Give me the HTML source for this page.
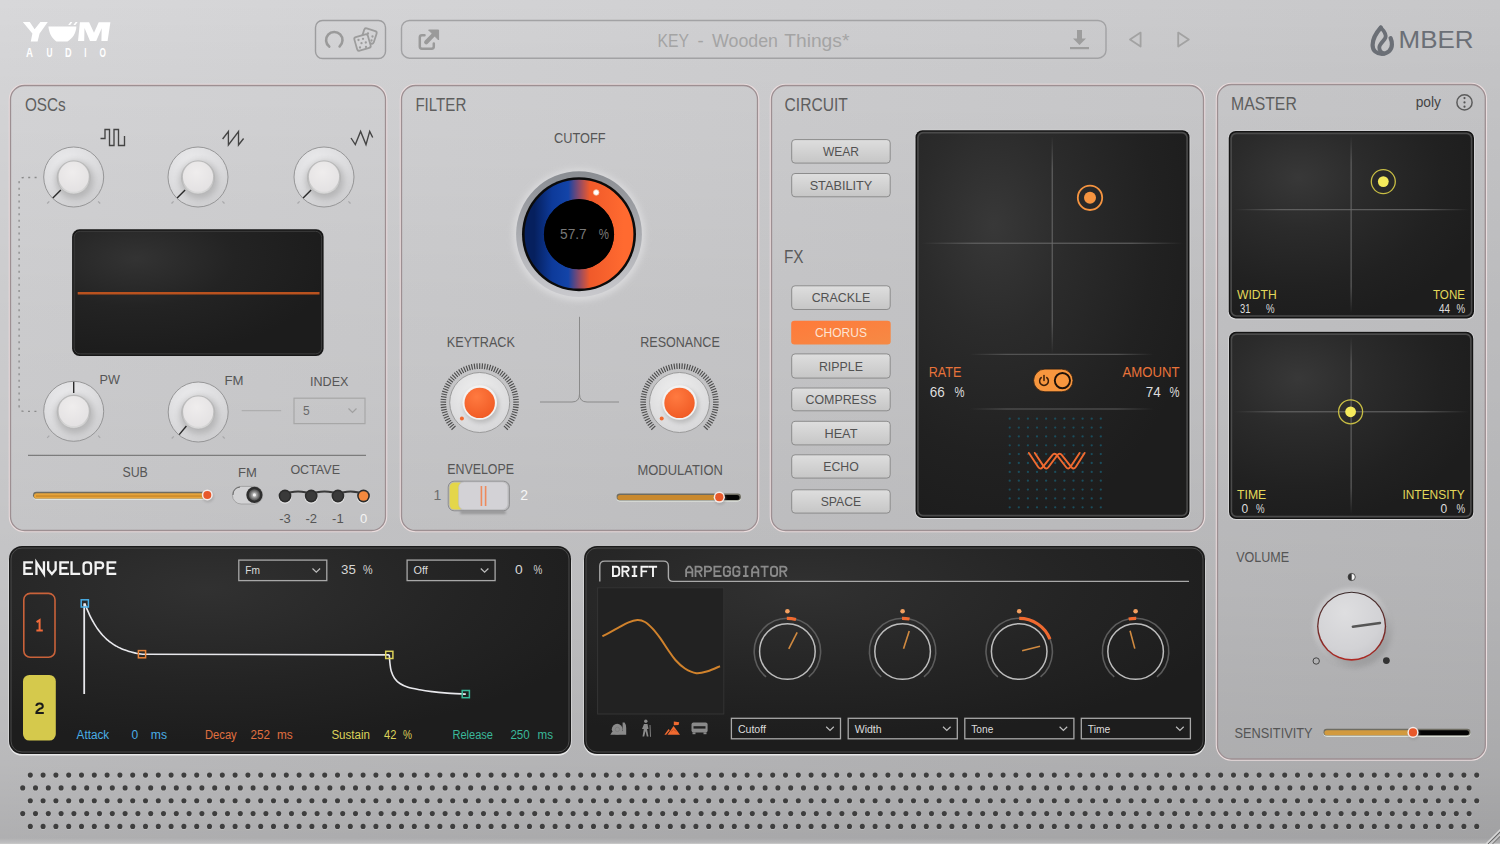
<!DOCTYPE html>
<html><head><meta charset="utf-8"><style>
html,body{margin:0;padding:0;width:1500px;height:844px;overflow:hidden;background:#cfcfd1}
svg{display:block}
</style></head><body>
<svg width="1500" height="844" viewBox="0 0 1500 844">
<defs>
<linearGradient id="bg" x1="0" y1="0" x2="1" y2="0">
  <stop offset="0" stop-color="#d8d8da"/>
  <stop offset="1" stop-color="#c7c7c9"/>
</linearGradient>
<linearGradient id="bgv" x1="0" y1="0" x2="0" y2="1">
  <stop offset="0" stop-color="#000" stop-opacity="0"/>
  <stop offset="0.085" stop-color="#000" stop-opacity="0.02"/>
  <stop offset="0.36" stop-color="#000" stop-opacity="0.058"/>
  <stop offset="0.47" stop-color="#000" stop-opacity="0.067"/>
  <stop offset="0.7" stop-color="#000" stop-opacity="0.1"/>
  <stop offset="0.906" stop-color="#000" stop-opacity="0.145"/>
  <stop offset="0.993" stop-color="#000" stop-opacity="0.19"/>
  <stop offset="1" stop-color="#000" stop-opacity="0.1"/>
</linearGradient>
<radialGradient id="padglow" cx="0.3" cy="0.3" r="0.7">
  <stop offset="0" stop-color="#2f2f2f"/>
  <stop offset="1" stop-color="#1c1c1c"/>
</radialGradient>
<radialGradient id="darkpanel" cx="0.35" cy="0.2" r="0.75">
  <stop offset="0" stop-color="#313131"/>
  <stop offset="0.6" stop-color="#242424"/>
  <stop offset="1" stop-color="#1d1d1d"/>
</radialGradient>
<linearGradient id="btn" x1="0" y1="0" x2="0" y2="1">
  <stop offset="0" stop-color="#dedede"/>
  <stop offset="1" stop-color="#c6c6c6"/>
</linearGradient>
<linearGradient id="btnOn" x1="0" y1="0" x2="1" y2="1">
  <stop offset="0" stop-color="#ff7a3a"/>
  <stop offset="1" stop-color="#f58a45"/>
</linearGradient>
<radialGradient id="knobOuter" cx="0.4" cy="0.3" r="0.75">
  <stop offset="0" stop-color="#ececee"/>
  <stop offset="0.6" stop-color="#dddddf"/>
  <stop offset="1" stop-color="#cdcdcf"/>
</radialGradient>
<radialGradient id="capFace" cx="0.45" cy="0.35" r="0.7">
  <stop offset="0" stop-color="#efeded"/>
  <stop offset="1" stop-color="#e3e1e2"/>
</radialGradient>
<linearGradient id="capSide" x1="0" y1="0" x2="0" y2="1">
  <stop offset="0" stop-color="#c2c2c2"/>
  <stop offset="0.55" stop-color="#bcbcbc"/>
  <stop offset="1" stop-color="#dcdcdc"/>
</linearGradient>
<filter id="blur2" x="-50%" y="-50%" width="200%" height="200%"><feGaussianBlur stdDeviation="2"/></filter>
<filter id="blur3" x="-50%" y="-50%" width="200%" height="200%"><feGaussianBlur stdDeviation="3"/></filter>
<filter id="blur1" x="-50%" y="-50%" width="200%" height="200%"><feGaussianBlur stdDeviation="1"/></filter>
<radialGradient id="screenGlow" cx="0.25" cy="0.22" r="0.8">
  <stop offset="0" stop-color="#333333"/>
  <stop offset="0.5" stop-color="#232323"/>
  <stop offset="1" stop-color="#1c1c1c"/>
</radialGradient>
<linearGradient id="cutRing" x1="0" y1="0" x2="1" y2="0">
  <stop offset="0" stop-color="#06205e"/>
  <stop offset="0.2" stop-color="#0d3a9a"/>
  <stop offset="0.38" stop-color="#1344a8"/>
  <stop offset="0.5" stop-color="#8a4a6a"/>
  <stop offset="0.62" stop-color="#f05a2a"/>
  <stop offset="1" stop-color="#ff6a30"/>
</linearGradient>
<linearGradient id="cutOuter" x1="0" y1="0" x2="0" y2="1">
  <stop offset="0" stop-color="#8a8d92"/>
  <stop offset="0.5" stop-color="#a9abb0"/>
  <stop offset="1" stop-color="#c9c9cd"/>
</linearGradient>
<radialGradient id="discLight" cx="0.45" cy="0.35" r="0.7">
  <stop offset="0" stop-color="#f0f0f0"/>
  <stop offset="1" stop-color="#d6d6d8"/>
</radialGradient>
<radialGradient id="orangeCap" cx="0.4" cy="0.3" r="0.75">
  <stop offset="0" stop-color="#ff7a40"/>
  <stop offset="1" stop-color="#f05a24"/>
</radialGradient>
<linearGradient id="hfade" x1="0" y1="0" x2="1" y2="0">
  <stop offset="0" stop-color="#6a6a6a" stop-opacity="0"/>
  <stop offset="0.2" stop-color="#6a6a6a" stop-opacity="1"/>
  <stop offset="0.8" stop-color="#6a6a6a" stop-opacity="1"/>
  <stop offset="1" stop-color="#6a6a6a" stop-opacity="0"/>
</linearGradient>
<linearGradient id="vfade" x1="0" y1="0" x2="0" y2="1">
  <stop offset="0" stop-color="#6a6a6a" stop-opacity="0"/>
  <stop offset="0.15" stop-color="#6a6a6a" stop-opacity="1"/>
  <stop offset="0.85" stop-color="#6a6a6a" stop-opacity="1"/>
  <stop offset="1" stop-color="#6a6a6a" stop-opacity="0"/>
</linearGradient>
<radialGradient id="padFill" cx="0.28" cy="0.24" r="0.8">
  <stop offset="0" stop-color="#383838"/>
  <stop offset="0.35" stop-color="#2b2b2b"/>
  <stop offset="0.75" stop-color="#212121"/>
  <stop offset="1" stop-color="#1d1d1d"/>
</radialGradient>
<radialGradient id="volKnob" cx="0.4" cy="0.3" r="0.8">
  <stop offset="0" stop-color="#dedee0"/>
  <stop offset="0.7" stop-color="#d2d2d5"/>
  <stop offset="1" stop-color="#c6c6ca"/>
</radialGradient>
<linearGradient id="volRim" x1="0" y1="0" x2="0" y2="1">
  <stop offset="0" stop-color="#3a2a2a"/>
  <stop offset="0.5" stop-color="#6a2a28"/>
  <stop offset="1" stop-color="#b02a24"/>
</linearGradient>
</defs>
<rect x="0" y="0" width="1500" height="844" fill="url(#bg)"/>
<rect x="0" y="0" width="1500" height="844" fill="url(#bgv)"/>
<rect x="9.5" y="84.5" width="377" height="447" rx="15" fill="none" stroke="#eadcdd" stroke-width="1.5"/>
<rect x="10.5" y="85.5" width="375" height="445" rx="14" fill="none" stroke="#9d8f92" stroke-width="1.3"/>
<rect x="400.5" y="84.5" width="358" height="447" rx="15" fill="none" stroke="#eadcdd" stroke-width="1.5"/>
<rect x="401.5" y="85.5" width="356" height="445" rx="14" fill="none" stroke="#9d8f92" stroke-width="1.3"/>
<rect x="770.5" y="84.5" width="434" height="447" rx="15" fill="none" stroke="#eadcdd" stroke-width="1.5"/>
<rect x="771.5" y="85.5" width="432" height="445" rx="14" fill="none" stroke="#9d8f92" stroke-width="1.3"/>
<rect x="1216.5" y="83.5" width="269.79999999999995" height="676.5" rx="15" fill="none" stroke="#eadcdd" stroke-width="1.5"/>
<rect x="1217.5" y="84.5" width="267.79999999999995" height="674.5" rx="14" fill="none" stroke="#9d8f92" stroke-width="1.3"/>
<text x="24.9" y="110.7" font-size="18" fill="#5e5e5e" text-anchor="start" font-weight="normal" font-family='"Liberation Sans", sans-serif' textLength="40.8" lengthAdjust="spacingAndGlyphs" >OSCs</text>
<text x="415.4" y="110.5" font-size="18" fill="#5e5e5e" text-anchor="start" font-weight="normal" font-family='"Liberation Sans", sans-serif' textLength="50.9" lengthAdjust="spacingAndGlyphs" >FILTER</text>
<text x="784.6" y="110.7" font-size="18" fill="#5e5e5e" text-anchor="start" font-weight="normal" font-family='"Liberation Sans", sans-serif' textLength="63.3" lengthAdjust="spacingAndGlyphs" >CIRCUIT</text>
<text x="1231" y="110.2" font-size="18" fill="#5e5e5e" text-anchor="start" font-weight="normal" font-family='"Liberation Sans", sans-serif' textLength="65.8" lengthAdjust="spacingAndGlyphs" >MASTER</text>
<g fill="#ffffff">
<polygon points="22.8,22 29.8,22 34.6,29.2 40.4,22 47.8,22 39.6,33.5 37.6,41.6 30.8,41.6 32.4,33.5"/>
<path d="M48.4,26.4 L76.4,26.4 C76,33 72.5,38.5 67.4,41.4 L56.4,41.4 C52,38.5 49,33 48.4,26.4 Z"/>
<polygon points="68.2,25 70.4,22 72.4,22 70.2,25"/><polygon points="73.4,25 75.6,22 77.6,22 75.4,25"/>
<polygon points="79.9,22.2 89.1,22.2 94,32.8 98.7,22.2 110.4,22.2 107.6,41.1 101.4,41.1 101.7,28.2 96.2,41.1 90,41.1 84.5,27.9 84.2,41.1 78,41.1"/>
</g>
<text x="26" y="56.8" font-size="13" fill="#ffffff" text-anchor="start" font-weight="bold" font-family='"Liberation Sans", sans-serif' textLength="7" lengthAdjust="spacingAndGlyphs" >A</text>
<text x="46.4" y="56.8" font-size="13" fill="#ffffff" text-anchor="start" font-weight="bold" font-family='"Liberation Sans", sans-serif' textLength="6.0" lengthAdjust="spacingAndGlyphs" >U</text>
<text x="65" y="56.8" font-size="13" fill="#ffffff" text-anchor="start" font-weight="bold" font-family='"Liberation Sans", sans-serif' textLength="6.599999999999994" lengthAdjust="spacingAndGlyphs" >D</text>
<text x="84.2" y="56.8" font-size="13" fill="#ffffff" text-anchor="start" font-weight="bold" font-family='"Liberation Sans", sans-serif' textLength="2.2" lengthAdjust="spacingAndGlyphs" >I</text>
<text x="99.6" y="56.8" font-size="13" fill="#ffffff" text-anchor="start" font-weight="bold" font-family='"Liberation Sans", sans-serif' textLength="6.400000000000006" lengthAdjust="spacingAndGlyphs" >O</text>
<rect x="315.5" y="20.5" width="70" height="38" rx="7" fill="none" stroke="#9d9d9f" stroke-width="1.4"/>
<path d="M329.2,46.6 A8.2,8.2 0 1 1 339.6,46.4" fill="none" stroke="#9a9a9a" stroke-width="2.6" stroke-linecap="round"/>
<g fill="none" stroke="#9c9c9c" stroke-width="1.8" stroke-linejoin="round">
<rect x="362.5" y="29.5" width="13" height="13" rx="2" transform="rotate(18 369 36)"/>
<rect x="355.5" y="35.5" width="14" height="14" rx="2" fill="#d4d4d6" transform="rotate(-16 362.5 42.5)"/>
</g>
<g fill="#9c9c9c">
<circle cx="368" cy="33.5" r="1.15"/>
<circle cx="372.5" cy="36.5" r="1.15"/>
<circle cx="371.5" cy="40.5" r="1.15"/>
<circle cx="358.5" cy="40" r="1.15"/>
<circle cx="363" cy="38.8" r="1.15"/>
<circle cx="361.5" cy="43.2" r="1.15"/>
<circle cx="366" cy="47" r="1.15"/>
<circle cx="360" cy="47.5" r="1.15"/>
<circle cx="365.8" cy="42.5" r="1.15"/>
</g>
<rect x="401.5" y="20.5" width="704.5" height="37.7" rx="8" fill="none" stroke="#a2a2a4" stroke-width="1.4"/>
<path d="M424.5,35.2 L422,35.2 Q419.8,35.2 419.8,37.4 L419.8,46.6 Q419.8,48.8 422,48.8 L431.6,48.8 Q433.8,48.8 433.8,46.6 L433.8,43.5" fill="none" stroke="#9a9a9a" stroke-width="2.5" stroke-linecap="round"/>
<line x1="426.2" y1="42.2" x2="433.6" y2="34.6" stroke="#9a9a9a" stroke-width="4.2" stroke-linecap="round"/>
<polygon points="428.6,30 438.6,30 438.6,40" fill="#9a9a9a" stroke="#9a9a9a" stroke-width="1" stroke-linejoin="round"/>
<text x="657.6" y="46.8" font-size="18" fill="#a4a4a4" text-anchor="start" font-weight="normal" font-family='"Liberation Sans", sans-serif' textLength="31.5" lengthAdjust="spacingAndGlyphs" >KEY</text>
<text x="697.4" y="46.8" font-size="18" fill="#a4a4a4" text-anchor="start" font-weight="normal" font-family='"Liberation Sans", sans-serif' textLength="6.2" lengthAdjust="spacingAndGlyphs" >-</text>
<text x="712" y="46.8" font-size="18" fill="#a4a4a4" text-anchor="start" font-weight="normal" font-family='"Liberation Sans", sans-serif' textLength="66" lengthAdjust="spacingAndGlyphs" >Wooden</text>
<text x="784.2" y="46.8" font-size="18" fill="#a4a4a4" text-anchor="start" font-weight="normal" font-family='"Liberation Sans", sans-serif' textLength="65.2" lengthAdjust="spacingAndGlyphs" >Things*</text>
<path d="M1077,30 L1082,30 L1082,38.5 L1086,38.5 L1079.5,45 L1073,38.5 L1077,38.5 Z" fill="#9d9d9d"/>
<rect x="1070" y="47" width="19" height="2.2" fill="#9d9d9d"/>
<path d="M1140.6,32.6 L1130,39.6 L1140.6,46.6 Z" fill="none" stroke="#a2a2a2" stroke-width="1.8" stroke-linejoin="round"/>
<path d="M1178.2,32.6 L1188.8,39.6 L1178.2,46.6 Z" fill="none" stroke="#a2a2a2" stroke-width="1.8" stroke-linejoin="round"/>
<path d="M1380.9,27.5 C1376,33 1372.6,38.5 1372.6,45 C1372.6,50.6 1376.6,53.8 1381.9,53.8 C1387.6,53.8 1391.9,50 1391.9,44.5 C1391.9,42 1391.4,40 1390.6,38.2" fill="none" stroke="#6b6f76" stroke-width="4.2" stroke-linecap="round"/>
<path d="M1380.6,27.5 C1384,30.8 1386.8,34 1385.4,37.8 C1384,41.2 1379.2,43.6 1379.3,47.6 C1379.4,50.6 1381,52.6 1384,53.6" fill="none" stroke="#6b6f76" stroke-width="3.8" stroke-linecap="round"/>
<text x="1398.6" y="48.4" font-size="23" fill="#6b6f76" text-anchor="start" font-weight="normal" font-family='"Liberation Sans", sans-serif' textLength="75" lengthAdjust="spacingAndGlyphs" >MBER</text>
<path d="M36.6,177.5 L24,177.5 Q19.1,177.5 19.1,182.5 L19.1,406 Q19.1,411.3 24,411.3 L37,411.3" fill="none" stroke="#8a8a8a" stroke-width="1.3" stroke-dasharray="2 4.4"/>
<circle cx="73.7" cy="177" r="30" fill="url(#knobOuter)" stroke="#8e8e90" stroke-width="0.9"/>
<circle cx="74.7" cy="180" r="19.3" fill="#8a8a8a" opacity="0.45" filter="url(#blur3)"/>
<circle cx="73.7" cy="177.4" r="16.6" fill="url(#capSide)" stroke="#b0b0b0" stroke-width="0.6"/>
<circle cx="73.7" cy="176.7" r="15.100000000000001" fill="url(#capFace)"/>
<line x1="60.8" y1="189.9" x2="52.8" y2="197.9" stroke="#2a2a2a" stroke-width="1.4"/>
<line x1="49.3" y1="201.4" x2="47.2" y2="203.5" stroke="#a8a8aa" stroke-width="1.2"/>
<line x1="98.1" y1="201.4" x2="100.2" y2="203.5" stroke="#a8a8aa" stroke-width="1.2"/>
<circle cx="198" cy="177" r="30" fill="url(#knobOuter)" stroke="#8e8e90" stroke-width="0.9"/>
<circle cx="199" cy="180" r="19.3" fill="#8a8a8a" opacity="0.45" filter="url(#blur3)"/>
<circle cx="198" cy="177.4" r="16.6" fill="url(#capSide)" stroke="#b0b0b0" stroke-width="0.6"/>
<circle cx="198" cy="176.7" r="15.100000000000001" fill="url(#capFace)"/>
<line x1="185.1" y1="189.9" x2="177.1" y2="197.9" stroke="#2a2a2a" stroke-width="1.4"/>
<line x1="173.6" y1="201.4" x2="171.5" y2="203.5" stroke="#a8a8aa" stroke-width="1.2"/>
<line x1="222.4" y1="201.4" x2="224.5" y2="203.5" stroke="#a8a8aa" stroke-width="1.2"/>
<circle cx="324" cy="177" r="30" fill="url(#knobOuter)" stroke="#8e8e90" stroke-width="0.9"/>
<circle cx="325" cy="180" r="19.3" fill="#8a8a8a" opacity="0.45" filter="url(#blur3)"/>
<circle cx="324" cy="177.4" r="16.6" fill="url(#capSide)" stroke="#b0b0b0" stroke-width="0.6"/>
<circle cx="324" cy="176.7" r="15.100000000000001" fill="url(#capFace)"/>
<line x1="311.1" y1="189.9" x2="303.1" y2="197.9" stroke="#2a2a2a" stroke-width="1.4"/>
<line x1="299.6" y1="201.4" x2="297.5" y2="203.5" stroke="#a8a8aa" stroke-width="1.2"/>
<line x1="348.4" y1="201.4" x2="350.5" y2="203.5" stroke="#a8a8aa" stroke-width="1.2"/>
<path d="M100.5,138.5 L105,138.5 L105,129.5 L109.5,129.5 L109.5,145.5 L114,145.5 L114,129.5 L118.5,129.5 L118.5,145.5 L124.5,145.5 L124.5,136" fill="none" stroke="#444" stroke-width="1.35"/>
<path d="M222.6,139 L228.4,131.5 L228.4,145 L238.5,131.5 L238.5,145 L243.6,138.5" fill="none" stroke="#444" stroke-width="1.35" stroke-linejoin="miter"/>
<path d="M351,138 L355.3,144.6 L360.6,131.4 L366,144.6 L369.7,131.4 L372.7,137.5" fill="none" stroke="#444" stroke-width="1.35"/>
<rect x="72.1" y="229.3" width="251.5" height="126.6" rx="7.5" fill="#171717"/>
<rect x="74.1" y="231.3" width="247.5" height="122.6" rx="6" fill="url(#screenGlow)" stroke="#3d3d3d" stroke-width="1"/>
<line x1="77.7" y1="293.2" x2="319.5" y2="293.2" stroke="#b9521f" stroke-width="2.4"/>
<circle cx="73.7" cy="411.3" r="30" fill="url(#knobOuter)" stroke="#8e8e90" stroke-width="0.9"/>
<circle cx="74.7" cy="414.3" r="19.3" fill="#8a8a8a" opacity="0.45" filter="url(#blur3)"/>
<circle cx="73.7" cy="411.7" r="16.6" fill="url(#capSide)" stroke="#b0b0b0" stroke-width="0.6"/>
<circle cx="73.7" cy="411.0" r="15.100000000000001" fill="url(#capFace)"/>
<line x1="73.7" y1="393.0" x2="73.7" y2="381.8" stroke="#2a2a2a" stroke-width="1.4"/>
<line x1="49.3" y1="435.7" x2="47.2" y2="437.8" stroke="#a8a8aa" stroke-width="1.2"/>
<line x1="98.1" y1="435.7" x2="100.2" y2="437.8" stroke="#a8a8aa" stroke-width="1.2"/>
<circle cx="198.2" cy="412" r="30" fill="url(#knobOuter)" stroke="#8e8e90" stroke-width="0.9"/>
<circle cx="199.2" cy="415" r="19.3" fill="#8a8a8a" opacity="0.45" filter="url(#blur3)"/>
<circle cx="198.2" cy="412.4" r="16.6" fill="url(#capSide)" stroke="#b0b0b0" stroke-width="0.6"/>
<circle cx="198.2" cy="411.7" r="15.100000000000001" fill="url(#capFace)"/>
<line x1="186.4" y1="426.0" x2="179.2" y2="434.6" stroke="#2a2a2a" stroke-width="1.4"/>
<line x1="173.8" y1="436.4" x2="171.7" y2="438.5" stroke="#a8a8aa" stroke-width="1.2"/>
<line x1="222.6" y1="436.4" x2="224.7" y2="438.5" stroke="#a8a8aa" stroke-width="1.2"/>
<text x="99.6" y="383.7" font-size="13.5" fill="#565656" text-anchor="start" font-weight="normal" font-family='"Liberation Sans", sans-serif' textLength="20.4" lengthAdjust="spacingAndGlyphs" >PW</text>
<text x="224.4" y="384.5" font-size="13.5" fill="#565656" text-anchor="start" font-weight="normal" font-family='"Liberation Sans", sans-serif' textLength="19" lengthAdjust="spacingAndGlyphs" >FM</text>
<text x="310" y="386" font-size="13.5" fill="#565656" text-anchor="start" font-weight="normal" font-family='"Liberation Sans", sans-serif' textLength="38.4" lengthAdjust="spacingAndGlyphs" >INDEX</text>
<line x1="241.7" y1="410.7" x2="281.2" y2="410.7" stroke="#a9a9a9" stroke-width="1"/>
<rect x="294" y="398.2" width="71" height="25.4" fill="none" stroke="#a7a7a7" stroke-width="1.2"/>
<text x="303" y="415" font-size="12" fill="#6a6a6a" text-anchor="start" font-weight="normal" font-family='"Liberation Sans", sans-serif' >5</text>
<path d="M348.5,408.5 L352.5,412.5 L356.5,408.5" fill="none" stroke="#a0a0a0" stroke-width="1.2"/>
<line x1="28" y1="455.3" x2="366" y2="455.3" stroke="#7c7c7c" stroke-width="1.2"/>
<text x="122.4" y="476.6" font-size="14.5" fill="#565656" text-anchor="start" font-weight="normal" font-family='"Liberation Sans", sans-serif' textLength="25.4" lengthAdjust="spacingAndGlyphs" >SUB</text>
<text x="238" y="477.4" font-size="13.5" fill="#565656" text-anchor="start" font-weight="normal" font-family='"Liberation Sans", sans-serif' textLength="18.8" lengthAdjust="spacingAndGlyphs" >FM</text>
<text x="290.4" y="474.2" font-size="13.5" fill="#565656" text-anchor="start" font-weight="normal" font-family='"Liberation Sans", sans-serif' textLength="49.6" lengthAdjust="spacingAndGlyphs" >OCTAVE</text>
<rect x="33" y="492.2" width="176" height="7.6" rx="3.8" fill="#e9efe6"/>
<rect x="33" y="491.8" width="176" height="6.8" rx="3.4" fill="#6e6c62"/>
<rect x="34" y="493.2" width="174" height="5.3" rx="2.6" fill="#e6a43a"/>
<rect x="36" y="495.2" width="170" height="1.8" fill="#c98a2a" opacity="0.8"/>
<circle cx="208" cy="496.6" r="6" fill="#8a8a8a" opacity="0.4" filter="url(#blur1)"/>
<circle cx="207.3" cy="494.9" r="5.5" fill="#f4ecea"/>
<circle cx="207.3" cy="494.9" r="4" fill="#e8582a"/>
<rect x="231.9" y="485.9" width="31.2" height="18.6" rx="9.3" fill="#c4c4c6"/>
<rect x="232.4" y="486.4" width="30.2" height="17.6" rx="8.8" fill="#d2d2d4" stroke="#8a8a8a" stroke-width="0.6"/>
<path d="M240,487 Q233,488 233,495" fill="none" stroke="#6a6a6a" stroke-width="1"/>
<circle cx="254.4" cy="494.9" r="8.1" fill="#2e2e2e"/>
<circle cx="254.4" cy="494.9" r="5.6" fill="#555555"/>
<circle cx="254.4" cy="494.9" r="3.6" fill="#b0b0b0" filter="url(#blur1)"/>
<circle cx="254.4" cy="494.9" r="1.6" fill="#f4f4f4"/>
<path d="M285,494.5 C292,490.5 304,490.5 311.2,494.5 C318,490.5 331,490.5 337.9,494.5 C345,490.5 356,490.5 363.5,494.5" fill="none" stroke="#3a3a3a" stroke-width="2"/>
<circle cx="285" cy="497.2" r="6.6" fill="#f4f4f4" opacity="0.7"/>
<circle cx="285" cy="496" r="6.4" fill="#2c2c2c"/>
<circle cx="285" cy="496" r="4.8" fill="#3a3a3a"/>
<circle cx="311.2" cy="497.2" r="6.6" fill="#f4f4f4" opacity="0.7"/>
<circle cx="311.2" cy="496" r="6.4" fill="#2c2c2c"/>
<circle cx="311.2" cy="496" r="4.8" fill="#3a3a3a"/>
<circle cx="337.9" cy="497.2" r="6.6" fill="#f4f4f4" opacity="0.7"/>
<circle cx="337.9" cy="496" r="6.4" fill="#2c2c2c"/>
<circle cx="337.9" cy="496" r="4.8" fill="#3a3a3a"/>
<circle cx="363.5" cy="497.2" r="6.6" fill="#f4f4f4" opacity="0.7"/>
<circle cx="363.5" cy="496" r="6.4" fill="#2c2c2c"/>
<circle cx="363.5" cy="496" r="4.8" fill="#f4893e"/>
<text x="285" y="523.3" font-size="13" fill="#555555" text-anchor="middle" font-weight="normal" font-family='"Liberation Sans", sans-serif' >-3</text>
<text x="311.2" y="523.3" font-size="13" fill="#555555" text-anchor="middle" font-weight="normal" font-family='"Liberation Sans", sans-serif' >-2</text>
<text x="337.9" y="523.3" font-size="13" fill="#555555" text-anchor="middle" font-weight="normal" font-family='"Liberation Sans", sans-serif' >-1</text>
<text x="363.5" y="523.3" font-size="13" fill="#f4f4f4" text-anchor="middle" font-weight="normal" font-family='"Liberation Sans", sans-serif' >0</text>
<text x="554" y="143.1" font-size="14.5" fill="#565656" text-anchor="start" font-weight="normal" font-family='"Liberation Sans", sans-serif' textLength="51.5" lengthAdjust="spacingAndGlyphs" >CUTOFF</text>
<circle cx="579" cy="235" r="66" fill="#e6e6e8" opacity="0.6" filter="url(#blur3)"/>
<circle cx="579" cy="234.2" r="62.9" fill="url(#cutOuter)"/>
<circle cx="579" cy="234.2" r="57" fill="#0b0b0b"/>
<circle cx="579" cy="234.2" r="44.7" fill="none" stroke="url(#cutRing)" stroke-width="19.4"/>
<circle cx="579" cy="234.2" r="35.1" fill="#000000"/>
<circle cx="596.2" cy="192.5" r="2.8" fill="#ffffff" stroke="#f2c0a0" stroke-width="0.8"/>
<text x="560" y="239.1" font-size="14" fill="#787878" text-anchor="start" font-weight="normal" font-family='"Liberation Sans", sans-serif' textLength="26.7" lengthAdjust="spacingAndGlyphs" >57.7</text>
<text x="598.8" y="239.1" font-size="14" fill="#787878" text-anchor="start" font-weight="normal" font-family='"Liberation Sans", sans-serif' textLength="10.2" lengthAdjust="spacingAndGlyphs" >%</text>
<path d="M579.5,316.8 L579.5,394 Q579.5,402 572,402 L540,402 M579.5,394 Q579.5,402 587,402 L619,402" fill="none" stroke="#8a8a8a" stroke-width="1"/>
<line x1="455.53" y1="425.84" x2="451.50" y2="429.73" stroke="#4c4c4c" stroke-width="1.15"/>
<line x1="453.94" y1="424.07" x2="449.64" y2="427.67" stroke="#4c4c4c" stroke-width="1.15"/>
<line x1="452.48" y1="422.19" x2="447.94" y2="425.47" stroke="#4c4c4c" stroke-width="1.15"/>
<line x1="451.15" y1="420.21" x2="446.39" y2="423.17" stroke="#4c4c4c" stroke-width="1.15"/>
<line x1="449.97" y1="418.15" x2="445.01" y2="420.76" stroke="#4c4c4c" stroke-width="1.15"/>
<line x1="448.93" y1="416.00" x2="443.81" y2="418.25" stroke="#4c4c4c" stroke-width="1.15"/>
<line x1="448.05" y1="413.79" x2="442.78" y2="415.67" stroke="#4c4c4c" stroke-width="1.15"/>
<line x1="447.33" y1="411.52" x2="441.94" y2="413.03" stroke="#4c4c4c" stroke-width="1.15"/>
<line x1="446.78" y1="409.21" x2="441.29" y2="410.33" stroke="#4c4c4c" stroke-width="1.15"/>
<line x1="446.38" y1="406.86" x2="440.83" y2="407.59" stroke="#4c4c4c" stroke-width="1.15"/>
<line x1="446.16" y1="404.49" x2="440.57" y2="404.82" stroke="#4c4c4c" stroke-width="1.15"/>
<line x1="446.10" y1="402.11" x2="440.50" y2="402.04" stroke="#4c4c4c" stroke-width="1.15"/>
<line x1="446.21" y1="399.73" x2="440.63" y2="399.27" stroke="#4c4c4c" stroke-width="1.15"/>
<line x1="446.49" y1="397.37" x2="440.96" y2="396.51" stroke="#4c4c4c" stroke-width="1.15"/>
<line x1="446.94" y1="395.03" x2="441.48" y2="393.78" stroke="#4c4c4c" stroke-width="1.15"/>
<line x1="447.55" y1="392.73" x2="442.19" y2="391.10" stroke="#4c4c4c" stroke-width="1.15"/>
<line x1="448.33" y1="390.48" x2="443.10" y2="388.47" stroke="#4c4c4c" stroke-width="1.15"/>
<line x1="449.26" y1="388.28" x2="444.18" y2="385.91" stroke="#4c4c4c" stroke-width="1.15"/>
<line x1="450.34" y1="386.16" x2="445.45" y2="383.44" stroke="#4c4c4c" stroke-width="1.15"/>
<line x1="451.57" y1="384.13" x2="446.88" y2="381.06" stroke="#4c4c4c" stroke-width="1.15"/>
<line x1="452.94" y1="382.18" x2="448.48" y2="378.79" stroke="#4c4c4c" stroke-width="1.15"/>
<line x1="454.45" y1="380.34" x2="450.24" y2="376.64" stroke="#4c4c4c" stroke-width="1.15"/>
<line x1="456.08" y1="378.60" x2="452.14" y2="374.62" stroke="#4c4c4c" stroke-width="1.15"/>
<line x1="457.83" y1="376.99" x2="454.19" y2="372.74" stroke="#4c4c4c" stroke-width="1.15"/>
<line x1="459.69" y1="375.51" x2="456.36" y2="371.01" stroke="#4c4c4c" stroke-width="1.15"/>
<line x1="461.65" y1="374.16" x2="458.65" y2="369.43" stroke="#4c4c4c" stroke-width="1.15"/>
<line x1="463.71" y1="372.95" x2="461.04" y2="368.03" stroke="#4c4c4c" stroke-width="1.15"/>
<line x1="465.84" y1="371.89" x2="463.53" y2="366.79" stroke="#4c4c4c" stroke-width="1.15"/>
<line x1="468.04" y1="370.99" x2="466.10" y2="365.74" stroke="#4c4c4c" stroke-width="1.15"/>
<line x1="470.30" y1="370.24" x2="468.74" y2="364.86" stroke="#4c4c4c" stroke-width="1.15"/>
<line x1="472.61" y1="369.66" x2="471.43" y2="364.18" stroke="#4c4c4c" stroke-width="1.15"/>
<line x1="474.95" y1="369.24" x2="474.16" y2="363.69" stroke="#4c4c4c" stroke-width="1.15"/>
<line x1="477.32" y1="368.98" x2="476.92" y2="363.40" stroke="#4c4c4c" stroke-width="1.15"/>
<line x1="479.70" y1="368.90" x2="479.70" y2="363.30" stroke="#4c4c4c" stroke-width="1.15"/>
<line x1="482.08" y1="368.98" x2="482.48" y2="363.40" stroke="#4c4c4c" stroke-width="1.15"/>
<line x1="484.45" y1="369.24" x2="485.24" y2="363.69" stroke="#4c4c4c" stroke-width="1.15"/>
<line x1="486.79" y1="369.66" x2="487.97" y2="364.18" stroke="#4c4c4c" stroke-width="1.15"/>
<line x1="489.10" y1="370.24" x2="490.66" y2="364.86" stroke="#4c4c4c" stroke-width="1.15"/>
<line x1="491.36" y1="370.99" x2="493.30" y2="365.74" stroke="#4c4c4c" stroke-width="1.15"/>
<line x1="493.56" y1="371.89" x2="495.87" y2="366.79" stroke="#4c4c4c" stroke-width="1.15"/>
<line x1="495.69" y1="372.95" x2="498.36" y2="368.03" stroke="#4c4c4c" stroke-width="1.15"/>
<line x1="497.75" y1="374.16" x2="500.75" y2="369.43" stroke="#4c4c4c" stroke-width="1.15"/>
<line x1="499.71" y1="375.51" x2="503.04" y2="371.01" stroke="#4c4c4c" stroke-width="1.15"/>
<line x1="501.57" y1="376.99" x2="505.21" y2="372.74" stroke="#4c4c4c" stroke-width="1.15"/>
<line x1="503.32" y1="378.60" x2="507.26" y2="374.62" stroke="#4c4c4c" stroke-width="1.15"/>
<line x1="504.95" y1="380.34" x2="509.16" y2="376.64" stroke="#4c4c4c" stroke-width="1.15"/>
<line x1="506.46" y1="382.18" x2="510.92" y2="378.79" stroke="#4c4c4c" stroke-width="1.15"/>
<line x1="507.83" y1="384.13" x2="512.52" y2="381.06" stroke="#4c4c4c" stroke-width="1.15"/>
<line x1="509.06" y1="386.16" x2="513.95" y2="383.44" stroke="#4c4c4c" stroke-width="1.15"/>
<line x1="510.14" y1="388.28" x2="515.22" y2="385.91" stroke="#4c4c4c" stroke-width="1.15"/>
<line x1="511.07" y1="390.48" x2="516.30" y2="388.47" stroke="#4c4c4c" stroke-width="1.15"/>
<line x1="511.85" y1="392.73" x2="517.21" y2="391.10" stroke="#4c4c4c" stroke-width="1.15"/>
<line x1="512.46" y1="395.03" x2="517.92" y2="393.78" stroke="#4c4c4c" stroke-width="1.15"/>
<line x1="512.91" y1="397.37" x2="518.44" y2="396.51" stroke="#4c4c4c" stroke-width="1.15"/>
<line x1="513.19" y1="399.73" x2="518.77" y2="399.27" stroke="#4c4c4c" stroke-width="1.15"/>
<line x1="513.30" y1="402.11" x2="518.90" y2="402.04" stroke="#4c4c4c" stroke-width="1.15"/>
<line x1="513.24" y1="404.49" x2="518.83" y2="404.82" stroke="#4c4c4c" stroke-width="1.15"/>
<line x1="513.02" y1="406.86" x2="518.57" y2="407.59" stroke="#4c4c4c" stroke-width="1.15"/>
<line x1="512.62" y1="409.21" x2="518.11" y2="410.33" stroke="#4c4c4c" stroke-width="1.15"/>
<line x1="512.07" y1="411.52" x2="517.46" y2="413.03" stroke="#4c4c4c" stroke-width="1.15"/>
<line x1="511.35" y1="413.79" x2="516.62" y2="415.67" stroke="#4c4c4c" stroke-width="1.15"/>
<line x1="510.47" y1="416.00" x2="515.59" y2="418.25" stroke="#4c4c4c" stroke-width="1.15"/>
<line x1="509.43" y1="418.15" x2="514.39" y2="420.76" stroke="#4c4c4c" stroke-width="1.15"/>
<line x1="508.25" y1="420.21" x2="513.01" y2="423.17" stroke="#4c4c4c" stroke-width="1.15"/>
<line x1="506.92" y1="422.19" x2="511.46" y2="425.47" stroke="#4c4c4c" stroke-width="1.15"/>
<line x1="505.46" y1="424.07" x2="509.76" y2="427.67" stroke="#4c4c4c" stroke-width="1.15"/>
<line x1="503.87" y1="425.84" x2="507.90" y2="429.73" stroke="#4c4c4c" stroke-width="1.15"/>
<circle cx="479.7" cy="402.5" r="30" fill="url(#discLight)" stroke="#9a9a9a" stroke-width="1"/>
<circle cx="481.2" cy="405.0" r="18" fill="#9a9a9a" opacity="0.5" filter="url(#blur2)"/>
<circle cx="479.7" cy="402.5" r="17.3" fill="#f2f2f2"/>
<circle cx="479.7" cy="402.9" r="15.2" fill="url(#orangeCap)"/>
<circle cx="461.9" cy="418.4" r="2" fill="#f06a30"/>
<line x1="655.33" y1="425.84" x2="651.30" y2="429.73" stroke="#4c4c4c" stroke-width="1.15"/>
<line x1="653.74" y1="424.07" x2="649.44" y2="427.67" stroke="#4c4c4c" stroke-width="1.15"/>
<line x1="652.28" y1="422.19" x2="647.74" y2="425.47" stroke="#4c4c4c" stroke-width="1.15"/>
<line x1="650.95" y1="420.21" x2="646.19" y2="423.17" stroke="#4c4c4c" stroke-width="1.15"/>
<line x1="649.77" y1="418.15" x2="644.81" y2="420.76" stroke="#4c4c4c" stroke-width="1.15"/>
<line x1="648.73" y1="416.00" x2="643.61" y2="418.25" stroke="#4c4c4c" stroke-width="1.15"/>
<line x1="647.85" y1="413.79" x2="642.58" y2="415.67" stroke="#4c4c4c" stroke-width="1.15"/>
<line x1="647.13" y1="411.52" x2="641.74" y2="413.03" stroke="#4c4c4c" stroke-width="1.15"/>
<line x1="646.58" y1="409.21" x2="641.09" y2="410.33" stroke="#4c4c4c" stroke-width="1.15"/>
<line x1="646.18" y1="406.86" x2="640.63" y2="407.59" stroke="#4c4c4c" stroke-width="1.15"/>
<line x1="645.96" y1="404.49" x2="640.37" y2="404.82" stroke="#4c4c4c" stroke-width="1.15"/>
<line x1="645.90" y1="402.11" x2="640.30" y2="402.04" stroke="#4c4c4c" stroke-width="1.15"/>
<line x1="646.01" y1="399.73" x2="640.43" y2="399.27" stroke="#4c4c4c" stroke-width="1.15"/>
<line x1="646.29" y1="397.37" x2="640.76" y2="396.51" stroke="#4c4c4c" stroke-width="1.15"/>
<line x1="646.74" y1="395.03" x2="641.28" y2="393.78" stroke="#4c4c4c" stroke-width="1.15"/>
<line x1="647.35" y1="392.73" x2="641.99" y2="391.10" stroke="#4c4c4c" stroke-width="1.15"/>
<line x1="648.13" y1="390.48" x2="642.90" y2="388.47" stroke="#4c4c4c" stroke-width="1.15"/>
<line x1="649.06" y1="388.28" x2="643.98" y2="385.91" stroke="#4c4c4c" stroke-width="1.15"/>
<line x1="650.14" y1="386.16" x2="645.25" y2="383.44" stroke="#4c4c4c" stroke-width="1.15"/>
<line x1="651.37" y1="384.13" x2="646.68" y2="381.06" stroke="#4c4c4c" stroke-width="1.15"/>
<line x1="652.74" y1="382.18" x2="648.28" y2="378.79" stroke="#4c4c4c" stroke-width="1.15"/>
<line x1="654.25" y1="380.34" x2="650.04" y2="376.64" stroke="#4c4c4c" stroke-width="1.15"/>
<line x1="655.88" y1="378.60" x2="651.94" y2="374.62" stroke="#4c4c4c" stroke-width="1.15"/>
<line x1="657.63" y1="376.99" x2="653.99" y2="372.74" stroke="#4c4c4c" stroke-width="1.15"/>
<line x1="659.49" y1="375.51" x2="656.16" y2="371.01" stroke="#4c4c4c" stroke-width="1.15"/>
<line x1="661.45" y1="374.16" x2="658.45" y2="369.43" stroke="#4c4c4c" stroke-width="1.15"/>
<line x1="663.51" y1="372.95" x2="660.84" y2="368.03" stroke="#4c4c4c" stroke-width="1.15"/>
<line x1="665.64" y1="371.89" x2="663.33" y2="366.79" stroke="#4c4c4c" stroke-width="1.15"/>
<line x1="667.84" y1="370.99" x2="665.90" y2="365.74" stroke="#4c4c4c" stroke-width="1.15"/>
<line x1="670.10" y1="370.24" x2="668.54" y2="364.86" stroke="#4c4c4c" stroke-width="1.15"/>
<line x1="672.41" y1="369.66" x2="671.23" y2="364.18" stroke="#4c4c4c" stroke-width="1.15"/>
<line x1="674.75" y1="369.24" x2="673.96" y2="363.69" stroke="#4c4c4c" stroke-width="1.15"/>
<line x1="677.12" y1="368.98" x2="676.72" y2="363.40" stroke="#4c4c4c" stroke-width="1.15"/>
<line x1="679.50" y1="368.90" x2="679.50" y2="363.30" stroke="#4c4c4c" stroke-width="1.15"/>
<line x1="681.88" y1="368.98" x2="682.28" y2="363.40" stroke="#4c4c4c" stroke-width="1.15"/>
<line x1="684.25" y1="369.24" x2="685.04" y2="363.69" stroke="#4c4c4c" stroke-width="1.15"/>
<line x1="686.59" y1="369.66" x2="687.77" y2="364.18" stroke="#4c4c4c" stroke-width="1.15"/>
<line x1="688.90" y1="370.24" x2="690.46" y2="364.86" stroke="#4c4c4c" stroke-width="1.15"/>
<line x1="691.16" y1="370.99" x2="693.10" y2="365.74" stroke="#4c4c4c" stroke-width="1.15"/>
<line x1="693.36" y1="371.89" x2="695.67" y2="366.79" stroke="#4c4c4c" stroke-width="1.15"/>
<line x1="695.49" y1="372.95" x2="698.16" y2="368.03" stroke="#4c4c4c" stroke-width="1.15"/>
<line x1="697.55" y1="374.16" x2="700.55" y2="369.43" stroke="#4c4c4c" stroke-width="1.15"/>
<line x1="699.51" y1="375.51" x2="702.84" y2="371.01" stroke="#4c4c4c" stroke-width="1.15"/>
<line x1="701.37" y1="376.99" x2="705.01" y2="372.74" stroke="#4c4c4c" stroke-width="1.15"/>
<line x1="703.12" y1="378.60" x2="707.06" y2="374.62" stroke="#4c4c4c" stroke-width="1.15"/>
<line x1="704.75" y1="380.34" x2="708.96" y2="376.64" stroke="#4c4c4c" stroke-width="1.15"/>
<line x1="706.26" y1="382.18" x2="710.72" y2="378.79" stroke="#4c4c4c" stroke-width="1.15"/>
<line x1="707.63" y1="384.13" x2="712.32" y2="381.06" stroke="#4c4c4c" stroke-width="1.15"/>
<line x1="708.86" y1="386.16" x2="713.75" y2="383.44" stroke="#4c4c4c" stroke-width="1.15"/>
<line x1="709.94" y1="388.28" x2="715.02" y2="385.91" stroke="#4c4c4c" stroke-width="1.15"/>
<line x1="710.87" y1="390.48" x2="716.10" y2="388.47" stroke="#4c4c4c" stroke-width="1.15"/>
<line x1="711.65" y1="392.73" x2="717.01" y2="391.10" stroke="#4c4c4c" stroke-width="1.15"/>
<line x1="712.26" y1="395.03" x2="717.72" y2="393.78" stroke="#4c4c4c" stroke-width="1.15"/>
<line x1="712.71" y1="397.37" x2="718.24" y2="396.51" stroke="#4c4c4c" stroke-width="1.15"/>
<line x1="712.99" y1="399.73" x2="718.57" y2="399.27" stroke="#4c4c4c" stroke-width="1.15"/>
<line x1="713.10" y1="402.11" x2="718.70" y2="402.04" stroke="#4c4c4c" stroke-width="1.15"/>
<line x1="713.04" y1="404.49" x2="718.63" y2="404.82" stroke="#4c4c4c" stroke-width="1.15"/>
<line x1="712.82" y1="406.86" x2="718.37" y2="407.59" stroke="#4c4c4c" stroke-width="1.15"/>
<line x1="712.42" y1="409.21" x2="717.91" y2="410.33" stroke="#4c4c4c" stroke-width="1.15"/>
<line x1="711.87" y1="411.52" x2="717.26" y2="413.03" stroke="#4c4c4c" stroke-width="1.15"/>
<line x1="711.15" y1="413.79" x2="716.42" y2="415.67" stroke="#4c4c4c" stroke-width="1.15"/>
<line x1="710.27" y1="416.00" x2="715.39" y2="418.25" stroke="#4c4c4c" stroke-width="1.15"/>
<line x1="709.23" y1="418.15" x2="714.19" y2="420.76" stroke="#4c4c4c" stroke-width="1.15"/>
<line x1="708.05" y1="420.21" x2="712.81" y2="423.17" stroke="#4c4c4c" stroke-width="1.15"/>
<line x1="706.72" y1="422.19" x2="711.26" y2="425.47" stroke="#4c4c4c" stroke-width="1.15"/>
<line x1="705.26" y1="424.07" x2="709.56" y2="427.67" stroke="#4c4c4c" stroke-width="1.15"/>
<line x1="703.67" y1="425.84" x2="707.70" y2="429.73" stroke="#4c4c4c" stroke-width="1.15"/>
<circle cx="679.5" cy="402.5" r="30" fill="url(#discLight)" stroke="#9a9a9a" stroke-width="1"/>
<circle cx="681.0" cy="405.0" r="18" fill="#9a9a9a" opacity="0.5" filter="url(#blur2)"/>
<circle cx="679.5" cy="402.5" r="17.3" fill="#f2f2f2"/>
<circle cx="679.5" cy="402.9" r="15.2" fill="url(#orangeCap)"/>
<circle cx="661.7" cy="418.4" r="2" fill="#f06a30"/>
<text x="446.8" y="346.8" font-size="14.5" fill="#565656" text-anchor="start" font-weight="normal" font-family='"Liberation Sans", sans-serif' textLength="68.1" lengthAdjust="spacingAndGlyphs" >KEYTRACK</text>
<text x="640.2" y="346.8" font-size="14.5" fill="#565656" text-anchor="start" font-weight="normal" font-family='"Liberation Sans", sans-serif' textLength="79.6" lengthAdjust="spacingAndGlyphs" >RESONANCE</text>
<text x="447.3" y="474.3" font-size="14.5" fill="#565656" text-anchor="start" font-weight="normal" font-family='"Liberation Sans", sans-serif' textLength="66.7" lengthAdjust="spacingAndGlyphs" >ENVELOPE</text>
<text x="637.5" y="475.4" font-size="14.5" fill="#565656" text-anchor="start" font-weight="normal" font-family='"Liberation Sans", sans-serif' textLength="85.3" lengthAdjust="spacingAndGlyphs" >MODULATION</text>
<text x="433.4" y="500.4" font-size="14" fill="#6e6e6e" text-anchor="start" font-weight="normal" font-family='"Liberation Sans", sans-serif' >1</text>
<text x="520.2" y="500.4" font-size="14" fill="#f6f6f6" text-anchor="start" font-weight="normal" font-family='"Liberation Sans", sans-serif' >2</text>
<rect x="448.2" y="481.2" width="61.2" height="29.6" rx="6" fill="#b9b9bb" stroke="#8e8e90" stroke-width="1"/>
<rect x="449.6" y="482.4" width="14" height="27.2" rx="5" fill="#e4d64a"/>
<rect x="460" y="511" width="46" height="3" rx="1.5" fill="#7a7a7a" opacity="0.6" filter="url(#blur1)"/>
<rect x="458.6" y="482" width="49.2" height="27.6" rx="5.5" fill="#d3d2d6" stroke="#bdbdc0" stroke-width="0.6"/>
<line x1="481.4" y1="486" x2="481.4" y2="506" stroke="#ee8a5c" stroke-width="1.6"/>
<line x1="485.6" y1="486" x2="485.6" y2="506" stroke="#ee8a5c" stroke-width="1.6"/>
<rect x="616.5" y="494.0" width="124.5" height="7.6" rx="3.8" fill="#e9efe6"/>
<rect x="616.5" y="493.59999999999997" width="124.5" height="6.8" rx="3.4" fill="#6e6c62"/>
<rect x="617.5" y="495.0" width="102.79999999999995" height="5" rx="2.5" fill="#c9892e"/>
<rect x="719.3" y="495.0" width="20.200000000000045" height="5" rx="2.5" fill="#050505"/>
<circle cx="720.0" cy="498.9" r="6" fill="#8a8a8a" opacity="0.4" filter="url(#blur1)"/>
<circle cx="719.3" cy="497.2" r="5.6" fill="#f4ecea"/>
<circle cx="719.3" cy="497.2" r="4.1" fill="#e8582a"/>
<rect x="791.7" y="139.6" width="98.5" height="23.5" rx="3.3" fill="url(#btn)" stroke="#8c8c8c" stroke-width="1"/>
<text x="840.95" y="155.95" font-size="13" fill="#525252" text-anchor="middle" font-weight="normal" font-family='"Liberation Sans", sans-serif' textLength="36.1" lengthAdjust="spacingAndGlyphs" >WEAR</text>
<rect x="791.7" y="173.5" width="98.5" height="23.30000000000001" rx="3.3" fill="url(#btn)" stroke="#8c8c8c" stroke-width="1"/>
<text x="840.95" y="189.75" font-size="13" fill="#525252" text-anchor="middle" font-weight="normal" font-family='"Liberation Sans", sans-serif' textLength="62.6" lengthAdjust="spacingAndGlyphs" >STABILITY</text>
<text x="784" y="262.5" font-size="18" fill="#5a5a5a" text-anchor="start" font-weight="normal" font-family='"Liberation Sans", sans-serif' textLength="19.6" lengthAdjust="spacingAndGlyphs" >FX</text>
<rect x="791.7" y="285.8" width="98.5" height="23.69999999999999" rx="3.3" fill="url(#btn)" stroke="#8c8c8c" stroke-width="1"/>
<text x="840.95" y="302.25" font-size="13" fill="#525252" text-anchor="middle" font-weight="normal" font-family='"Liberation Sans", sans-serif' textLength="58.6" lengthAdjust="spacingAndGlyphs" >CRACKLE</text>
<rect x="791.2" y="320.8" width="99.5" height="23.69999999999999" rx="3.3" fill="url(#btnOn)"/>
<text x="840.95" y="337.25" font-size="13" fill="#fde4d4" text-anchor="middle" font-weight="normal" font-family='"Liberation Sans", sans-serif' textLength="52" lengthAdjust="spacingAndGlyphs" >CHORUS</text>
<rect x="791.7" y="353.9" width="98.5" height="24.200000000000045" rx="3.3" fill="url(#btn)" stroke="#8c8c8c" stroke-width="1"/>
<text x="840.95" y="370.6" font-size="13" fill="#525252" text-anchor="middle" font-weight="normal" font-family='"Liberation Sans", sans-serif' textLength="44" lengthAdjust="spacingAndGlyphs" >RIPPLE</text>
<rect x="791.7" y="388.0" width="98.5" height="22.80000000000001" rx="3.3" fill="url(#btn)" stroke="#8c8c8c" stroke-width="1"/>
<text x="840.95" y="404.0" font-size="13" fill="#525252" text-anchor="middle" font-weight="normal" font-family='"Liberation Sans", sans-serif' textLength="71" lengthAdjust="spacingAndGlyphs" >COMPRESS</text>
<rect x="791.7" y="421.3" width="98.5" height="23.599999999999966" rx="3.3" fill="url(#btn)" stroke="#8c8c8c" stroke-width="1"/>
<text x="840.95" y="437.70000000000005" font-size="13" fill="#525252" text-anchor="middle" font-weight="normal" font-family='"Liberation Sans", sans-serif' textLength="33" lengthAdjust="spacingAndGlyphs" >HEAT</text>
<rect x="791.7" y="454.8" width="98.5" height="23.30000000000001" rx="3.3" fill="url(#btn)" stroke="#8c8c8c" stroke-width="1"/>
<text x="840.95" y="471.05000000000007" font-size="13" fill="#525252" text-anchor="middle" font-weight="normal" font-family='"Liberation Sans", sans-serif' textLength="35.5" lengthAdjust="spacingAndGlyphs" >ECHO</text>
<rect x="791.7" y="489.8" width="98.5" height="23.30000000000001" rx="3.3" fill="url(#btn)" stroke="#8c8c8c" stroke-width="1"/>
<text x="840.95" y="506.05000000000007" font-size="13" fill="#525252" text-anchor="middle" font-weight="normal" font-family='"Liberation Sans", sans-serif' textLength="40.5" lengthAdjust="spacingAndGlyphs" >SPACE</text>
<rect x="914.7" y="129.79999999999998" width="275.6" height="389.2" rx="7.6" fill="#e4e4e6" opacity="0.7"/>
<rect x="915.5" y="130.2" width="274.0" height="387.8" rx="7" fill="#141414"/>
<rect x="917.1" y="131.79999999999998" width="270.8" height="384.6" rx="5.8" fill="#4a4a4a"/>
<rect x="918.7" y="133.39999999999998" width="267.6" height="381.40000000000003" rx="4.6" fill="url(#padFill)"/>
<rect x="1051.7" y="136" width="1" height="218" fill="url(#vfade)"/>
<rect x="922" y="242.7" width="261" height="1" fill="url(#hfade)"/>
<circle cx="1090" cy="197.8" r="12.2" fill="none" stroke="#f59440" stroke-width="1.8"/>
<circle cx="1090" cy="197.8" r="6" fill="#f59440"/>
<rect x="969.7" y="353.8" width="184" height="1" fill="url(#hfade)" opacity="0.8"/>
<rect x="969.7" y="408.5" width="184" height="1" fill="url(#hfade)" opacity="0.8"/>
<text x="928.8" y="377.2" font-size="14.5" fill="#e8733a" text-anchor="start" font-weight="normal" font-family='"Liberation Sans", sans-serif' textLength="32.6" lengthAdjust="spacingAndGlyphs" >RATE</text>
<text x="929.7" y="397.3" font-size="14" fill="#dddddd" text-anchor="start" font-weight="normal" font-family='"Liberation Sans", sans-serif' textLength="15" lengthAdjust="spacingAndGlyphs" >66</text>
<text x="954.5" y="397.3" font-size="14" fill="#dddddd" text-anchor="start" font-weight="normal" font-family='"Liberation Sans", sans-serif' textLength="10" lengthAdjust="spacingAndGlyphs" >%</text>
<text x="1122.6" y="377.2" font-size="14.5" fill="#e8733a" text-anchor="start" font-weight="normal" font-family='"Liberation Sans", sans-serif' textLength="56.9" lengthAdjust="spacingAndGlyphs" >AMOUNT</text>
<text x="1145.7" y="397.3" font-size="14" fill="#dddddd" text-anchor="start" font-weight="normal" font-family='"Liberation Sans", sans-serif' textLength="15" lengthAdjust="spacingAndGlyphs" >74</text>
<text x="1169.5" y="397.3" font-size="14" fill="#dddddd" text-anchor="start" font-weight="normal" font-family='"Liberation Sans", sans-serif' textLength="10" lengthAdjust="spacingAndGlyphs" >%</text>
<rect x="1033.6" y="369.1" width="39.4" height="22.7" rx="11.35" fill="#f7963e" stroke="#2a1a10" stroke-width="0.8"/>
<path d="M1041.2,377.6 A4.4,4.4 0 1 0 1046.8,377.6" fill="none" stroke="#3a1e0a" stroke-width="1.5" stroke-linecap="round"/>
<line x1="1044" y1="375.6" x2="1044" y2="380.5" stroke="#3a1e0a" stroke-width="1.5" stroke-linecap="round"/>
<circle cx="1062.4" cy="380.6" r="7.6" fill="none" stroke="#1e120a" stroke-width="1.9"/>
<circle cx="1009.7" cy="418.7" r="1.15" fill="#1b4d5c"/>
<circle cx="1009.7" cy="427.6" r="1.15" fill="#1b4d5c"/>
<circle cx="1009.7" cy="436.4" r="1.15" fill="#1b4d5c"/>
<circle cx="1009.7" cy="445.3" r="1.15" fill="#1b4d5c"/>
<circle cx="1009.7" cy="454.1" r="1.15" fill="#1b4d5c"/>
<circle cx="1009.7" cy="463.0" r="1.15" fill="#1b4d5c"/>
<circle cx="1009.7" cy="471.9" r="1.15" fill="#1b4d5c"/>
<circle cx="1009.7" cy="480.7" r="1.15" fill="#1b4d5c"/>
<circle cx="1009.7" cy="489.6" r="1.15" fill="#1b4d5c"/>
<circle cx="1009.7" cy="498.4" r="1.15" fill="#1b4d5c"/>
<circle cx="1009.7" cy="507.3" r="1.15" fill="#1b4d5c"/>
<circle cx="1018.8" cy="418.7" r="1.15" fill="#1b4d5c"/>
<circle cx="1018.8" cy="427.6" r="1.15" fill="#1b4d5c"/>
<circle cx="1018.8" cy="436.4" r="1.15" fill="#1b4d5c"/>
<circle cx="1018.8" cy="445.3" r="1.15" fill="#1b4d5c"/>
<circle cx="1018.8" cy="454.1" r="1.15" fill="#1b4d5c"/>
<circle cx="1018.8" cy="463.0" r="1.15" fill="#1b4d5c"/>
<circle cx="1018.8" cy="471.9" r="1.15" fill="#1b4d5c"/>
<circle cx="1018.8" cy="480.7" r="1.15" fill="#1b4d5c"/>
<circle cx="1018.8" cy="489.6" r="1.15" fill="#1b4d5c"/>
<circle cx="1018.8" cy="498.4" r="1.15" fill="#1b4d5c"/>
<circle cx="1018.8" cy="507.3" r="1.15" fill="#1b4d5c"/>
<circle cx="1027.9" cy="418.7" r="1.15" fill="#1b4d5c"/>
<circle cx="1027.9" cy="427.6" r="1.15" fill="#1b4d5c"/>
<circle cx="1027.9" cy="436.4" r="1.15" fill="#1b4d5c"/>
<circle cx="1027.9" cy="445.3" r="1.15" fill="#1b4d5c"/>
<circle cx="1027.9" cy="454.1" r="1.15" fill="#1b4d5c"/>
<circle cx="1027.9" cy="463.0" r="1.15" fill="#1b4d5c"/>
<circle cx="1027.9" cy="471.9" r="1.15" fill="#1b4d5c"/>
<circle cx="1027.9" cy="480.7" r="1.15" fill="#1b4d5c"/>
<circle cx="1027.9" cy="489.6" r="1.15" fill="#1b4d5c"/>
<circle cx="1027.9" cy="498.4" r="1.15" fill="#1b4d5c"/>
<circle cx="1027.9" cy="507.3" r="1.15" fill="#1b4d5c"/>
<circle cx="1037.0" cy="418.7" r="1.15" fill="#1b4d5c"/>
<circle cx="1037.0" cy="427.6" r="1.15" fill="#1b4d5c"/>
<circle cx="1037.0" cy="436.4" r="1.15" fill="#1b4d5c"/>
<circle cx="1037.0" cy="445.3" r="1.15" fill="#1b4d5c"/>
<circle cx="1037.0" cy="454.1" r="1.15" fill="#1b4d5c"/>
<circle cx="1037.0" cy="463.0" r="1.15" fill="#1b4d5c"/>
<circle cx="1037.0" cy="471.9" r="1.15" fill="#1b4d5c"/>
<circle cx="1037.0" cy="480.7" r="1.15" fill="#1b4d5c"/>
<circle cx="1037.0" cy="489.6" r="1.15" fill="#1b4d5c"/>
<circle cx="1037.0" cy="498.4" r="1.15" fill="#1b4d5c"/>
<circle cx="1037.0" cy="507.3" r="1.15" fill="#1b4d5c"/>
<circle cx="1046.1" cy="418.7" r="1.15" fill="#1b4d5c"/>
<circle cx="1046.1" cy="427.6" r="1.15" fill="#1b4d5c"/>
<circle cx="1046.1" cy="436.4" r="1.15" fill="#1b4d5c"/>
<circle cx="1046.1" cy="445.3" r="1.15" fill="#1b4d5c"/>
<circle cx="1046.1" cy="454.1" r="1.15" fill="#1b4d5c"/>
<circle cx="1046.1" cy="463.0" r="1.15" fill="#1b4d5c"/>
<circle cx="1046.1" cy="471.9" r="1.15" fill="#1b4d5c"/>
<circle cx="1046.1" cy="480.7" r="1.15" fill="#1b4d5c"/>
<circle cx="1046.1" cy="489.6" r="1.15" fill="#1b4d5c"/>
<circle cx="1046.1" cy="498.4" r="1.15" fill="#1b4d5c"/>
<circle cx="1046.1" cy="507.3" r="1.15" fill="#1b4d5c"/>
<circle cx="1055.2" cy="418.7" r="1.15" fill="#1b4d5c"/>
<circle cx="1055.2" cy="427.6" r="1.15" fill="#1b4d5c"/>
<circle cx="1055.2" cy="436.4" r="1.15" fill="#1b4d5c"/>
<circle cx="1055.2" cy="445.3" r="1.15" fill="#1b4d5c"/>
<circle cx="1055.2" cy="454.1" r="1.15" fill="#1b4d5c"/>
<circle cx="1055.2" cy="463.0" r="1.15" fill="#1b4d5c"/>
<circle cx="1055.2" cy="471.9" r="1.15" fill="#1b4d5c"/>
<circle cx="1055.2" cy="480.7" r="1.15" fill="#1b4d5c"/>
<circle cx="1055.2" cy="489.6" r="1.15" fill="#1b4d5c"/>
<circle cx="1055.2" cy="498.4" r="1.15" fill="#1b4d5c"/>
<circle cx="1055.2" cy="507.3" r="1.15" fill="#1b4d5c"/>
<circle cx="1064.4" cy="418.7" r="1.15" fill="#1b4d5c"/>
<circle cx="1064.4" cy="427.6" r="1.15" fill="#1b4d5c"/>
<circle cx="1064.4" cy="436.4" r="1.15" fill="#1b4d5c"/>
<circle cx="1064.4" cy="445.3" r="1.15" fill="#1b4d5c"/>
<circle cx="1064.4" cy="454.1" r="1.15" fill="#1b4d5c"/>
<circle cx="1064.4" cy="463.0" r="1.15" fill="#1b4d5c"/>
<circle cx="1064.4" cy="471.9" r="1.15" fill="#1b4d5c"/>
<circle cx="1064.4" cy="480.7" r="1.15" fill="#1b4d5c"/>
<circle cx="1064.4" cy="489.6" r="1.15" fill="#1b4d5c"/>
<circle cx="1064.4" cy="498.4" r="1.15" fill="#1b4d5c"/>
<circle cx="1064.4" cy="507.3" r="1.15" fill="#1b4d5c"/>
<circle cx="1073.5" cy="418.7" r="1.15" fill="#1b4d5c"/>
<circle cx="1073.5" cy="427.6" r="1.15" fill="#1b4d5c"/>
<circle cx="1073.5" cy="436.4" r="1.15" fill="#1b4d5c"/>
<circle cx="1073.5" cy="445.3" r="1.15" fill="#1b4d5c"/>
<circle cx="1073.5" cy="454.1" r="1.15" fill="#1b4d5c"/>
<circle cx="1073.5" cy="463.0" r="1.15" fill="#1b4d5c"/>
<circle cx="1073.5" cy="471.9" r="1.15" fill="#1b4d5c"/>
<circle cx="1073.5" cy="480.7" r="1.15" fill="#1b4d5c"/>
<circle cx="1073.5" cy="489.6" r="1.15" fill="#1b4d5c"/>
<circle cx="1073.5" cy="498.4" r="1.15" fill="#1b4d5c"/>
<circle cx="1073.5" cy="507.3" r="1.15" fill="#1b4d5c"/>
<circle cx="1082.6" cy="418.7" r="1.15" fill="#1b4d5c"/>
<circle cx="1082.6" cy="427.6" r="1.15" fill="#1b4d5c"/>
<circle cx="1082.6" cy="436.4" r="1.15" fill="#1b4d5c"/>
<circle cx="1082.6" cy="445.3" r="1.15" fill="#1b4d5c"/>
<circle cx="1082.6" cy="454.1" r="1.15" fill="#1b4d5c"/>
<circle cx="1082.6" cy="463.0" r="1.15" fill="#1b4d5c"/>
<circle cx="1082.6" cy="471.9" r="1.15" fill="#1b4d5c"/>
<circle cx="1082.6" cy="480.7" r="1.15" fill="#1b4d5c"/>
<circle cx="1082.6" cy="489.6" r="1.15" fill="#1b4d5c"/>
<circle cx="1082.6" cy="498.4" r="1.15" fill="#1b4d5c"/>
<circle cx="1082.6" cy="507.3" r="1.15" fill="#1b4d5c"/>
<circle cx="1091.7" cy="418.7" r="1.15" fill="#1b4d5c"/>
<circle cx="1091.7" cy="427.6" r="1.15" fill="#1b4d5c"/>
<circle cx="1091.7" cy="436.4" r="1.15" fill="#1b4d5c"/>
<circle cx="1091.7" cy="445.3" r="1.15" fill="#1b4d5c"/>
<circle cx="1091.7" cy="454.1" r="1.15" fill="#1b4d5c"/>
<circle cx="1091.7" cy="463.0" r="1.15" fill="#1b4d5c"/>
<circle cx="1091.7" cy="471.9" r="1.15" fill="#1b4d5c"/>
<circle cx="1091.7" cy="480.7" r="1.15" fill="#1b4d5c"/>
<circle cx="1091.7" cy="489.6" r="1.15" fill="#1b4d5c"/>
<circle cx="1091.7" cy="498.4" r="1.15" fill="#1b4d5c"/>
<circle cx="1091.7" cy="507.3" r="1.15" fill="#1b4d5c"/>
<circle cx="1100.8" cy="418.7" r="1.15" fill="#1b4d5c"/>
<circle cx="1100.8" cy="427.6" r="1.15" fill="#1b4d5c"/>
<circle cx="1100.8" cy="436.4" r="1.15" fill="#1b4d5c"/>
<circle cx="1100.8" cy="445.3" r="1.15" fill="#1b4d5c"/>
<circle cx="1100.8" cy="454.1" r="1.15" fill="#1b4d5c"/>
<circle cx="1100.8" cy="463.0" r="1.15" fill="#1b4d5c"/>
<circle cx="1100.8" cy="471.9" r="1.15" fill="#1b4d5c"/>
<circle cx="1100.8" cy="480.7" r="1.15" fill="#1b4d5c"/>
<circle cx="1100.8" cy="489.6" r="1.15" fill="#1b4d5c"/>
<circle cx="1100.8" cy="498.4" r="1.15" fill="#1b4d5c"/>
<circle cx="1100.8" cy="507.3" r="1.15" fill="#1b4d5c"/>
<path d="M1028.90,452.90 L1038.01,466.85 Q1040.20,470.20 1042.70,467.08 L1052.10,455.32 Q1054.60,452.20 1057.03,455.37 L1065.97,467.03 Q1068.40,470.20 1070.57,466.84 L1079.60,452.90" fill="none" stroke="#f06a30" stroke-width="1.9" stroke-linecap="round"/>
<path d="M1034.80,452.90 L1044.00,466.86 Q1046.20,470.20 1048.59,466.99 L1057.21,455.41 Q1059.60,452.20 1062.08,455.34 L1071.32,467.06 Q1073.80,470.20 1075.92,466.81 L1084.60,452.90" fill="none" stroke="#f06a30" stroke-width="1.9" stroke-linecap="round"/>
<text x="1415.7" y="106.7" font-size="14.5" fill="#444444" text-anchor="start" font-weight="normal" font-family='"Liberation Sans", sans-serif' textLength="25.3" lengthAdjust="spacingAndGlyphs" >poly</text>
<circle cx="1464.5" cy="102.4" r="7.6" fill="none" stroke="#5c5c5c" stroke-width="1.5"/>
<circle cx="1464.5" cy="98.10000000000001" r="1.1" fill="#555"/>
<circle cx="1464.5" cy="102.4" r="1.1" fill="#555"/>
<circle cx="1464.5" cy="106.7" r="1.1" fill="#555"/>
<rect x="1227.9" y="130.6" width="246.89999999999995" height="188.79999999999998" rx="7.6" fill="#e4e4e6" opacity="0.7"/>
<rect x="1228.7" y="131" width="245.29999999999995" height="187.39999999999998" rx="7" fill="#141414"/>
<rect x="1230.3" y="132.6" width="242.09999999999997" height="184.2" rx="5.8" fill="#4a4a4a"/>
<rect x="1231.9" y="134.2" width="238.89999999999995" height="180.99999999999997" rx="4.6" fill="url(#padFill)"/>
<rect x="1350.6" y="136" width="1" height="177" fill="url(#vfade)"/>
<rect x="1234" y="209.2" width="235" height="1" fill="url(#hfade)"/>
<circle cx="1383.3" cy="181.6" r="12" fill="none" stroke="#c8be44" stroke-width="1.3"/>
<circle cx="1383.3" cy="181.6" r="5.4" fill="#f4ea5c"/>
<text x="1237" y="298.6" font-size="13" fill="#e2d85a" text-anchor="start" font-weight="normal" font-family='"Liberation Sans", sans-serif' textLength="39.7" lengthAdjust="spacingAndGlyphs" >WIDTH</text>
<text x="1240" y="313" font-size="12" fill="#dddddd" text-anchor="start" font-weight="normal" font-family='"Liberation Sans", sans-serif' textLength="10.5" lengthAdjust="spacingAndGlyphs" >31</text>
<text x="1266" y="313" font-size="12" fill="#dddddd" text-anchor="start" font-weight="normal" font-family='"Liberation Sans", sans-serif' textLength="8.6" lengthAdjust="spacingAndGlyphs" >%</text>
<text x="1433" y="298.6" font-size="13" fill="#e2d85a" text-anchor="start" font-weight="normal" font-family='"Liberation Sans", sans-serif' textLength="32" lengthAdjust="spacingAndGlyphs" >TONE</text>
<text x="1439" y="313" font-size="12" fill="#dddddd" text-anchor="start" font-weight="normal" font-family='"Liberation Sans", sans-serif' textLength="11" lengthAdjust="spacingAndGlyphs" >44</text>
<text x="1456.4" y="313" font-size="12" fill="#dddddd" text-anchor="start" font-weight="normal" font-family='"Liberation Sans", sans-serif' textLength="8.6" lengthAdjust="spacingAndGlyphs" >%</text>
<rect x="1228.2" y="331.3" width="245.89999999999995" height="188.70000000000002" rx="7.6" fill="#e4e4e6" opacity="0.7"/>
<rect x="1229" y="331.7" width="244.29999999999995" height="187.3" rx="7" fill="#141414"/>
<rect x="1230.6" y="333.3" width="241.09999999999997" height="184.10000000000002" rx="5.8" fill="#4a4a4a"/>
<rect x="1232.2" y="334.9" width="237.89999999999995" height="180.9" rx="4.6" fill="url(#padFill)"/>
<rect x="1350.6" y="337" width="1" height="177" fill="url(#vfade)"/>
<rect x="1234" y="411.3" width="235" height="1" fill="url(#hfade)"/>
<circle cx="1350.6" cy="411.8" r="12" fill="none" stroke="#c8be44" stroke-width="1.3"/>
<circle cx="1350.6" cy="411.8" r="5.4" fill="#f4ea5c"/>
<text x="1237" y="499.2" font-size="13" fill="#e2d85a" text-anchor="start" font-weight="normal" font-family='"Liberation Sans", sans-serif' textLength="29.3" lengthAdjust="spacingAndGlyphs" >TIME</text>
<text x="1241.5" y="513" font-size="12" fill="#dddddd" text-anchor="start" font-weight="normal" font-family='"Liberation Sans", sans-serif' >0</text>
<text x="1256" y="513" font-size="12" fill="#dddddd" text-anchor="start" font-weight="normal" font-family='"Liberation Sans", sans-serif' textLength="8.6" lengthAdjust="spacingAndGlyphs" >%</text>
<text x="1402.4" y="499.2" font-size="13" fill="#e2d85a" text-anchor="start" font-weight="normal" font-family='"Liberation Sans", sans-serif' textLength="62.4" lengthAdjust="spacingAndGlyphs" >INTENSITY</text>
<text x="1440.5" y="513" font-size="12" fill="#dddddd" text-anchor="start" font-weight="normal" font-family='"Liberation Sans", sans-serif' >0</text>
<text x="1456.4" y="513" font-size="12" fill="#dddddd" text-anchor="start" font-weight="normal" font-family='"Liberation Sans", sans-serif' textLength="8.6" lengthAdjust="spacingAndGlyphs" >%</text>
<text x="1236.2" y="562.4" font-size="14.5" fill="#555555" text-anchor="start" font-weight="normal" font-family='"Liberation Sans", sans-serif' textLength="53" lengthAdjust="spacingAndGlyphs" >VOLUME</text>
<circle cx="1351.6" cy="626.2" r="38" fill="#e2e2e4" opacity="0.5" filter="url(#blur2)"/>
<circle cx="1355" cy="631" r="35" fill="#6a6a6a" opacity="0.45" filter="url(#blur3)"/>
<circle cx="1351.6" cy="626.2" r="34.5" fill="url(#volRim)"/>
<circle cx="1351.6" cy="625.9" r="33.2" fill="url(#volKnob)"/>
<line x1="1352.8" y1="626.7" x2="1380" y2="623" stroke="#555" stroke-width="2.4" stroke-linecap="round"/>
<circle cx="1351.7" cy="577" r="3.6" fill="#f4f4f4" stroke="#333" stroke-width="0.8"/>
<path d="M1351.7,573.4 A3.6,3.6 0 0 0 1351.7,580.6 Z" fill="#333"/>
<circle cx="1316.2" cy="661" r="3.2" fill="none" stroke="#444" stroke-width="1"/>
<circle cx="1386.4" cy="660.6" r="3.4" fill="#333"/>
<text x="1234.5" y="738.3" font-size="15.5" fill="#555555" text-anchor="start" font-weight="normal" font-family='"Liberation Sans", sans-serif' textLength="78.1" lengthAdjust="spacingAndGlyphs" >SENSITIVITY</text>
<rect x="1323.4" y="729.1999999999999" width="147.0999999999999" height="7.6" rx="3.8" fill="#e9efe6"/>
<rect x="1323.4" y="728.8" width="147.0999999999999" height="6.8" rx="3.4" fill="#6e6c62"/>
<rect x="1324.4" y="730.1999999999999" width="89.59999999999991" height="5" rx="2.5" fill="#d29a3e"/>
<rect x="1413" y="730.1999999999999" width="56.0" height="5" rx="2.5" fill="#050505"/>
<circle cx="1413.7" cy="734.1" r="6" fill="#8a8a8a" opacity="0.4" filter="url(#blur1)"/>
<circle cx="1413" cy="732.4" r="5.6" fill="#f4ecea"/>
<circle cx="1413" cy="732.4" r="4.1" fill="#e8582a"/>
<rect x="8.5" y="549" width="563" height="206.6" rx="13.5" fill="#ececed" opacity="0.9"/>
<rect x="9" y="546" width="562" height="208" rx="13" fill="#1a1a1a"/>
<rect x="11" y="548" width="558" height="204" rx="11" fill="url(#darkpanel)" stroke="#4a4a4a" stroke-width="1"/>
<rect x="583.5" y="549" width="622" height="206.6" rx="13.5" fill="#ececed" opacity="0.9"/>
<rect x="584" y="546" width="621" height="208" rx="13" fill="#1a1a1a"/>
<rect x="586" y="548" width="617" height="204" rx="11" fill="url(#darkpanel)" stroke="#4a4a4a" stroke-width="1"/>
<path d="M33.0,562.35 L24.349999999999998,562.35 L24.349999999999998,573.95 L33.0,573.95 M24.349999999999998,568.1500000000001 L31.4,568.1500000000001 M36.449999999999996,575.1 L36.449999999999996,562.35 L43.949999999999996,573.95 L43.949999999999996,561.2 M48.15,561.2 L48.15,569.5400000000001 L51.9,573.95 L55.65,569.5400000000001 L55.65,561.2 M69.0,562.35 L60.35,562.35 L60.35,573.95 L69.0,573.95 M60.35,568.1500000000001 L67.4,568.1500000000001 M71.55000000000001,561.2 L71.55000000000001,573.95 L80.2,573.95 M86.55000000000001,562.35 L88.05,562.35 Q91.05,562.35 91.05,565.35 L91.05,570.95 Q91.05,573.95 88.05,573.95 L86.55000000000001,573.95 Q83.55000000000001,573.95 83.55000000000001,570.95 L83.55000000000001,565.35 Q83.55000000000001,562.35 86.55000000000001,562.35 Z M95.65,575.1 L95.65,562.35 L100.14999999999999,562.35 Q103.14999999999999,562.35 103.14999999999999,565.35 L103.14999999999999,565.1500000000001 Q103.14999999999999,568.1500000000001 100.14999999999999,568.1500000000001 L95.65,568.1500000000001 M116.3,562.35 L107.65,562.35 L107.65,573.95 L116.3,573.95 M107.65,568.1500000000001 L114.7,568.1500000000001 " fill="none" stroke="#f2f2f2" stroke-width="2.3" stroke-linejoin="miter" stroke-linecap="butt"/>
<rect x="238.8" y="560.1" width="88.0" height="20.5" fill="none" stroke="#a8a8a8" stroke-width="1.3"/>
<text x="245.3" y="574.35" font-size="11" fill="#dcdcdc" text-anchor="start" font-weight="normal" font-family='"Liberation Sans", sans-serif' textLength="14.7" lengthAdjust="spacingAndGlyphs" >Fm</text>
<path d="M312.5,568.5500000000001 L316.3,572.15 L320.1,568.5500000000001" fill="none" stroke="#bdbdbd" stroke-width="1.2"/>
<text x="341" y="573.6" font-size="13" fill="#d6d6d6" text-anchor="start" font-weight="normal" font-family='"Liberation Sans", sans-serif' textLength="14.8" lengthAdjust="spacingAndGlyphs" >35</text>
<text x="363" y="573.6" font-size="13" fill="#d6d6d6" text-anchor="start" font-weight="normal" font-family='"Liberation Sans", sans-serif' textLength="9.6" lengthAdjust="spacingAndGlyphs" >%</text>
<rect x="407.1" y="560.1" width="88.0" height="20.5" fill="none" stroke="#a8a8a8" stroke-width="1.3"/>
<text x="413.6" y="574.35" font-size="11" fill="#dcdcdc" text-anchor="start" font-weight="normal" font-family='"Liberation Sans", sans-serif' textLength="14.3" lengthAdjust="spacingAndGlyphs" >Off</text>
<path d="M480.8,568.5500000000001 L484.6,572.15 L488.40000000000003,568.5500000000001" fill="none" stroke="#bdbdbd" stroke-width="1.2"/>
<text x="514.9" y="573.6" font-size="13" fill="#d6d6d6" text-anchor="start" font-weight="normal" font-family='"Liberation Sans", sans-serif' textLength="7.7" lengthAdjust="spacingAndGlyphs" >0</text>
<text x="533.6" y="573.6" font-size="13" fill="#d6d6d6" text-anchor="start" font-weight="normal" font-family='"Liberation Sans", sans-serif' textLength="8.8" lengthAdjust="spacingAndGlyphs" >%</text>
<rect x="23.8" y="593.4" width="31.2" height="63.8" rx="6.4" fill="none" stroke="#c9623a" stroke-width="1.6"/>
<path d="M36.6,622.1 L39.6,620.1 L39.6,630.4 M36.4,630.4 L42.800000000000004,630.4 " fill="none" stroke="#f06a3a" stroke-width="2.0" stroke-linejoin="miter" stroke-linecap="butt"/>
<rect x="23" y="675" width="32.8" height="65.5" rx="6.4" fill="#d5c94c"/>
<path d="M36.4,706.0 Q36.4,703.5 39.339999999999996,703.5 L39.86,703.5 Q42.8,703.5 42.8,706.44 L42.8,706.3 Q42.8,708.3 39.86,708.8 L37.4,710.8 Q36.4,711.3 36.4,712.8 L36.4,713.1 L43.8,713.1 " fill="none" stroke="#1a1a1a" stroke-width="2.0" stroke-linejoin="miter" stroke-linecap="butt"/>
<path d="M84.80,603.40 C85.04,604.02 85.75,605.92 86.23,607.12 C86.71,608.32 87.18,609.47 87.66,610.58 C88.14,611.69 88.61,612.77 89.09,613.80 C89.57,614.84 90.04,615.84 90.52,616.80 C91.00,617.77 91.47,618.70 91.95,619.60 C92.43,620.50 92.90,621.36 93.38,622.20 C93.86,623.03 94.33,623.84 94.81,624.62 C95.29,625.40 95.76,626.15 96.24,626.87 C96.72,627.60 97.19,628.30 97.67,628.97 C98.15,629.65 98.62,630.30 99.10,630.93 C99.58,631.55 100.05,632.16 100.53,632.74 C101.01,633.33 101.48,633.89 101.96,634.44 C102.44,634.98 102.91,635.51 103.39,636.01 C103.87,636.52 104.34,637.01 104.82,637.48 C105.30,637.95 105.77,638.41 106.25,638.85 C106.73,639.29 107.20,639.71 107.68,640.12 C108.16,640.53 108.63,640.92 109.11,641.31 C109.59,641.69 110.06,642.05 110.54,642.41 C111.02,642.76 111.49,643.10 111.97,643.43 C112.45,643.77 112.92,644.08 113.40,644.39 C113.88,644.70 114.35,644.99 114.83,645.28 C115.31,645.57 115.78,645.84 116.26,646.11 C116.74,646.38 117.21,646.63 117.69,646.88 C118.17,647.13 118.64,647.37 119.12,647.60 C119.60,647.83 120.07,648.05 120.55,648.27 C121.03,648.48 121.50,648.69 121.98,648.89 C122.46,649.09 122.93,649.28 123.41,649.47 C123.89,649.65 124.36,649.83 124.84,650.01 C125.32,650.18 125.79,650.35 126.27,650.51 C126.75,650.67 127.22,650.83 127.70,650.98 C128.18,651.13 128.65,651.27 129.13,651.41 C129.61,651.55 130.08,651.69 130.56,651.82 C131.04,651.95 131.51,652.07 131.99,652.20 C132.47,652.32 132.94,652.43 133.42,652.55 C133.90,652.66 134.37,652.77 134.85,652.87 C135.33,652.98 135.80,653.08 136.28,653.18 C136.76,653.28 137.23,653.37 137.71,653.46 C138.19,653.55 138.66,653.64 139.14,653.73 C139.62,653.81 140.09,653.89 140.57,653.97 C141.05,654.05 141.76,654.16 142.00,654.20" fill="none" stroke="#e8e8ec" stroke-width="1.6"/>
<line x1="84.2" y1="603.4" x2="84.2" y2="694" stroke="#e8e8ec" stroke-width="1.8"/>
<line x1="142" y1="654.2" x2="389.3" y2="654.9" stroke="#e8e8ec" stroke-width="1.6"/>
<path d="M389.30,654.90 C389.40,656.25 389.58,660.32 389.90,663.00 C390.22,665.68 390.43,668.47 391.20,671.00 C391.97,673.53 393.05,676.12 394.50,678.20 C395.95,680.28 397.65,681.98 399.90,683.50 C402.15,685.02 404.68,686.25 408.00,687.30 C411.32,688.35 415.80,689.08 419.80,689.80 C423.80,690.52 427.87,691.08 432.00,691.60 C436.13,692.12 438.97,692.48 444.60,692.90 C450.23,693.32 462.27,693.90 465.80,694.10" fill="none" stroke="#e8e8ec" stroke-width="1.6"/>
<rect x="81.2" y="599.8" width="7.2" height="7.2" fill="none" stroke="#4aaee6" stroke-width="1.5"/>
<rect x="138.4" y="650.6" width="7.2" height="7.2" fill="none" stroke="#e8843a" stroke-width="1.5"/>
<rect x="385.7" y="651.3" width="7.2" height="7.2" fill="none" stroke="#dcd25a" stroke-width="1.5"/>
<rect x="462.2" y="690.5" width="7.2" height="7.2" fill="none" stroke="#3ab89a" stroke-width="1.5"/>
<text x="76.6" y="738.8" font-size="12" fill="#4aaee6" text-anchor="start" font-weight="normal" font-family='"Liberation Sans", sans-serif' textLength="32.60000000000001" lengthAdjust="spacingAndGlyphs" >Attack</text>
<text x="131.5" y="738.8" font-size="12" fill="#4aaee6" text-anchor="start" font-weight="normal" font-family='"Liberation Sans", sans-serif' >0</text>
<text x="150.8" y="738.8" font-size="12" fill="#4aaee6" text-anchor="start" font-weight="normal" font-family='"Liberation Sans", sans-serif' textLength="16.19999999999999" lengthAdjust="spacingAndGlyphs" >ms</text>
<text x="205" y="738.8" font-size="12" fill="#e07040" text-anchor="start" font-weight="normal" font-family='"Liberation Sans", sans-serif' textLength="31.69999999999999" lengthAdjust="spacingAndGlyphs" >Decay</text>
<text x="250.6" y="738.8" font-size="12" fill="#e07040" text-anchor="start" font-weight="normal" font-family='"Liberation Sans", sans-serif' textLength="19.400000000000006" lengthAdjust="spacingAndGlyphs" >252</text>
<text x="277" y="738.8" font-size="12" fill="#e07040" text-anchor="start" font-weight="normal" font-family='"Liberation Sans", sans-serif' textLength="15.699999999999989" lengthAdjust="spacingAndGlyphs" >ms</text>
<text x="331.4" y="738.8" font-size="12" fill="#dcd25a" text-anchor="start" font-weight="normal" font-family='"Liberation Sans", sans-serif' textLength="38.60000000000002" lengthAdjust="spacingAndGlyphs" >Sustain</text>
<text x="384" y="738.8" font-size="12" fill="#dcd25a" text-anchor="start" font-weight="normal" font-family='"Liberation Sans", sans-serif' textLength="12.399999999999977" lengthAdjust="spacingAndGlyphs" >42</text>
<text x="403" y="738.8" font-size="12" fill="#dcd25a" text-anchor="start" font-weight="normal" font-family='"Liberation Sans", sans-serif' textLength="9" lengthAdjust="spacingAndGlyphs" >%</text>
<text x="452.4" y="738.8" font-size="12" fill="#3ab89a" text-anchor="start" font-weight="normal" font-family='"Liberation Sans", sans-serif' textLength="40.60000000000002" lengthAdjust="spacingAndGlyphs" >Release</text>
<text x="510.4" y="738.8" font-size="12" fill="#3ab89a" text-anchor="start" font-weight="normal" font-family='"Liberation Sans", sans-serif' textLength="19.399999999999977" lengthAdjust="spacingAndGlyphs" >250</text>
<text x="537.5" y="738.8" font-size="12" fill="#3ab89a" text-anchor="start" font-weight="normal" font-family='"Liberation Sans", sans-serif' textLength="15.5" lengthAdjust="spacingAndGlyphs" >ms</text>
<path d="M599.8,581.4 L599.8,566 Q599.8,561.1 604.7,561.1 L663.5,561.1 Q668.4,561.1 668.4,566 L668.4,577 Q668.4,581.4 673,581.4 L1189,581.4" fill="none" stroke="#a9a9a9" stroke-width="1.4"/>
<path d="M612.95,566.75 L616.38,566.75 Q619.25,566.75 619.25,569.62 L619.25,573.0799999999999 Q619.25,575.9499999999999 616.38,575.9499999999999 L612.95,575.9499999999999 Z M622.45,576.9 L622.45,566.75 L625.88,566.75 Q628.75,566.75 628.75,569.62 L628.75,568.4799999999999 Q628.75,571.3499999999999 625.88,571.3499999999999 L622.45,571.3499999999999 M625.6,571.3499999999999 L628.75,576.9 M634.5,566.75 L634.5,575.9499999999999 M631.8,566.75 L637.2,566.75 M631.8,575.9499999999999 L637.2,575.9499999999999 M641.45,576.9 L641.45,566.75 L648.7,566.75 M641.45,571.3499999999999 L647.1,571.3499999999999 M648.9,566.75 L657.1,566.75 M653.0,566.75 L653.0,576.9 " fill="none" stroke="#f4f4f4" stroke-width="1.9" stroke-linejoin="miter" stroke-linecap="butt"/>
<path d="M686.1,576.9 L686.1,569.685 L688.25,566.6999999999999 L690.25,566.6999999999999 L692.4000000000001,569.685 L692.4000000000001,576.9 M686.1,572.3499999999999 L692.4000000000001,572.3499999999999 M695.52,576.9 L695.52,566.6999999999999 L698.985,566.6999999999999 Q701.82,566.6999999999999 701.82,569.535 L701.82,568.5149999999999 Q701.82,571.3499999999999 698.985,571.3499999999999 L695.52,571.3499999999999 M698.67,571.3499999999999 L701.82,576.9 M704.94,576.9 L704.94,566.6999999999999 L708.4050000000001,566.6999999999999 Q711.2400000000001,566.6999999999999 711.2400000000001,569.535 L711.2400000000001,568.5149999999999 Q711.2400000000001,571.3499999999999 708.4050000000001,571.3499999999999 L704.94,571.3499999999999 M721.5600000000001,566.6999999999999 L714.36,566.6999999999999 L714.36,576.0 L721.5600000000001,576.0 M714.36,571.3499999999999 L719.96,571.3499999999999 M730.08,569.535 Q730.08,566.6999999999999 727.245,566.6999999999999 L726.615,566.6999999999999 Q723.78,566.6999999999999 723.78,569.535 L723.78,573.165 Q723.78,576.0 726.615,576.0 L727.245,576.0 Q730.08,576.0 730.08,573.165 L730.08,571.3499999999999 L726.93,571.3499999999999 M739.5000000000001,569.535 Q739.5000000000001,566.6999999999999 736.6650000000001,566.6999999999999 L736.0350000000001,566.6999999999999 Q733.2,566.6999999999999 733.2,569.535 L733.2,573.165 Q733.2,576.0 736.0350000000001,576.0 L736.6650000000001,576.0 Q739.5000000000001,576.0 739.5000000000001,573.165 L739.5000000000001,571.3499999999999 L736.35,571.3499999999999 M745.77,566.6999999999999 L745.77,576.0 M743.0699999999999,566.6999999999999 L748.47,566.6999999999999 M743.0699999999999,576.0 L748.47,576.0 M752.0400000000001,576.9 L752.0400000000001,569.685 L754.19,566.6999999999999 L756.19,566.6999999999999 L758.3400000000001,569.685 L758.3400000000001,576.9 M752.0400000000001,572.3499999999999 L758.3400000000001,572.3499999999999 M760.5600000000001,566.6999999999999 L768.6600000000001,566.6999999999999 M764.61,566.6999999999999 L764.61,576.9 M773.715,566.6999999999999 L774.345,566.6999999999999 Q777.1800000000001,566.6999999999999 777.1800000000001,569.535 L777.1800000000001,573.165 Q777.1800000000001,576.0 774.345,576.0 L773.715,576.0 Q770.88,576.0 770.88,573.165 L770.88,569.535 Q770.88,566.6999999999999 773.715,566.6999999999999 Z M780.3000000000001,576.9 L780.3000000000001,566.6999999999999 L783.7650000000001,566.6999999999999 Q786.6000000000001,566.6999999999999 786.6000000000001,569.535 L786.6000000000001,568.5149999999999 Q786.6000000000001,571.3499999999999 783.7650000000001,571.3499999999999 L780.3000000000001,571.3499999999999 M783.45,571.3499999999999 L786.6000000000001,576.9 " fill="none" stroke="#8a8a8a" stroke-width="1.8" stroke-linejoin="miter" stroke-linecap="butt"/>
<rect x="597.6" y="587.8" width="126.2" height="126.2" fill="#222222" stroke="#343434" stroke-width="1"/>
<path d="M602.30,636.20 C603.42,635.63 606.30,634.22 609.00,632.80 C611.70,631.38 615.33,629.40 618.50,627.70 C621.67,626.00 624.85,623.87 628.00,622.60 C631.15,621.33 634.57,620.20 637.40,620.10 C640.23,620.00 642.47,620.58 645.00,622.00 C647.53,623.42 650.07,625.92 652.60,628.60 C655.13,631.28 657.67,634.62 660.20,638.10 C662.73,641.58 665.27,645.85 667.80,649.50 C670.33,653.15 672.55,656.83 675.40,660.00 C678.25,663.17 681.42,666.30 684.90,668.50 C688.38,670.70 692.52,672.73 696.30,673.20 C700.08,673.67 703.65,672.47 707.60,671.30 C711.55,670.13 717.93,667.05 720.00,666.20" fill="none" stroke="#d0822c" stroke-width="2"/>
<circle cx="617.2" cy="729.2" r="5.4" fill="#8a8a8a"/><path d="M610.3,734.8 L626.2,734.8 L626.2,728 Q626.2,724.6 624.6,722.6 L622.6,722.6 L622.6,731 L612,732 Z" fill="#8a8a8a"/><circle cx="617.4" cy="729.4" r="2.2" fill="none" stroke="#7a7a7a" stroke-width="0.8"/>
<circle cx="645.8" cy="721.3" r="1.7" fill="#8a8a8a"/><path d="M644,724 L647.5,724 L648.5,729 L647,729 L648.5,736.5 L646.8,736.5 L645.6,731 L644.2,736.5 L642.5,736.5 L643.8,729 L642,729 Z" fill="#8a8a8a"/><line x1="650" y1="725" x2="650.5" y2="736.8" stroke="#8a8a8a" stroke-width="0.9"/>
<path d="M667.5,734.8 L673.6,726 L680,734.8 Z" fill="#f06a30"/><path d="M664.4,734.8 L668.6,729 L669.8,730.2 L666.2,734.8 Z" fill="#f06a30"/><path d="M673.8,726.5 L673.8,721.6 L679.2,722.2 L678.6,725 L673.8,725.2" fill="#f06a30"/><path d="M671,731.5 L673.6,729.6 L676.4,731.5" fill="none" stroke="#c04a20" stroke-width="0.8"/>
<rect x="691.5" y="722.6" width="16.1" height="10" rx="2" fill="#8a8a8a"/><rect x="693.5" y="726.2" width="12" height="2.4" fill="#222"/><rect x="692.5" y="732.4" width="3" height="1.8" fill="#8a8a8a"/><rect x="703.5" y="732.4" width="3" height="1.8" fill="#8a8a8a"/>
<path d="M766.06,676.93 A33.2,33.2 0 1 1 808.74,676.93" fill="none" stroke="#5c5c5c" stroke-width="1.6"/>
<path d="M786.82,618.31 A33.2,33.2 0 0 1 795.99,619.43" fill="none" stroke="#f06a30" stroke-width="3.2"/>
<circle cx="787.4" cy="651.5" r="27.8" fill="none" stroke="#bdbdbd" stroke-width="1.5"/>
<circle cx="787.4" cy="611.3" r="2.3" fill="#f4a060"/>
<line x1="788.76" y1="648.83" x2="797.16" y2="632.34" stroke="#d08a40" stroke-width="1.6"/>
<path d="M881.26,676.93 A33.2,33.2 0 1 1 923.94,676.93" fill="none" stroke="#5c5c5c" stroke-width="1.6"/>
<path d="M902.02,618.31 A33.2,33.2 0 0 1 909.50,619.03" fill="none" stroke="#f06a30" stroke-width="3.2"/>
<circle cx="902.6" cy="651.5" r="27.8" fill="none" stroke="#bdbdbd" stroke-width="1.5"/>
<circle cx="902.6" cy="611.3" r="2.3" fill="#f4a060"/>
<line x1="903.53" y1="648.65" x2="909.24" y2="631.05" stroke="#d08a40" stroke-width="1.6"/>
<path d="M997.86,676.93 A33.2,33.2 0 1 1 1040.54,676.93" fill="none" stroke="#5c5c5c" stroke-width="1.6"/>
<path d="M1019.20,618.30 A33.2,33.2 0 0 1 1049.98,639.06" fill="none" stroke="#f06a30" stroke-width="3.2"/>
<circle cx="1019.2" cy="651.5" r="27.8" fill="none" stroke="#bdbdbd" stroke-width="1.5"/>
<circle cx="1019.2" cy="611.3" r="2.3" fill="#f4a060"/>
<line x1="1022.11" y1="650.77" x2="1040.06" y2="646.30" stroke="#d08a40" stroke-width="1.6"/>
<path d="M1114.26,676.93 A33.2,33.2 0 1 1 1156.94,676.93" fill="none" stroke="#5c5c5c" stroke-width="1.6"/>
<path d="M1128.70,619.03 A33.2,33.2 0 0 1 1136.18,618.31" fill="none" stroke="#f06a30" stroke-width="3.2"/>
<circle cx="1135.6" cy="651.5" r="27.8" fill="none" stroke="#bdbdbd" stroke-width="1.5"/>
<circle cx="1135.6" cy="611.3" r="2.3" fill="#f4a060"/>
<line x1="1134.82" y1="648.60" x2="1130.04" y2="630.73" stroke="#d08a40" stroke-width="1.6"/>
<rect x="731.4" y="718.3" width="109.10000000000002" height="20.5" fill="none" stroke="#a8a8a8" stroke-width="1.3"/>
<text x="737.9" y="732.55" font-size="11" fill="#dcdcdc" text-anchor="start" font-weight="normal" font-family='"Liberation Sans", sans-serif' textLength="28" lengthAdjust="spacingAndGlyphs" >Cutoff</text>
<path d="M826.2,726.75 L830.0,730.3499999999999 L833.8,726.75" fill="none" stroke="#bdbdbd" stroke-width="1.2"/>
<rect x="848.2" y="718.3" width="109.10000000000002" height="20.5" fill="none" stroke="#a8a8a8" stroke-width="1.3"/>
<text x="854.7" y="732.55" font-size="11" fill="#dcdcdc" text-anchor="start" font-weight="normal" font-family='"Liberation Sans", sans-serif' textLength="27" lengthAdjust="spacingAndGlyphs" >Width</text>
<path d="M943.0000000000001,726.75 L946.8000000000001,730.3499999999999 L950.6,726.75" fill="none" stroke="#bdbdbd" stroke-width="1.2"/>
<rect x="964.8" y="718.3" width="109.09999999999991" height="20.5" fill="none" stroke="#a8a8a8" stroke-width="1.3"/>
<text x="971.3" y="732.55" font-size="11" fill="#dcdcdc" text-anchor="start" font-weight="normal" font-family='"Liberation Sans", sans-serif' textLength="22" lengthAdjust="spacingAndGlyphs" >Tone</text>
<path d="M1059.6,726.75 L1063.3999999999999,730.3499999999999 L1067.1999999999998,726.75" fill="none" stroke="#bdbdbd" stroke-width="1.2"/>
<rect x="1081.3" y="718.3" width="109.09999999999991" height="20.5" fill="none" stroke="#a8a8a8" stroke-width="1.3"/>
<text x="1087.8" y="732.55" font-size="11" fill="#dcdcdc" text-anchor="start" font-weight="normal" font-family='"Liberation Sans", sans-serif' textLength="22.5" lengthAdjust="spacingAndGlyphs" >Time</text>
<path d="M1176.1,726.75 L1179.8999999999999,730.3499999999999 L1183.6999999999998,726.75" fill="none" stroke="#bdbdbd" stroke-width="1.2"/>
<circle cx="30.3" cy="775.7" r="3" fill="#d0d0d0" opacity="0.5"/><circle cx="30.3" cy="775.1" r="2.55" fill="#3e3e3e"/>
<circle cx="43.1" cy="775.7" r="3" fill="#d0d0d0" opacity="0.5"/><circle cx="43.1" cy="775.1" r="2.55" fill="#3e3e3e"/>
<circle cx="55.9" cy="775.7" r="3" fill="#d0d0d0" opacity="0.5"/><circle cx="55.9" cy="775.1" r="2.55" fill="#3e3e3e"/>
<circle cx="68.7" cy="775.7" r="3" fill="#d0d0d0" opacity="0.5"/><circle cx="68.7" cy="775.1" r="2.55" fill="#3e3e3e"/>
<circle cx="81.5" cy="775.7" r="3" fill="#d0d0d0" opacity="0.5"/><circle cx="81.5" cy="775.1" r="2.55" fill="#3e3e3e"/>
<circle cx="94.3" cy="775.7" r="3" fill="#d0d0d0" opacity="0.5"/><circle cx="94.3" cy="775.1" r="2.55" fill="#3e3e3e"/>
<circle cx="107.1" cy="775.7" r="3" fill="#d0d0d0" opacity="0.5"/><circle cx="107.1" cy="775.1" r="2.55" fill="#3e3e3e"/>
<circle cx="119.9" cy="775.7" r="3" fill="#d0d0d0" opacity="0.5"/><circle cx="119.9" cy="775.1" r="2.55" fill="#3e3e3e"/>
<circle cx="132.7" cy="775.7" r="3" fill="#d0d0d0" opacity="0.5"/><circle cx="132.7" cy="775.1" r="2.55" fill="#3e3e3e"/>
<circle cx="145.5" cy="775.7" r="3" fill="#d0d0d0" opacity="0.5"/><circle cx="145.5" cy="775.1" r="2.55" fill="#3e3e3e"/>
<circle cx="158.3" cy="775.7" r="3" fill="#d0d0d0" opacity="0.5"/><circle cx="158.3" cy="775.1" r="2.55" fill="#3e3e3e"/>
<circle cx="171.1" cy="775.7" r="3" fill="#d0d0d0" opacity="0.5"/><circle cx="171.1" cy="775.1" r="2.55" fill="#3e3e3e"/>
<circle cx="183.9" cy="775.7" r="3" fill="#d0d0d0" opacity="0.5"/><circle cx="183.9" cy="775.1" r="2.55" fill="#3e3e3e"/>
<circle cx="196.7" cy="775.7" r="3" fill="#d0d0d0" opacity="0.5"/><circle cx="196.7" cy="775.1" r="2.55" fill="#3e3e3e"/>
<circle cx="209.5" cy="775.7" r="3" fill="#d0d0d0" opacity="0.5"/><circle cx="209.5" cy="775.1" r="2.55" fill="#3e3e3e"/>
<circle cx="222.3" cy="775.7" r="3" fill="#d0d0d0" opacity="0.5"/><circle cx="222.3" cy="775.1" r="2.55" fill="#3e3e3e"/>
<circle cx="235.1" cy="775.7" r="3" fill="#d0d0d0" opacity="0.5"/><circle cx="235.1" cy="775.1" r="2.55" fill="#3e3e3e"/>
<circle cx="247.9" cy="775.7" r="3" fill="#d0d0d0" opacity="0.5"/><circle cx="247.9" cy="775.1" r="2.55" fill="#3e3e3e"/>
<circle cx="260.7" cy="775.7" r="3" fill="#d0d0d0" opacity="0.5"/><circle cx="260.7" cy="775.1" r="2.55" fill="#3e3e3e"/>
<circle cx="273.5" cy="775.7" r="3" fill="#d0d0d0" opacity="0.5"/><circle cx="273.5" cy="775.1" r="2.55" fill="#3e3e3e"/>
<circle cx="286.3" cy="775.7" r="3" fill="#d0d0d0" opacity="0.5"/><circle cx="286.3" cy="775.1" r="2.55" fill="#3e3e3e"/>
<circle cx="299.1" cy="775.7" r="3" fill="#d0d0d0" opacity="0.5"/><circle cx="299.1" cy="775.1" r="2.55" fill="#3e3e3e"/>
<circle cx="311.9" cy="775.7" r="3" fill="#d0d0d0" opacity="0.5"/><circle cx="311.9" cy="775.1" r="2.55" fill="#3e3e3e"/>
<circle cx="324.7" cy="775.7" r="3" fill="#d0d0d0" opacity="0.5"/><circle cx="324.7" cy="775.1" r="2.55" fill="#3e3e3e"/>
<circle cx="337.5" cy="775.7" r="3" fill="#d0d0d0" opacity="0.5"/><circle cx="337.5" cy="775.1" r="2.55" fill="#3e3e3e"/>
<circle cx="350.3" cy="775.7" r="3" fill="#d0d0d0" opacity="0.5"/><circle cx="350.3" cy="775.1" r="2.55" fill="#3e3e3e"/>
<circle cx="363.1" cy="775.7" r="3" fill="#d0d0d0" opacity="0.5"/><circle cx="363.1" cy="775.1" r="2.55" fill="#3e3e3e"/>
<circle cx="375.9" cy="775.7" r="3" fill="#d0d0d0" opacity="0.5"/><circle cx="375.9" cy="775.1" r="2.55" fill="#3e3e3e"/>
<circle cx="388.7" cy="775.7" r="3" fill="#d0d0d0" opacity="0.5"/><circle cx="388.7" cy="775.1" r="2.55" fill="#3e3e3e"/>
<circle cx="401.5" cy="775.7" r="3" fill="#d0d0d0" opacity="0.5"/><circle cx="401.5" cy="775.1" r="2.55" fill="#3e3e3e"/>
<circle cx="414.3" cy="775.7" r="3" fill="#d0d0d0" opacity="0.5"/><circle cx="414.3" cy="775.1" r="2.55" fill="#3e3e3e"/>
<circle cx="427.1" cy="775.7" r="3" fill="#d0d0d0" opacity="0.5"/><circle cx="427.1" cy="775.1" r="2.55" fill="#3e3e3e"/>
<circle cx="439.9" cy="775.7" r="3" fill="#d0d0d0" opacity="0.5"/><circle cx="439.9" cy="775.1" r="2.55" fill="#3e3e3e"/>
<circle cx="452.7" cy="775.7" r="3" fill="#d0d0d0" opacity="0.5"/><circle cx="452.7" cy="775.1" r="2.55" fill="#3e3e3e"/>
<circle cx="465.5" cy="775.7" r="3" fill="#d0d0d0" opacity="0.5"/><circle cx="465.5" cy="775.1" r="2.55" fill="#3e3e3e"/>
<circle cx="478.3" cy="775.7" r="3" fill="#d0d0d0" opacity="0.5"/><circle cx="478.3" cy="775.1" r="2.55" fill="#3e3e3e"/>
<circle cx="491.1" cy="775.7" r="3" fill="#d0d0d0" opacity="0.5"/><circle cx="491.1" cy="775.1" r="2.55" fill="#3e3e3e"/>
<circle cx="503.9" cy="775.7" r="3" fill="#d0d0d0" opacity="0.5"/><circle cx="503.9" cy="775.1" r="2.55" fill="#3e3e3e"/>
<circle cx="516.7" cy="775.7" r="3" fill="#d0d0d0" opacity="0.5"/><circle cx="516.7" cy="775.1" r="2.55" fill="#3e3e3e"/>
<circle cx="529.5" cy="775.7" r="3" fill="#d0d0d0" opacity="0.5"/><circle cx="529.5" cy="775.1" r="2.55" fill="#3e3e3e"/>
<circle cx="542.3" cy="775.7" r="3" fill="#d0d0d0" opacity="0.5"/><circle cx="542.3" cy="775.1" r="2.55" fill="#3e3e3e"/>
<circle cx="555.1" cy="775.7" r="3" fill="#d0d0d0" opacity="0.5"/><circle cx="555.1" cy="775.1" r="2.55" fill="#3e3e3e"/>
<circle cx="567.9" cy="775.7" r="3" fill="#d0d0d0" opacity="0.5"/><circle cx="567.9" cy="775.1" r="2.55" fill="#3e3e3e"/>
<circle cx="580.7" cy="775.7" r="3" fill="#d0d0d0" opacity="0.5"/><circle cx="580.7" cy="775.1" r="2.55" fill="#3e3e3e"/>
<circle cx="593.5" cy="775.7" r="3" fill="#d0d0d0" opacity="0.5"/><circle cx="593.5" cy="775.1" r="2.55" fill="#3e3e3e"/>
<circle cx="606.3" cy="775.7" r="3" fill="#d0d0d0" opacity="0.5"/><circle cx="606.3" cy="775.1" r="2.55" fill="#3e3e3e"/>
<circle cx="619.1" cy="775.7" r="3" fill="#d0d0d0" opacity="0.5"/><circle cx="619.1" cy="775.1" r="2.55" fill="#3e3e3e"/>
<circle cx="631.9" cy="775.7" r="3" fill="#d0d0d0" opacity="0.5"/><circle cx="631.9" cy="775.1" r="2.55" fill="#3e3e3e"/>
<circle cx="644.7" cy="775.7" r="3" fill="#d0d0d0" opacity="0.5"/><circle cx="644.7" cy="775.1" r="2.55" fill="#3e3e3e"/>
<circle cx="657.5" cy="775.7" r="3" fill="#d0d0d0" opacity="0.5"/><circle cx="657.5" cy="775.1" r="2.55" fill="#3e3e3e"/>
<circle cx="670.3" cy="775.7" r="3" fill="#d0d0d0" opacity="0.5"/><circle cx="670.3" cy="775.1" r="2.55" fill="#3e3e3e"/>
<circle cx="683.1" cy="775.7" r="3" fill="#d0d0d0" opacity="0.5"/><circle cx="683.1" cy="775.1" r="2.55" fill="#3e3e3e"/>
<circle cx="695.9" cy="775.7" r="3" fill="#d0d0d0" opacity="0.5"/><circle cx="695.9" cy="775.1" r="2.55" fill="#3e3e3e"/>
<circle cx="708.7" cy="775.7" r="3" fill="#d0d0d0" opacity="0.5"/><circle cx="708.7" cy="775.1" r="2.55" fill="#3e3e3e"/>
<circle cx="721.5" cy="775.7" r="3" fill="#d0d0d0" opacity="0.5"/><circle cx="721.5" cy="775.1" r="2.55" fill="#3e3e3e"/>
<circle cx="734.3" cy="775.7" r="3" fill="#d0d0d0" opacity="0.5"/><circle cx="734.3" cy="775.1" r="2.55" fill="#3e3e3e"/>
<circle cx="747.1" cy="775.7" r="3" fill="#d0d0d0" opacity="0.5"/><circle cx="747.1" cy="775.1" r="2.55" fill="#3e3e3e"/>
<circle cx="759.9" cy="775.7" r="3" fill="#d0d0d0" opacity="0.5"/><circle cx="759.9" cy="775.1" r="2.55" fill="#3e3e3e"/>
<circle cx="772.7" cy="775.7" r="3" fill="#d0d0d0" opacity="0.5"/><circle cx="772.7" cy="775.1" r="2.55" fill="#3e3e3e"/>
<circle cx="785.5" cy="775.7" r="3" fill="#d0d0d0" opacity="0.5"/><circle cx="785.5" cy="775.1" r="2.55" fill="#3e3e3e"/>
<circle cx="798.3" cy="775.7" r="3" fill="#d0d0d0" opacity="0.5"/><circle cx="798.3" cy="775.1" r="2.55" fill="#3e3e3e"/>
<circle cx="811.1" cy="775.7" r="3" fill="#d0d0d0" opacity="0.5"/><circle cx="811.1" cy="775.1" r="2.55" fill="#3e3e3e"/>
<circle cx="823.9" cy="775.7" r="3" fill="#d0d0d0" opacity="0.5"/><circle cx="823.9" cy="775.1" r="2.55" fill="#3e3e3e"/>
<circle cx="836.7" cy="775.7" r="3" fill="#d0d0d0" opacity="0.5"/><circle cx="836.7" cy="775.1" r="2.55" fill="#3e3e3e"/>
<circle cx="849.5" cy="775.7" r="3" fill="#d0d0d0" opacity="0.5"/><circle cx="849.5" cy="775.1" r="2.55" fill="#3e3e3e"/>
<circle cx="862.3" cy="775.7" r="3" fill="#d0d0d0" opacity="0.5"/><circle cx="862.3" cy="775.1" r="2.55" fill="#3e3e3e"/>
<circle cx="875.1" cy="775.7" r="3" fill="#d0d0d0" opacity="0.5"/><circle cx="875.1" cy="775.1" r="2.55" fill="#3e3e3e"/>
<circle cx="887.9" cy="775.7" r="3" fill="#d0d0d0" opacity="0.5"/><circle cx="887.9" cy="775.1" r="2.55" fill="#3e3e3e"/>
<circle cx="900.7" cy="775.7" r="3" fill="#d0d0d0" opacity="0.5"/><circle cx="900.7" cy="775.1" r="2.55" fill="#3e3e3e"/>
<circle cx="913.5" cy="775.7" r="3" fill="#d0d0d0" opacity="0.5"/><circle cx="913.5" cy="775.1" r="2.55" fill="#3e3e3e"/>
<circle cx="926.3" cy="775.7" r="3" fill="#d0d0d0" opacity="0.5"/><circle cx="926.3" cy="775.1" r="2.55" fill="#3e3e3e"/>
<circle cx="939.1" cy="775.7" r="3" fill="#d0d0d0" opacity="0.5"/><circle cx="939.1" cy="775.1" r="2.55" fill="#3e3e3e"/>
<circle cx="951.9" cy="775.7" r="3" fill="#d0d0d0" opacity="0.5"/><circle cx="951.9" cy="775.1" r="2.55" fill="#3e3e3e"/>
<circle cx="964.7" cy="775.7" r="3" fill="#d0d0d0" opacity="0.5"/><circle cx="964.7" cy="775.1" r="2.55" fill="#3e3e3e"/>
<circle cx="977.5" cy="775.7" r="3" fill="#d0d0d0" opacity="0.5"/><circle cx="977.5" cy="775.1" r="2.55" fill="#3e3e3e"/>
<circle cx="990.3" cy="775.7" r="3" fill="#d0d0d0" opacity="0.5"/><circle cx="990.3" cy="775.1" r="2.55" fill="#3e3e3e"/>
<circle cx="1003.1" cy="775.7" r="3" fill="#d0d0d0" opacity="0.5"/><circle cx="1003.1" cy="775.1" r="2.55" fill="#3e3e3e"/>
<circle cx="1015.9" cy="775.7" r="3" fill="#d0d0d0" opacity="0.5"/><circle cx="1015.9" cy="775.1" r="2.55" fill="#3e3e3e"/>
<circle cx="1028.7" cy="775.7" r="3" fill="#d0d0d0" opacity="0.5"/><circle cx="1028.7" cy="775.1" r="2.55" fill="#3e3e3e"/>
<circle cx="1041.5" cy="775.7" r="3" fill="#d0d0d0" opacity="0.5"/><circle cx="1041.5" cy="775.1" r="2.55" fill="#3e3e3e"/>
<circle cx="1054.3" cy="775.7" r="3" fill="#d0d0d0" opacity="0.5"/><circle cx="1054.3" cy="775.1" r="2.55" fill="#3e3e3e"/>
<circle cx="1067.1" cy="775.7" r="3" fill="#d0d0d0" opacity="0.5"/><circle cx="1067.1" cy="775.1" r="2.55" fill="#3e3e3e"/>
<circle cx="1079.9" cy="775.7" r="3" fill="#d0d0d0" opacity="0.5"/><circle cx="1079.9" cy="775.1" r="2.55" fill="#3e3e3e"/>
<circle cx="1092.7" cy="775.7" r="3" fill="#d0d0d0" opacity="0.5"/><circle cx="1092.7" cy="775.1" r="2.55" fill="#3e3e3e"/>
<circle cx="1105.5" cy="775.7" r="3" fill="#d0d0d0" opacity="0.5"/><circle cx="1105.5" cy="775.1" r="2.55" fill="#3e3e3e"/>
<circle cx="1118.3" cy="775.7" r="3" fill="#d0d0d0" opacity="0.5"/><circle cx="1118.3" cy="775.1" r="2.55" fill="#3e3e3e"/>
<circle cx="1131.1" cy="775.7" r="3" fill="#d0d0d0" opacity="0.5"/><circle cx="1131.1" cy="775.1" r="2.55" fill="#3e3e3e"/>
<circle cx="1143.9" cy="775.7" r="3" fill="#d0d0d0" opacity="0.5"/><circle cx="1143.9" cy="775.1" r="2.55" fill="#3e3e3e"/>
<circle cx="1156.7" cy="775.7" r="3" fill="#d0d0d0" opacity="0.5"/><circle cx="1156.7" cy="775.1" r="2.55" fill="#3e3e3e"/>
<circle cx="1169.5" cy="775.7" r="3" fill="#d0d0d0" opacity="0.5"/><circle cx="1169.5" cy="775.1" r="2.55" fill="#3e3e3e"/>
<circle cx="1182.3" cy="775.7" r="3" fill="#d0d0d0" opacity="0.5"/><circle cx="1182.3" cy="775.1" r="2.55" fill="#3e3e3e"/>
<circle cx="1195.1" cy="775.7" r="3" fill="#d0d0d0" opacity="0.5"/><circle cx="1195.1" cy="775.1" r="2.55" fill="#3e3e3e"/>
<circle cx="1207.9" cy="775.7" r="3" fill="#d0d0d0" opacity="0.5"/><circle cx="1207.9" cy="775.1" r="2.55" fill="#3e3e3e"/>
<circle cx="1220.7" cy="775.7" r="3" fill="#d0d0d0" opacity="0.5"/><circle cx="1220.7" cy="775.1" r="2.55" fill="#3e3e3e"/>
<circle cx="1233.5" cy="775.7" r="3" fill="#d0d0d0" opacity="0.5"/><circle cx="1233.5" cy="775.1" r="2.55" fill="#3e3e3e"/>
<circle cx="1246.3" cy="775.7" r="3" fill="#d0d0d0" opacity="0.5"/><circle cx="1246.3" cy="775.1" r="2.55" fill="#3e3e3e"/>
<circle cx="1259.1" cy="775.7" r="3" fill="#d0d0d0" opacity="0.5"/><circle cx="1259.1" cy="775.1" r="2.55" fill="#3e3e3e"/>
<circle cx="1271.9" cy="775.7" r="3" fill="#d0d0d0" opacity="0.5"/><circle cx="1271.9" cy="775.1" r="2.55" fill="#3e3e3e"/>
<circle cx="1284.7" cy="775.7" r="3" fill="#d0d0d0" opacity="0.5"/><circle cx="1284.7" cy="775.1" r="2.55" fill="#3e3e3e"/>
<circle cx="1297.5" cy="775.7" r="3" fill="#d0d0d0" opacity="0.5"/><circle cx="1297.5" cy="775.1" r="2.55" fill="#3e3e3e"/>
<circle cx="1310.3" cy="775.7" r="3" fill="#d0d0d0" opacity="0.5"/><circle cx="1310.3" cy="775.1" r="2.55" fill="#3e3e3e"/>
<circle cx="1323.1" cy="775.7" r="3" fill="#d0d0d0" opacity="0.5"/><circle cx="1323.1" cy="775.1" r="2.55" fill="#3e3e3e"/>
<circle cx="1335.9" cy="775.7" r="3" fill="#d0d0d0" opacity="0.5"/><circle cx="1335.9" cy="775.1" r="2.55" fill="#3e3e3e"/>
<circle cx="1348.7" cy="775.7" r="3" fill="#d0d0d0" opacity="0.5"/><circle cx="1348.7" cy="775.1" r="2.55" fill="#3e3e3e"/>
<circle cx="1361.5" cy="775.7" r="3" fill="#d0d0d0" opacity="0.5"/><circle cx="1361.5" cy="775.1" r="2.55" fill="#3e3e3e"/>
<circle cx="1374.3" cy="775.7" r="3" fill="#d0d0d0" opacity="0.5"/><circle cx="1374.3" cy="775.1" r="2.55" fill="#3e3e3e"/>
<circle cx="1387.1" cy="775.7" r="3" fill="#d0d0d0" opacity="0.5"/><circle cx="1387.1" cy="775.1" r="2.55" fill="#3e3e3e"/>
<circle cx="1399.9" cy="775.7" r="3" fill="#d0d0d0" opacity="0.5"/><circle cx="1399.9" cy="775.1" r="2.55" fill="#3e3e3e"/>
<circle cx="1412.7" cy="775.7" r="3" fill="#d0d0d0" opacity="0.5"/><circle cx="1412.7" cy="775.1" r="2.55" fill="#3e3e3e"/>
<circle cx="1425.5" cy="775.7" r="3" fill="#d0d0d0" opacity="0.5"/><circle cx="1425.5" cy="775.1" r="2.55" fill="#3e3e3e"/>
<circle cx="1438.3" cy="775.7" r="3" fill="#d0d0d0" opacity="0.5"/><circle cx="1438.3" cy="775.1" r="2.55" fill="#3e3e3e"/>
<circle cx="1451.1" cy="775.7" r="3" fill="#d0d0d0" opacity="0.5"/><circle cx="1451.1" cy="775.1" r="2.55" fill="#3e3e3e"/>
<circle cx="1463.9" cy="775.7" r="3" fill="#d0d0d0" opacity="0.5"/><circle cx="1463.9" cy="775.1" r="2.55" fill="#3e3e3e"/>
<circle cx="1476.7" cy="775.7" r="3" fill="#d0d0d0" opacity="0.5"/><circle cx="1476.7" cy="775.1" r="2.55" fill="#3e3e3e"/>
<circle cx="22.7" cy="788.5" r="3" fill="#d0d0d0" opacity="0.5"/><circle cx="22.7" cy="787.9" r="2.55" fill="#3e3e3e"/>
<circle cx="35.5" cy="788.5" r="3" fill="#d0d0d0" opacity="0.5"/><circle cx="35.5" cy="787.9" r="2.55" fill="#3e3e3e"/>
<circle cx="48.3" cy="788.5" r="3" fill="#d0d0d0" opacity="0.5"/><circle cx="48.3" cy="787.9" r="2.55" fill="#3e3e3e"/>
<circle cx="61.1" cy="788.5" r="3" fill="#d0d0d0" opacity="0.5"/><circle cx="61.1" cy="787.9" r="2.55" fill="#3e3e3e"/>
<circle cx="73.9" cy="788.5" r="3" fill="#d0d0d0" opacity="0.5"/><circle cx="73.9" cy="787.9" r="2.55" fill="#3e3e3e"/>
<circle cx="86.7" cy="788.5" r="3" fill="#d0d0d0" opacity="0.5"/><circle cx="86.7" cy="787.9" r="2.55" fill="#3e3e3e"/>
<circle cx="99.5" cy="788.5" r="3" fill="#d0d0d0" opacity="0.5"/><circle cx="99.5" cy="787.9" r="2.55" fill="#3e3e3e"/>
<circle cx="112.3" cy="788.5" r="3" fill="#d0d0d0" opacity="0.5"/><circle cx="112.3" cy="787.9" r="2.55" fill="#3e3e3e"/>
<circle cx="125.1" cy="788.5" r="3" fill="#d0d0d0" opacity="0.5"/><circle cx="125.1" cy="787.9" r="2.55" fill="#3e3e3e"/>
<circle cx="137.9" cy="788.5" r="3" fill="#d0d0d0" opacity="0.5"/><circle cx="137.9" cy="787.9" r="2.55" fill="#3e3e3e"/>
<circle cx="150.7" cy="788.5" r="3" fill="#d0d0d0" opacity="0.5"/><circle cx="150.7" cy="787.9" r="2.55" fill="#3e3e3e"/>
<circle cx="163.5" cy="788.5" r="3" fill="#d0d0d0" opacity="0.5"/><circle cx="163.5" cy="787.9" r="2.55" fill="#3e3e3e"/>
<circle cx="176.3" cy="788.5" r="3" fill="#d0d0d0" opacity="0.5"/><circle cx="176.3" cy="787.9" r="2.55" fill="#3e3e3e"/>
<circle cx="189.1" cy="788.5" r="3" fill="#d0d0d0" opacity="0.5"/><circle cx="189.1" cy="787.9" r="2.55" fill="#3e3e3e"/>
<circle cx="201.9" cy="788.5" r="3" fill="#d0d0d0" opacity="0.5"/><circle cx="201.9" cy="787.9" r="2.55" fill="#3e3e3e"/>
<circle cx="214.7" cy="788.5" r="3" fill="#d0d0d0" opacity="0.5"/><circle cx="214.7" cy="787.9" r="2.55" fill="#3e3e3e"/>
<circle cx="227.5" cy="788.5" r="3" fill="#d0d0d0" opacity="0.5"/><circle cx="227.5" cy="787.9" r="2.55" fill="#3e3e3e"/>
<circle cx="240.3" cy="788.5" r="3" fill="#d0d0d0" opacity="0.5"/><circle cx="240.3" cy="787.9" r="2.55" fill="#3e3e3e"/>
<circle cx="253.1" cy="788.5" r="3" fill="#d0d0d0" opacity="0.5"/><circle cx="253.1" cy="787.9" r="2.55" fill="#3e3e3e"/>
<circle cx="265.9" cy="788.5" r="3" fill="#d0d0d0" opacity="0.5"/><circle cx="265.9" cy="787.9" r="2.55" fill="#3e3e3e"/>
<circle cx="278.7" cy="788.5" r="3" fill="#d0d0d0" opacity="0.5"/><circle cx="278.7" cy="787.9" r="2.55" fill="#3e3e3e"/>
<circle cx="291.5" cy="788.5" r="3" fill="#d0d0d0" opacity="0.5"/><circle cx="291.5" cy="787.9" r="2.55" fill="#3e3e3e"/>
<circle cx="304.3" cy="788.5" r="3" fill="#d0d0d0" opacity="0.5"/><circle cx="304.3" cy="787.9" r="2.55" fill="#3e3e3e"/>
<circle cx="317.1" cy="788.5" r="3" fill="#d0d0d0" opacity="0.5"/><circle cx="317.1" cy="787.9" r="2.55" fill="#3e3e3e"/>
<circle cx="329.9" cy="788.5" r="3" fill="#d0d0d0" opacity="0.5"/><circle cx="329.9" cy="787.9" r="2.55" fill="#3e3e3e"/>
<circle cx="342.7" cy="788.5" r="3" fill="#d0d0d0" opacity="0.5"/><circle cx="342.7" cy="787.9" r="2.55" fill="#3e3e3e"/>
<circle cx="355.5" cy="788.5" r="3" fill="#d0d0d0" opacity="0.5"/><circle cx="355.5" cy="787.9" r="2.55" fill="#3e3e3e"/>
<circle cx="368.3" cy="788.5" r="3" fill="#d0d0d0" opacity="0.5"/><circle cx="368.3" cy="787.9" r="2.55" fill="#3e3e3e"/>
<circle cx="381.1" cy="788.5" r="3" fill="#d0d0d0" opacity="0.5"/><circle cx="381.1" cy="787.9" r="2.55" fill="#3e3e3e"/>
<circle cx="393.9" cy="788.5" r="3" fill="#d0d0d0" opacity="0.5"/><circle cx="393.9" cy="787.9" r="2.55" fill="#3e3e3e"/>
<circle cx="406.7" cy="788.5" r="3" fill="#d0d0d0" opacity="0.5"/><circle cx="406.7" cy="787.9" r="2.55" fill="#3e3e3e"/>
<circle cx="419.5" cy="788.5" r="3" fill="#d0d0d0" opacity="0.5"/><circle cx="419.5" cy="787.9" r="2.55" fill="#3e3e3e"/>
<circle cx="432.3" cy="788.5" r="3" fill="#d0d0d0" opacity="0.5"/><circle cx="432.3" cy="787.9" r="2.55" fill="#3e3e3e"/>
<circle cx="445.1" cy="788.5" r="3" fill="#d0d0d0" opacity="0.5"/><circle cx="445.1" cy="787.9" r="2.55" fill="#3e3e3e"/>
<circle cx="457.9" cy="788.5" r="3" fill="#d0d0d0" opacity="0.5"/><circle cx="457.9" cy="787.9" r="2.55" fill="#3e3e3e"/>
<circle cx="470.7" cy="788.5" r="3" fill="#d0d0d0" opacity="0.5"/><circle cx="470.7" cy="787.9" r="2.55" fill="#3e3e3e"/>
<circle cx="483.5" cy="788.5" r="3" fill="#d0d0d0" opacity="0.5"/><circle cx="483.5" cy="787.9" r="2.55" fill="#3e3e3e"/>
<circle cx="496.3" cy="788.5" r="3" fill="#d0d0d0" opacity="0.5"/><circle cx="496.3" cy="787.9" r="2.55" fill="#3e3e3e"/>
<circle cx="509.1" cy="788.5" r="3" fill="#d0d0d0" opacity="0.5"/><circle cx="509.1" cy="787.9" r="2.55" fill="#3e3e3e"/>
<circle cx="521.9" cy="788.5" r="3" fill="#d0d0d0" opacity="0.5"/><circle cx="521.9" cy="787.9" r="2.55" fill="#3e3e3e"/>
<circle cx="534.7" cy="788.5" r="3" fill="#d0d0d0" opacity="0.5"/><circle cx="534.7" cy="787.9" r="2.55" fill="#3e3e3e"/>
<circle cx="547.5" cy="788.5" r="3" fill="#d0d0d0" opacity="0.5"/><circle cx="547.5" cy="787.9" r="2.55" fill="#3e3e3e"/>
<circle cx="560.3" cy="788.5" r="3" fill="#d0d0d0" opacity="0.5"/><circle cx="560.3" cy="787.9" r="2.55" fill="#3e3e3e"/>
<circle cx="573.1" cy="788.5" r="3" fill="#d0d0d0" opacity="0.5"/><circle cx="573.1" cy="787.9" r="2.55" fill="#3e3e3e"/>
<circle cx="585.9" cy="788.5" r="3" fill="#d0d0d0" opacity="0.5"/><circle cx="585.9" cy="787.9" r="2.55" fill="#3e3e3e"/>
<circle cx="598.7" cy="788.5" r="3" fill="#d0d0d0" opacity="0.5"/><circle cx="598.7" cy="787.9" r="2.55" fill="#3e3e3e"/>
<circle cx="611.5" cy="788.5" r="3" fill="#d0d0d0" opacity="0.5"/><circle cx="611.5" cy="787.9" r="2.55" fill="#3e3e3e"/>
<circle cx="624.3" cy="788.5" r="3" fill="#d0d0d0" opacity="0.5"/><circle cx="624.3" cy="787.9" r="2.55" fill="#3e3e3e"/>
<circle cx="637.1" cy="788.5" r="3" fill="#d0d0d0" opacity="0.5"/><circle cx="637.1" cy="787.9" r="2.55" fill="#3e3e3e"/>
<circle cx="649.9" cy="788.5" r="3" fill="#d0d0d0" opacity="0.5"/><circle cx="649.9" cy="787.9" r="2.55" fill="#3e3e3e"/>
<circle cx="662.7" cy="788.5" r="3" fill="#d0d0d0" opacity="0.5"/><circle cx="662.7" cy="787.9" r="2.55" fill="#3e3e3e"/>
<circle cx="675.5" cy="788.5" r="3" fill="#d0d0d0" opacity="0.5"/><circle cx="675.5" cy="787.9" r="2.55" fill="#3e3e3e"/>
<circle cx="688.3" cy="788.5" r="3" fill="#d0d0d0" opacity="0.5"/><circle cx="688.3" cy="787.9" r="2.55" fill="#3e3e3e"/>
<circle cx="701.1" cy="788.5" r="3" fill="#d0d0d0" opacity="0.5"/><circle cx="701.1" cy="787.9" r="2.55" fill="#3e3e3e"/>
<circle cx="713.9" cy="788.5" r="3" fill="#d0d0d0" opacity="0.5"/><circle cx="713.9" cy="787.9" r="2.55" fill="#3e3e3e"/>
<circle cx="726.7" cy="788.5" r="3" fill="#d0d0d0" opacity="0.5"/><circle cx="726.7" cy="787.9" r="2.55" fill="#3e3e3e"/>
<circle cx="739.5" cy="788.5" r="3" fill="#d0d0d0" opacity="0.5"/><circle cx="739.5" cy="787.9" r="2.55" fill="#3e3e3e"/>
<circle cx="752.3" cy="788.5" r="3" fill="#d0d0d0" opacity="0.5"/><circle cx="752.3" cy="787.9" r="2.55" fill="#3e3e3e"/>
<circle cx="765.1" cy="788.5" r="3" fill="#d0d0d0" opacity="0.5"/><circle cx="765.1" cy="787.9" r="2.55" fill="#3e3e3e"/>
<circle cx="777.9" cy="788.5" r="3" fill="#d0d0d0" opacity="0.5"/><circle cx="777.9" cy="787.9" r="2.55" fill="#3e3e3e"/>
<circle cx="790.7" cy="788.5" r="3" fill="#d0d0d0" opacity="0.5"/><circle cx="790.7" cy="787.9" r="2.55" fill="#3e3e3e"/>
<circle cx="803.5" cy="788.5" r="3" fill="#d0d0d0" opacity="0.5"/><circle cx="803.5" cy="787.9" r="2.55" fill="#3e3e3e"/>
<circle cx="816.3" cy="788.5" r="3" fill="#d0d0d0" opacity="0.5"/><circle cx="816.3" cy="787.9" r="2.55" fill="#3e3e3e"/>
<circle cx="829.1" cy="788.5" r="3" fill="#d0d0d0" opacity="0.5"/><circle cx="829.1" cy="787.9" r="2.55" fill="#3e3e3e"/>
<circle cx="841.9" cy="788.5" r="3" fill="#d0d0d0" opacity="0.5"/><circle cx="841.9" cy="787.9" r="2.55" fill="#3e3e3e"/>
<circle cx="854.7" cy="788.5" r="3" fill="#d0d0d0" opacity="0.5"/><circle cx="854.7" cy="787.9" r="2.55" fill="#3e3e3e"/>
<circle cx="867.5" cy="788.5" r="3" fill="#d0d0d0" opacity="0.5"/><circle cx="867.5" cy="787.9" r="2.55" fill="#3e3e3e"/>
<circle cx="880.3" cy="788.5" r="3" fill="#d0d0d0" opacity="0.5"/><circle cx="880.3" cy="787.9" r="2.55" fill="#3e3e3e"/>
<circle cx="893.1" cy="788.5" r="3" fill="#d0d0d0" opacity="0.5"/><circle cx="893.1" cy="787.9" r="2.55" fill="#3e3e3e"/>
<circle cx="905.9" cy="788.5" r="3" fill="#d0d0d0" opacity="0.5"/><circle cx="905.9" cy="787.9" r="2.55" fill="#3e3e3e"/>
<circle cx="918.7" cy="788.5" r="3" fill="#d0d0d0" opacity="0.5"/><circle cx="918.7" cy="787.9" r="2.55" fill="#3e3e3e"/>
<circle cx="931.5" cy="788.5" r="3" fill="#d0d0d0" opacity="0.5"/><circle cx="931.5" cy="787.9" r="2.55" fill="#3e3e3e"/>
<circle cx="944.3" cy="788.5" r="3" fill="#d0d0d0" opacity="0.5"/><circle cx="944.3" cy="787.9" r="2.55" fill="#3e3e3e"/>
<circle cx="957.1" cy="788.5" r="3" fill="#d0d0d0" opacity="0.5"/><circle cx="957.1" cy="787.9" r="2.55" fill="#3e3e3e"/>
<circle cx="969.9" cy="788.5" r="3" fill="#d0d0d0" opacity="0.5"/><circle cx="969.9" cy="787.9" r="2.55" fill="#3e3e3e"/>
<circle cx="982.7" cy="788.5" r="3" fill="#d0d0d0" opacity="0.5"/><circle cx="982.7" cy="787.9" r="2.55" fill="#3e3e3e"/>
<circle cx="995.5" cy="788.5" r="3" fill="#d0d0d0" opacity="0.5"/><circle cx="995.5" cy="787.9" r="2.55" fill="#3e3e3e"/>
<circle cx="1008.3" cy="788.5" r="3" fill="#d0d0d0" opacity="0.5"/><circle cx="1008.3" cy="787.9" r="2.55" fill="#3e3e3e"/>
<circle cx="1021.1" cy="788.5" r="3" fill="#d0d0d0" opacity="0.5"/><circle cx="1021.1" cy="787.9" r="2.55" fill="#3e3e3e"/>
<circle cx="1033.9" cy="788.5" r="3" fill="#d0d0d0" opacity="0.5"/><circle cx="1033.9" cy="787.9" r="2.55" fill="#3e3e3e"/>
<circle cx="1046.7" cy="788.5" r="3" fill="#d0d0d0" opacity="0.5"/><circle cx="1046.7" cy="787.9" r="2.55" fill="#3e3e3e"/>
<circle cx="1059.5" cy="788.5" r="3" fill="#d0d0d0" opacity="0.5"/><circle cx="1059.5" cy="787.9" r="2.55" fill="#3e3e3e"/>
<circle cx="1072.3" cy="788.5" r="3" fill="#d0d0d0" opacity="0.5"/><circle cx="1072.3" cy="787.9" r="2.55" fill="#3e3e3e"/>
<circle cx="1085.1" cy="788.5" r="3" fill="#d0d0d0" opacity="0.5"/><circle cx="1085.1" cy="787.9" r="2.55" fill="#3e3e3e"/>
<circle cx="1097.9" cy="788.5" r="3" fill="#d0d0d0" opacity="0.5"/><circle cx="1097.9" cy="787.9" r="2.55" fill="#3e3e3e"/>
<circle cx="1110.7" cy="788.5" r="3" fill="#d0d0d0" opacity="0.5"/><circle cx="1110.7" cy="787.9" r="2.55" fill="#3e3e3e"/>
<circle cx="1123.5" cy="788.5" r="3" fill="#d0d0d0" opacity="0.5"/><circle cx="1123.5" cy="787.9" r="2.55" fill="#3e3e3e"/>
<circle cx="1136.3" cy="788.5" r="3" fill="#d0d0d0" opacity="0.5"/><circle cx="1136.3" cy="787.9" r="2.55" fill="#3e3e3e"/>
<circle cx="1149.1" cy="788.5" r="3" fill="#d0d0d0" opacity="0.5"/><circle cx="1149.1" cy="787.9" r="2.55" fill="#3e3e3e"/>
<circle cx="1161.9" cy="788.5" r="3" fill="#d0d0d0" opacity="0.5"/><circle cx="1161.9" cy="787.9" r="2.55" fill="#3e3e3e"/>
<circle cx="1174.7" cy="788.5" r="3" fill="#d0d0d0" opacity="0.5"/><circle cx="1174.7" cy="787.9" r="2.55" fill="#3e3e3e"/>
<circle cx="1187.5" cy="788.5" r="3" fill="#d0d0d0" opacity="0.5"/><circle cx="1187.5" cy="787.9" r="2.55" fill="#3e3e3e"/>
<circle cx="1200.3" cy="788.5" r="3" fill="#d0d0d0" opacity="0.5"/><circle cx="1200.3" cy="787.9" r="2.55" fill="#3e3e3e"/>
<circle cx="1213.1" cy="788.5" r="3" fill="#d0d0d0" opacity="0.5"/><circle cx="1213.1" cy="787.9" r="2.55" fill="#3e3e3e"/>
<circle cx="1225.9" cy="788.5" r="3" fill="#d0d0d0" opacity="0.5"/><circle cx="1225.9" cy="787.9" r="2.55" fill="#3e3e3e"/>
<circle cx="1238.7" cy="788.5" r="3" fill="#d0d0d0" opacity="0.5"/><circle cx="1238.7" cy="787.9" r="2.55" fill="#3e3e3e"/>
<circle cx="1251.5" cy="788.5" r="3" fill="#d0d0d0" opacity="0.5"/><circle cx="1251.5" cy="787.9" r="2.55" fill="#3e3e3e"/>
<circle cx="1264.3" cy="788.5" r="3" fill="#d0d0d0" opacity="0.5"/><circle cx="1264.3" cy="787.9" r="2.55" fill="#3e3e3e"/>
<circle cx="1277.1" cy="788.5" r="3" fill="#d0d0d0" opacity="0.5"/><circle cx="1277.1" cy="787.9" r="2.55" fill="#3e3e3e"/>
<circle cx="1289.9" cy="788.5" r="3" fill="#d0d0d0" opacity="0.5"/><circle cx="1289.9" cy="787.9" r="2.55" fill="#3e3e3e"/>
<circle cx="1302.7" cy="788.5" r="3" fill="#d0d0d0" opacity="0.5"/><circle cx="1302.7" cy="787.9" r="2.55" fill="#3e3e3e"/>
<circle cx="1315.5" cy="788.5" r="3" fill="#d0d0d0" opacity="0.5"/><circle cx="1315.5" cy="787.9" r="2.55" fill="#3e3e3e"/>
<circle cx="1328.3" cy="788.5" r="3" fill="#d0d0d0" opacity="0.5"/><circle cx="1328.3" cy="787.9" r="2.55" fill="#3e3e3e"/>
<circle cx="1341.1" cy="788.5" r="3" fill="#d0d0d0" opacity="0.5"/><circle cx="1341.1" cy="787.9" r="2.55" fill="#3e3e3e"/>
<circle cx="1353.9" cy="788.5" r="3" fill="#d0d0d0" opacity="0.5"/><circle cx="1353.9" cy="787.9" r="2.55" fill="#3e3e3e"/>
<circle cx="1366.7" cy="788.5" r="3" fill="#d0d0d0" opacity="0.5"/><circle cx="1366.7" cy="787.9" r="2.55" fill="#3e3e3e"/>
<circle cx="1379.5" cy="788.5" r="3" fill="#d0d0d0" opacity="0.5"/><circle cx="1379.5" cy="787.9" r="2.55" fill="#3e3e3e"/>
<circle cx="1392.3" cy="788.5" r="3" fill="#d0d0d0" opacity="0.5"/><circle cx="1392.3" cy="787.9" r="2.55" fill="#3e3e3e"/>
<circle cx="1405.1" cy="788.5" r="3" fill="#d0d0d0" opacity="0.5"/><circle cx="1405.1" cy="787.9" r="2.55" fill="#3e3e3e"/>
<circle cx="1417.9" cy="788.5" r="3" fill="#d0d0d0" opacity="0.5"/><circle cx="1417.9" cy="787.9" r="2.55" fill="#3e3e3e"/>
<circle cx="1430.7" cy="788.5" r="3" fill="#d0d0d0" opacity="0.5"/><circle cx="1430.7" cy="787.9" r="2.55" fill="#3e3e3e"/>
<circle cx="1443.5" cy="788.5" r="3" fill="#d0d0d0" opacity="0.5"/><circle cx="1443.5" cy="787.9" r="2.55" fill="#3e3e3e"/>
<circle cx="1456.3" cy="788.5" r="3" fill="#d0d0d0" opacity="0.5"/><circle cx="1456.3" cy="787.9" r="2.55" fill="#3e3e3e"/>
<circle cx="1469.1" cy="788.5" r="3" fill="#d0d0d0" opacity="0.5"/><circle cx="1469.1" cy="787.9" r="2.55" fill="#3e3e3e"/>
<circle cx="30.3" cy="801.4" r="3" fill="#d0d0d0" opacity="0.5"/><circle cx="30.3" cy="800.8" r="2.55" fill="#3e3e3e"/>
<circle cx="43.1" cy="801.4" r="3" fill="#d0d0d0" opacity="0.5"/><circle cx="43.1" cy="800.8" r="2.55" fill="#3e3e3e"/>
<circle cx="55.9" cy="801.4" r="3" fill="#d0d0d0" opacity="0.5"/><circle cx="55.9" cy="800.8" r="2.55" fill="#3e3e3e"/>
<circle cx="68.7" cy="801.4" r="3" fill="#d0d0d0" opacity="0.5"/><circle cx="68.7" cy="800.8" r="2.55" fill="#3e3e3e"/>
<circle cx="81.5" cy="801.4" r="3" fill="#d0d0d0" opacity="0.5"/><circle cx="81.5" cy="800.8" r="2.55" fill="#3e3e3e"/>
<circle cx="94.3" cy="801.4" r="3" fill="#d0d0d0" opacity="0.5"/><circle cx="94.3" cy="800.8" r="2.55" fill="#3e3e3e"/>
<circle cx="107.1" cy="801.4" r="3" fill="#d0d0d0" opacity="0.5"/><circle cx="107.1" cy="800.8" r="2.55" fill="#3e3e3e"/>
<circle cx="119.9" cy="801.4" r="3" fill="#d0d0d0" opacity="0.5"/><circle cx="119.9" cy="800.8" r="2.55" fill="#3e3e3e"/>
<circle cx="132.7" cy="801.4" r="3" fill="#d0d0d0" opacity="0.5"/><circle cx="132.7" cy="800.8" r="2.55" fill="#3e3e3e"/>
<circle cx="145.5" cy="801.4" r="3" fill="#d0d0d0" opacity="0.5"/><circle cx="145.5" cy="800.8" r="2.55" fill="#3e3e3e"/>
<circle cx="158.3" cy="801.4" r="3" fill="#d0d0d0" opacity="0.5"/><circle cx="158.3" cy="800.8" r="2.55" fill="#3e3e3e"/>
<circle cx="171.1" cy="801.4" r="3" fill="#d0d0d0" opacity="0.5"/><circle cx="171.1" cy="800.8" r="2.55" fill="#3e3e3e"/>
<circle cx="183.9" cy="801.4" r="3" fill="#d0d0d0" opacity="0.5"/><circle cx="183.9" cy="800.8" r="2.55" fill="#3e3e3e"/>
<circle cx="196.7" cy="801.4" r="3" fill="#d0d0d0" opacity="0.5"/><circle cx="196.7" cy="800.8" r="2.55" fill="#3e3e3e"/>
<circle cx="209.5" cy="801.4" r="3" fill="#d0d0d0" opacity="0.5"/><circle cx="209.5" cy="800.8" r="2.55" fill="#3e3e3e"/>
<circle cx="222.3" cy="801.4" r="3" fill="#d0d0d0" opacity="0.5"/><circle cx="222.3" cy="800.8" r="2.55" fill="#3e3e3e"/>
<circle cx="235.1" cy="801.4" r="3" fill="#d0d0d0" opacity="0.5"/><circle cx="235.1" cy="800.8" r="2.55" fill="#3e3e3e"/>
<circle cx="247.9" cy="801.4" r="3" fill="#d0d0d0" opacity="0.5"/><circle cx="247.9" cy="800.8" r="2.55" fill="#3e3e3e"/>
<circle cx="260.7" cy="801.4" r="3" fill="#d0d0d0" opacity="0.5"/><circle cx="260.7" cy="800.8" r="2.55" fill="#3e3e3e"/>
<circle cx="273.5" cy="801.4" r="3" fill="#d0d0d0" opacity="0.5"/><circle cx="273.5" cy="800.8" r="2.55" fill="#3e3e3e"/>
<circle cx="286.3" cy="801.4" r="3" fill="#d0d0d0" opacity="0.5"/><circle cx="286.3" cy="800.8" r="2.55" fill="#3e3e3e"/>
<circle cx="299.1" cy="801.4" r="3" fill="#d0d0d0" opacity="0.5"/><circle cx="299.1" cy="800.8" r="2.55" fill="#3e3e3e"/>
<circle cx="311.9" cy="801.4" r="3" fill="#d0d0d0" opacity="0.5"/><circle cx="311.9" cy="800.8" r="2.55" fill="#3e3e3e"/>
<circle cx="324.7" cy="801.4" r="3" fill="#d0d0d0" opacity="0.5"/><circle cx="324.7" cy="800.8" r="2.55" fill="#3e3e3e"/>
<circle cx="337.5" cy="801.4" r="3" fill="#d0d0d0" opacity="0.5"/><circle cx="337.5" cy="800.8" r="2.55" fill="#3e3e3e"/>
<circle cx="350.3" cy="801.4" r="3" fill="#d0d0d0" opacity="0.5"/><circle cx="350.3" cy="800.8" r="2.55" fill="#3e3e3e"/>
<circle cx="363.1" cy="801.4" r="3" fill="#d0d0d0" opacity="0.5"/><circle cx="363.1" cy="800.8" r="2.55" fill="#3e3e3e"/>
<circle cx="375.9" cy="801.4" r="3" fill="#d0d0d0" opacity="0.5"/><circle cx="375.9" cy="800.8" r="2.55" fill="#3e3e3e"/>
<circle cx="388.7" cy="801.4" r="3" fill="#d0d0d0" opacity="0.5"/><circle cx="388.7" cy="800.8" r="2.55" fill="#3e3e3e"/>
<circle cx="401.5" cy="801.4" r="3" fill="#d0d0d0" opacity="0.5"/><circle cx="401.5" cy="800.8" r="2.55" fill="#3e3e3e"/>
<circle cx="414.3" cy="801.4" r="3" fill="#d0d0d0" opacity="0.5"/><circle cx="414.3" cy="800.8" r="2.55" fill="#3e3e3e"/>
<circle cx="427.1" cy="801.4" r="3" fill="#d0d0d0" opacity="0.5"/><circle cx="427.1" cy="800.8" r="2.55" fill="#3e3e3e"/>
<circle cx="439.9" cy="801.4" r="3" fill="#d0d0d0" opacity="0.5"/><circle cx="439.9" cy="800.8" r="2.55" fill="#3e3e3e"/>
<circle cx="452.7" cy="801.4" r="3" fill="#d0d0d0" opacity="0.5"/><circle cx="452.7" cy="800.8" r="2.55" fill="#3e3e3e"/>
<circle cx="465.5" cy="801.4" r="3" fill="#d0d0d0" opacity="0.5"/><circle cx="465.5" cy="800.8" r="2.55" fill="#3e3e3e"/>
<circle cx="478.3" cy="801.4" r="3" fill="#d0d0d0" opacity="0.5"/><circle cx="478.3" cy="800.8" r="2.55" fill="#3e3e3e"/>
<circle cx="491.1" cy="801.4" r="3" fill="#d0d0d0" opacity="0.5"/><circle cx="491.1" cy="800.8" r="2.55" fill="#3e3e3e"/>
<circle cx="503.9" cy="801.4" r="3" fill="#d0d0d0" opacity="0.5"/><circle cx="503.9" cy="800.8" r="2.55" fill="#3e3e3e"/>
<circle cx="516.7" cy="801.4" r="3" fill="#d0d0d0" opacity="0.5"/><circle cx="516.7" cy="800.8" r="2.55" fill="#3e3e3e"/>
<circle cx="529.5" cy="801.4" r="3" fill="#d0d0d0" opacity="0.5"/><circle cx="529.5" cy="800.8" r="2.55" fill="#3e3e3e"/>
<circle cx="542.3" cy="801.4" r="3" fill="#d0d0d0" opacity="0.5"/><circle cx="542.3" cy="800.8" r="2.55" fill="#3e3e3e"/>
<circle cx="555.1" cy="801.4" r="3" fill="#d0d0d0" opacity="0.5"/><circle cx="555.1" cy="800.8" r="2.55" fill="#3e3e3e"/>
<circle cx="567.9" cy="801.4" r="3" fill="#d0d0d0" opacity="0.5"/><circle cx="567.9" cy="800.8" r="2.55" fill="#3e3e3e"/>
<circle cx="580.7" cy="801.4" r="3" fill="#d0d0d0" opacity="0.5"/><circle cx="580.7" cy="800.8" r="2.55" fill="#3e3e3e"/>
<circle cx="593.5" cy="801.4" r="3" fill="#d0d0d0" opacity="0.5"/><circle cx="593.5" cy="800.8" r="2.55" fill="#3e3e3e"/>
<circle cx="606.3" cy="801.4" r="3" fill="#d0d0d0" opacity="0.5"/><circle cx="606.3" cy="800.8" r="2.55" fill="#3e3e3e"/>
<circle cx="619.1" cy="801.4" r="3" fill="#d0d0d0" opacity="0.5"/><circle cx="619.1" cy="800.8" r="2.55" fill="#3e3e3e"/>
<circle cx="631.9" cy="801.4" r="3" fill="#d0d0d0" opacity="0.5"/><circle cx="631.9" cy="800.8" r="2.55" fill="#3e3e3e"/>
<circle cx="644.7" cy="801.4" r="3" fill="#d0d0d0" opacity="0.5"/><circle cx="644.7" cy="800.8" r="2.55" fill="#3e3e3e"/>
<circle cx="657.5" cy="801.4" r="3" fill="#d0d0d0" opacity="0.5"/><circle cx="657.5" cy="800.8" r="2.55" fill="#3e3e3e"/>
<circle cx="670.3" cy="801.4" r="3" fill="#d0d0d0" opacity="0.5"/><circle cx="670.3" cy="800.8" r="2.55" fill="#3e3e3e"/>
<circle cx="683.1" cy="801.4" r="3" fill="#d0d0d0" opacity="0.5"/><circle cx="683.1" cy="800.8" r="2.55" fill="#3e3e3e"/>
<circle cx="695.9" cy="801.4" r="3" fill="#d0d0d0" opacity="0.5"/><circle cx="695.9" cy="800.8" r="2.55" fill="#3e3e3e"/>
<circle cx="708.7" cy="801.4" r="3" fill="#d0d0d0" opacity="0.5"/><circle cx="708.7" cy="800.8" r="2.55" fill="#3e3e3e"/>
<circle cx="721.5" cy="801.4" r="3" fill="#d0d0d0" opacity="0.5"/><circle cx="721.5" cy="800.8" r="2.55" fill="#3e3e3e"/>
<circle cx="734.3" cy="801.4" r="3" fill="#d0d0d0" opacity="0.5"/><circle cx="734.3" cy="800.8" r="2.55" fill="#3e3e3e"/>
<circle cx="747.1" cy="801.4" r="3" fill="#d0d0d0" opacity="0.5"/><circle cx="747.1" cy="800.8" r="2.55" fill="#3e3e3e"/>
<circle cx="759.9" cy="801.4" r="3" fill="#d0d0d0" opacity="0.5"/><circle cx="759.9" cy="800.8" r="2.55" fill="#3e3e3e"/>
<circle cx="772.7" cy="801.4" r="3" fill="#d0d0d0" opacity="0.5"/><circle cx="772.7" cy="800.8" r="2.55" fill="#3e3e3e"/>
<circle cx="785.5" cy="801.4" r="3" fill="#d0d0d0" opacity="0.5"/><circle cx="785.5" cy="800.8" r="2.55" fill="#3e3e3e"/>
<circle cx="798.3" cy="801.4" r="3" fill="#d0d0d0" opacity="0.5"/><circle cx="798.3" cy="800.8" r="2.55" fill="#3e3e3e"/>
<circle cx="811.1" cy="801.4" r="3" fill="#d0d0d0" opacity="0.5"/><circle cx="811.1" cy="800.8" r="2.55" fill="#3e3e3e"/>
<circle cx="823.9" cy="801.4" r="3" fill="#d0d0d0" opacity="0.5"/><circle cx="823.9" cy="800.8" r="2.55" fill="#3e3e3e"/>
<circle cx="836.7" cy="801.4" r="3" fill="#d0d0d0" opacity="0.5"/><circle cx="836.7" cy="800.8" r="2.55" fill="#3e3e3e"/>
<circle cx="849.5" cy="801.4" r="3" fill="#d0d0d0" opacity="0.5"/><circle cx="849.5" cy="800.8" r="2.55" fill="#3e3e3e"/>
<circle cx="862.3" cy="801.4" r="3" fill="#d0d0d0" opacity="0.5"/><circle cx="862.3" cy="800.8" r="2.55" fill="#3e3e3e"/>
<circle cx="875.1" cy="801.4" r="3" fill="#d0d0d0" opacity="0.5"/><circle cx="875.1" cy="800.8" r="2.55" fill="#3e3e3e"/>
<circle cx="887.9" cy="801.4" r="3" fill="#d0d0d0" opacity="0.5"/><circle cx="887.9" cy="800.8" r="2.55" fill="#3e3e3e"/>
<circle cx="900.7" cy="801.4" r="3" fill="#d0d0d0" opacity="0.5"/><circle cx="900.7" cy="800.8" r="2.55" fill="#3e3e3e"/>
<circle cx="913.5" cy="801.4" r="3" fill="#d0d0d0" opacity="0.5"/><circle cx="913.5" cy="800.8" r="2.55" fill="#3e3e3e"/>
<circle cx="926.3" cy="801.4" r="3" fill="#d0d0d0" opacity="0.5"/><circle cx="926.3" cy="800.8" r="2.55" fill="#3e3e3e"/>
<circle cx="939.1" cy="801.4" r="3" fill="#d0d0d0" opacity="0.5"/><circle cx="939.1" cy="800.8" r="2.55" fill="#3e3e3e"/>
<circle cx="951.9" cy="801.4" r="3" fill="#d0d0d0" opacity="0.5"/><circle cx="951.9" cy="800.8" r="2.55" fill="#3e3e3e"/>
<circle cx="964.7" cy="801.4" r="3" fill="#d0d0d0" opacity="0.5"/><circle cx="964.7" cy="800.8" r="2.55" fill="#3e3e3e"/>
<circle cx="977.5" cy="801.4" r="3" fill="#d0d0d0" opacity="0.5"/><circle cx="977.5" cy="800.8" r="2.55" fill="#3e3e3e"/>
<circle cx="990.3" cy="801.4" r="3" fill="#d0d0d0" opacity="0.5"/><circle cx="990.3" cy="800.8" r="2.55" fill="#3e3e3e"/>
<circle cx="1003.1" cy="801.4" r="3" fill="#d0d0d0" opacity="0.5"/><circle cx="1003.1" cy="800.8" r="2.55" fill="#3e3e3e"/>
<circle cx="1015.9" cy="801.4" r="3" fill="#d0d0d0" opacity="0.5"/><circle cx="1015.9" cy="800.8" r="2.55" fill="#3e3e3e"/>
<circle cx="1028.7" cy="801.4" r="3" fill="#d0d0d0" opacity="0.5"/><circle cx="1028.7" cy="800.8" r="2.55" fill="#3e3e3e"/>
<circle cx="1041.5" cy="801.4" r="3" fill="#d0d0d0" opacity="0.5"/><circle cx="1041.5" cy="800.8" r="2.55" fill="#3e3e3e"/>
<circle cx="1054.3" cy="801.4" r="3" fill="#d0d0d0" opacity="0.5"/><circle cx="1054.3" cy="800.8" r="2.55" fill="#3e3e3e"/>
<circle cx="1067.1" cy="801.4" r="3" fill="#d0d0d0" opacity="0.5"/><circle cx="1067.1" cy="800.8" r="2.55" fill="#3e3e3e"/>
<circle cx="1079.9" cy="801.4" r="3" fill="#d0d0d0" opacity="0.5"/><circle cx="1079.9" cy="800.8" r="2.55" fill="#3e3e3e"/>
<circle cx="1092.7" cy="801.4" r="3" fill="#d0d0d0" opacity="0.5"/><circle cx="1092.7" cy="800.8" r="2.55" fill="#3e3e3e"/>
<circle cx="1105.5" cy="801.4" r="3" fill="#d0d0d0" opacity="0.5"/><circle cx="1105.5" cy="800.8" r="2.55" fill="#3e3e3e"/>
<circle cx="1118.3" cy="801.4" r="3" fill="#d0d0d0" opacity="0.5"/><circle cx="1118.3" cy="800.8" r="2.55" fill="#3e3e3e"/>
<circle cx="1131.1" cy="801.4" r="3" fill="#d0d0d0" opacity="0.5"/><circle cx="1131.1" cy="800.8" r="2.55" fill="#3e3e3e"/>
<circle cx="1143.9" cy="801.4" r="3" fill="#d0d0d0" opacity="0.5"/><circle cx="1143.9" cy="800.8" r="2.55" fill="#3e3e3e"/>
<circle cx="1156.7" cy="801.4" r="3" fill="#d0d0d0" opacity="0.5"/><circle cx="1156.7" cy="800.8" r="2.55" fill="#3e3e3e"/>
<circle cx="1169.5" cy="801.4" r="3" fill="#d0d0d0" opacity="0.5"/><circle cx="1169.5" cy="800.8" r="2.55" fill="#3e3e3e"/>
<circle cx="1182.3" cy="801.4" r="3" fill="#d0d0d0" opacity="0.5"/><circle cx="1182.3" cy="800.8" r="2.55" fill="#3e3e3e"/>
<circle cx="1195.1" cy="801.4" r="3" fill="#d0d0d0" opacity="0.5"/><circle cx="1195.1" cy="800.8" r="2.55" fill="#3e3e3e"/>
<circle cx="1207.9" cy="801.4" r="3" fill="#d0d0d0" opacity="0.5"/><circle cx="1207.9" cy="800.8" r="2.55" fill="#3e3e3e"/>
<circle cx="1220.7" cy="801.4" r="3" fill="#d0d0d0" opacity="0.5"/><circle cx="1220.7" cy="800.8" r="2.55" fill="#3e3e3e"/>
<circle cx="1233.5" cy="801.4" r="3" fill="#d0d0d0" opacity="0.5"/><circle cx="1233.5" cy="800.8" r="2.55" fill="#3e3e3e"/>
<circle cx="1246.3" cy="801.4" r="3" fill="#d0d0d0" opacity="0.5"/><circle cx="1246.3" cy="800.8" r="2.55" fill="#3e3e3e"/>
<circle cx="1259.1" cy="801.4" r="3" fill="#d0d0d0" opacity="0.5"/><circle cx="1259.1" cy="800.8" r="2.55" fill="#3e3e3e"/>
<circle cx="1271.9" cy="801.4" r="3" fill="#d0d0d0" opacity="0.5"/><circle cx="1271.9" cy="800.8" r="2.55" fill="#3e3e3e"/>
<circle cx="1284.7" cy="801.4" r="3" fill="#d0d0d0" opacity="0.5"/><circle cx="1284.7" cy="800.8" r="2.55" fill="#3e3e3e"/>
<circle cx="1297.5" cy="801.4" r="3" fill="#d0d0d0" opacity="0.5"/><circle cx="1297.5" cy="800.8" r="2.55" fill="#3e3e3e"/>
<circle cx="1310.3" cy="801.4" r="3" fill="#d0d0d0" opacity="0.5"/><circle cx="1310.3" cy="800.8" r="2.55" fill="#3e3e3e"/>
<circle cx="1323.1" cy="801.4" r="3" fill="#d0d0d0" opacity="0.5"/><circle cx="1323.1" cy="800.8" r="2.55" fill="#3e3e3e"/>
<circle cx="1335.9" cy="801.4" r="3" fill="#d0d0d0" opacity="0.5"/><circle cx="1335.9" cy="800.8" r="2.55" fill="#3e3e3e"/>
<circle cx="1348.7" cy="801.4" r="3" fill="#d0d0d0" opacity="0.5"/><circle cx="1348.7" cy="800.8" r="2.55" fill="#3e3e3e"/>
<circle cx="1361.5" cy="801.4" r="3" fill="#d0d0d0" opacity="0.5"/><circle cx="1361.5" cy="800.8" r="2.55" fill="#3e3e3e"/>
<circle cx="1374.3" cy="801.4" r="3" fill="#d0d0d0" opacity="0.5"/><circle cx="1374.3" cy="800.8" r="2.55" fill="#3e3e3e"/>
<circle cx="1387.1" cy="801.4" r="3" fill="#d0d0d0" opacity="0.5"/><circle cx="1387.1" cy="800.8" r="2.55" fill="#3e3e3e"/>
<circle cx="1399.9" cy="801.4" r="3" fill="#d0d0d0" opacity="0.5"/><circle cx="1399.9" cy="800.8" r="2.55" fill="#3e3e3e"/>
<circle cx="1412.7" cy="801.4" r="3" fill="#d0d0d0" opacity="0.5"/><circle cx="1412.7" cy="800.8" r="2.55" fill="#3e3e3e"/>
<circle cx="1425.5" cy="801.4" r="3" fill="#d0d0d0" opacity="0.5"/><circle cx="1425.5" cy="800.8" r="2.55" fill="#3e3e3e"/>
<circle cx="1438.3" cy="801.4" r="3" fill="#d0d0d0" opacity="0.5"/><circle cx="1438.3" cy="800.8" r="2.55" fill="#3e3e3e"/>
<circle cx="1451.1" cy="801.4" r="3" fill="#d0d0d0" opacity="0.5"/><circle cx="1451.1" cy="800.8" r="2.55" fill="#3e3e3e"/>
<circle cx="1463.9" cy="801.4" r="3" fill="#d0d0d0" opacity="0.5"/><circle cx="1463.9" cy="800.8" r="2.55" fill="#3e3e3e"/>
<circle cx="1476.7" cy="801.4" r="3" fill="#d0d0d0" opacity="0.5"/><circle cx="1476.7" cy="800.8" r="2.55" fill="#3e3e3e"/>
<circle cx="22.7" cy="814.2" r="3" fill="#d0d0d0" opacity="0.5"/><circle cx="22.7" cy="813.6" r="2.55" fill="#3e3e3e"/>
<circle cx="35.5" cy="814.2" r="3" fill="#d0d0d0" opacity="0.5"/><circle cx="35.5" cy="813.6" r="2.55" fill="#3e3e3e"/>
<circle cx="48.3" cy="814.2" r="3" fill="#d0d0d0" opacity="0.5"/><circle cx="48.3" cy="813.6" r="2.55" fill="#3e3e3e"/>
<circle cx="61.1" cy="814.2" r="3" fill="#d0d0d0" opacity="0.5"/><circle cx="61.1" cy="813.6" r="2.55" fill="#3e3e3e"/>
<circle cx="73.9" cy="814.2" r="3" fill="#d0d0d0" opacity="0.5"/><circle cx="73.9" cy="813.6" r="2.55" fill="#3e3e3e"/>
<circle cx="86.7" cy="814.2" r="3" fill="#d0d0d0" opacity="0.5"/><circle cx="86.7" cy="813.6" r="2.55" fill="#3e3e3e"/>
<circle cx="99.5" cy="814.2" r="3" fill="#d0d0d0" opacity="0.5"/><circle cx="99.5" cy="813.6" r="2.55" fill="#3e3e3e"/>
<circle cx="112.3" cy="814.2" r="3" fill="#d0d0d0" opacity="0.5"/><circle cx="112.3" cy="813.6" r="2.55" fill="#3e3e3e"/>
<circle cx="125.1" cy="814.2" r="3" fill="#d0d0d0" opacity="0.5"/><circle cx="125.1" cy="813.6" r="2.55" fill="#3e3e3e"/>
<circle cx="137.9" cy="814.2" r="3" fill="#d0d0d0" opacity="0.5"/><circle cx="137.9" cy="813.6" r="2.55" fill="#3e3e3e"/>
<circle cx="150.7" cy="814.2" r="3" fill="#d0d0d0" opacity="0.5"/><circle cx="150.7" cy="813.6" r="2.55" fill="#3e3e3e"/>
<circle cx="163.5" cy="814.2" r="3" fill="#d0d0d0" opacity="0.5"/><circle cx="163.5" cy="813.6" r="2.55" fill="#3e3e3e"/>
<circle cx="176.3" cy="814.2" r="3" fill="#d0d0d0" opacity="0.5"/><circle cx="176.3" cy="813.6" r="2.55" fill="#3e3e3e"/>
<circle cx="189.1" cy="814.2" r="3" fill="#d0d0d0" opacity="0.5"/><circle cx="189.1" cy="813.6" r="2.55" fill="#3e3e3e"/>
<circle cx="201.9" cy="814.2" r="3" fill="#d0d0d0" opacity="0.5"/><circle cx="201.9" cy="813.6" r="2.55" fill="#3e3e3e"/>
<circle cx="214.7" cy="814.2" r="3" fill="#d0d0d0" opacity="0.5"/><circle cx="214.7" cy="813.6" r="2.55" fill="#3e3e3e"/>
<circle cx="227.5" cy="814.2" r="3" fill="#d0d0d0" opacity="0.5"/><circle cx="227.5" cy="813.6" r="2.55" fill="#3e3e3e"/>
<circle cx="240.3" cy="814.2" r="3" fill="#d0d0d0" opacity="0.5"/><circle cx="240.3" cy="813.6" r="2.55" fill="#3e3e3e"/>
<circle cx="253.1" cy="814.2" r="3" fill="#d0d0d0" opacity="0.5"/><circle cx="253.1" cy="813.6" r="2.55" fill="#3e3e3e"/>
<circle cx="265.9" cy="814.2" r="3" fill="#d0d0d0" opacity="0.5"/><circle cx="265.9" cy="813.6" r="2.55" fill="#3e3e3e"/>
<circle cx="278.7" cy="814.2" r="3" fill="#d0d0d0" opacity="0.5"/><circle cx="278.7" cy="813.6" r="2.55" fill="#3e3e3e"/>
<circle cx="291.5" cy="814.2" r="3" fill="#d0d0d0" opacity="0.5"/><circle cx="291.5" cy="813.6" r="2.55" fill="#3e3e3e"/>
<circle cx="304.3" cy="814.2" r="3" fill="#d0d0d0" opacity="0.5"/><circle cx="304.3" cy="813.6" r="2.55" fill="#3e3e3e"/>
<circle cx="317.1" cy="814.2" r="3" fill="#d0d0d0" opacity="0.5"/><circle cx="317.1" cy="813.6" r="2.55" fill="#3e3e3e"/>
<circle cx="329.9" cy="814.2" r="3" fill="#d0d0d0" opacity="0.5"/><circle cx="329.9" cy="813.6" r="2.55" fill="#3e3e3e"/>
<circle cx="342.7" cy="814.2" r="3" fill="#d0d0d0" opacity="0.5"/><circle cx="342.7" cy="813.6" r="2.55" fill="#3e3e3e"/>
<circle cx="355.5" cy="814.2" r="3" fill="#d0d0d0" opacity="0.5"/><circle cx="355.5" cy="813.6" r="2.55" fill="#3e3e3e"/>
<circle cx="368.3" cy="814.2" r="3" fill="#d0d0d0" opacity="0.5"/><circle cx="368.3" cy="813.6" r="2.55" fill="#3e3e3e"/>
<circle cx="381.1" cy="814.2" r="3" fill="#d0d0d0" opacity="0.5"/><circle cx="381.1" cy="813.6" r="2.55" fill="#3e3e3e"/>
<circle cx="393.9" cy="814.2" r="3" fill="#d0d0d0" opacity="0.5"/><circle cx="393.9" cy="813.6" r="2.55" fill="#3e3e3e"/>
<circle cx="406.7" cy="814.2" r="3" fill="#d0d0d0" opacity="0.5"/><circle cx="406.7" cy="813.6" r="2.55" fill="#3e3e3e"/>
<circle cx="419.5" cy="814.2" r="3" fill="#d0d0d0" opacity="0.5"/><circle cx="419.5" cy="813.6" r="2.55" fill="#3e3e3e"/>
<circle cx="432.3" cy="814.2" r="3" fill="#d0d0d0" opacity="0.5"/><circle cx="432.3" cy="813.6" r="2.55" fill="#3e3e3e"/>
<circle cx="445.1" cy="814.2" r="3" fill="#d0d0d0" opacity="0.5"/><circle cx="445.1" cy="813.6" r="2.55" fill="#3e3e3e"/>
<circle cx="457.9" cy="814.2" r="3" fill="#d0d0d0" opacity="0.5"/><circle cx="457.9" cy="813.6" r="2.55" fill="#3e3e3e"/>
<circle cx="470.7" cy="814.2" r="3" fill="#d0d0d0" opacity="0.5"/><circle cx="470.7" cy="813.6" r="2.55" fill="#3e3e3e"/>
<circle cx="483.5" cy="814.2" r="3" fill="#d0d0d0" opacity="0.5"/><circle cx="483.5" cy="813.6" r="2.55" fill="#3e3e3e"/>
<circle cx="496.3" cy="814.2" r="3" fill="#d0d0d0" opacity="0.5"/><circle cx="496.3" cy="813.6" r="2.55" fill="#3e3e3e"/>
<circle cx="509.1" cy="814.2" r="3" fill="#d0d0d0" opacity="0.5"/><circle cx="509.1" cy="813.6" r="2.55" fill="#3e3e3e"/>
<circle cx="521.9" cy="814.2" r="3" fill="#d0d0d0" opacity="0.5"/><circle cx="521.9" cy="813.6" r="2.55" fill="#3e3e3e"/>
<circle cx="534.7" cy="814.2" r="3" fill="#d0d0d0" opacity="0.5"/><circle cx="534.7" cy="813.6" r="2.55" fill="#3e3e3e"/>
<circle cx="547.5" cy="814.2" r="3" fill="#d0d0d0" opacity="0.5"/><circle cx="547.5" cy="813.6" r="2.55" fill="#3e3e3e"/>
<circle cx="560.3" cy="814.2" r="3" fill="#d0d0d0" opacity="0.5"/><circle cx="560.3" cy="813.6" r="2.55" fill="#3e3e3e"/>
<circle cx="573.1" cy="814.2" r="3" fill="#d0d0d0" opacity="0.5"/><circle cx="573.1" cy="813.6" r="2.55" fill="#3e3e3e"/>
<circle cx="585.9" cy="814.2" r="3" fill="#d0d0d0" opacity="0.5"/><circle cx="585.9" cy="813.6" r="2.55" fill="#3e3e3e"/>
<circle cx="598.7" cy="814.2" r="3" fill="#d0d0d0" opacity="0.5"/><circle cx="598.7" cy="813.6" r="2.55" fill="#3e3e3e"/>
<circle cx="611.5" cy="814.2" r="3" fill="#d0d0d0" opacity="0.5"/><circle cx="611.5" cy="813.6" r="2.55" fill="#3e3e3e"/>
<circle cx="624.3" cy="814.2" r="3" fill="#d0d0d0" opacity="0.5"/><circle cx="624.3" cy="813.6" r="2.55" fill="#3e3e3e"/>
<circle cx="637.1" cy="814.2" r="3" fill="#d0d0d0" opacity="0.5"/><circle cx="637.1" cy="813.6" r="2.55" fill="#3e3e3e"/>
<circle cx="649.9" cy="814.2" r="3" fill="#d0d0d0" opacity="0.5"/><circle cx="649.9" cy="813.6" r="2.55" fill="#3e3e3e"/>
<circle cx="662.7" cy="814.2" r="3" fill="#d0d0d0" opacity="0.5"/><circle cx="662.7" cy="813.6" r="2.55" fill="#3e3e3e"/>
<circle cx="675.5" cy="814.2" r="3" fill="#d0d0d0" opacity="0.5"/><circle cx="675.5" cy="813.6" r="2.55" fill="#3e3e3e"/>
<circle cx="688.3" cy="814.2" r="3" fill="#d0d0d0" opacity="0.5"/><circle cx="688.3" cy="813.6" r="2.55" fill="#3e3e3e"/>
<circle cx="701.1" cy="814.2" r="3" fill="#d0d0d0" opacity="0.5"/><circle cx="701.1" cy="813.6" r="2.55" fill="#3e3e3e"/>
<circle cx="713.9" cy="814.2" r="3" fill="#d0d0d0" opacity="0.5"/><circle cx="713.9" cy="813.6" r="2.55" fill="#3e3e3e"/>
<circle cx="726.7" cy="814.2" r="3" fill="#d0d0d0" opacity="0.5"/><circle cx="726.7" cy="813.6" r="2.55" fill="#3e3e3e"/>
<circle cx="739.5" cy="814.2" r="3" fill="#d0d0d0" opacity="0.5"/><circle cx="739.5" cy="813.6" r="2.55" fill="#3e3e3e"/>
<circle cx="752.3" cy="814.2" r="3" fill="#d0d0d0" opacity="0.5"/><circle cx="752.3" cy="813.6" r="2.55" fill="#3e3e3e"/>
<circle cx="765.1" cy="814.2" r="3" fill="#d0d0d0" opacity="0.5"/><circle cx="765.1" cy="813.6" r="2.55" fill="#3e3e3e"/>
<circle cx="777.9" cy="814.2" r="3" fill="#d0d0d0" opacity="0.5"/><circle cx="777.9" cy="813.6" r="2.55" fill="#3e3e3e"/>
<circle cx="790.7" cy="814.2" r="3" fill="#d0d0d0" opacity="0.5"/><circle cx="790.7" cy="813.6" r="2.55" fill="#3e3e3e"/>
<circle cx="803.5" cy="814.2" r="3" fill="#d0d0d0" opacity="0.5"/><circle cx="803.5" cy="813.6" r="2.55" fill="#3e3e3e"/>
<circle cx="816.3" cy="814.2" r="3" fill="#d0d0d0" opacity="0.5"/><circle cx="816.3" cy="813.6" r="2.55" fill="#3e3e3e"/>
<circle cx="829.1" cy="814.2" r="3" fill="#d0d0d0" opacity="0.5"/><circle cx="829.1" cy="813.6" r="2.55" fill="#3e3e3e"/>
<circle cx="841.9" cy="814.2" r="3" fill="#d0d0d0" opacity="0.5"/><circle cx="841.9" cy="813.6" r="2.55" fill="#3e3e3e"/>
<circle cx="854.7" cy="814.2" r="3" fill="#d0d0d0" opacity="0.5"/><circle cx="854.7" cy="813.6" r="2.55" fill="#3e3e3e"/>
<circle cx="867.5" cy="814.2" r="3" fill="#d0d0d0" opacity="0.5"/><circle cx="867.5" cy="813.6" r="2.55" fill="#3e3e3e"/>
<circle cx="880.3" cy="814.2" r="3" fill="#d0d0d0" opacity="0.5"/><circle cx="880.3" cy="813.6" r="2.55" fill="#3e3e3e"/>
<circle cx="893.1" cy="814.2" r="3" fill="#d0d0d0" opacity="0.5"/><circle cx="893.1" cy="813.6" r="2.55" fill="#3e3e3e"/>
<circle cx="905.9" cy="814.2" r="3" fill="#d0d0d0" opacity="0.5"/><circle cx="905.9" cy="813.6" r="2.55" fill="#3e3e3e"/>
<circle cx="918.7" cy="814.2" r="3" fill="#d0d0d0" opacity="0.5"/><circle cx="918.7" cy="813.6" r="2.55" fill="#3e3e3e"/>
<circle cx="931.5" cy="814.2" r="3" fill="#d0d0d0" opacity="0.5"/><circle cx="931.5" cy="813.6" r="2.55" fill="#3e3e3e"/>
<circle cx="944.3" cy="814.2" r="3" fill="#d0d0d0" opacity="0.5"/><circle cx="944.3" cy="813.6" r="2.55" fill="#3e3e3e"/>
<circle cx="957.1" cy="814.2" r="3" fill="#d0d0d0" opacity="0.5"/><circle cx="957.1" cy="813.6" r="2.55" fill="#3e3e3e"/>
<circle cx="969.9" cy="814.2" r="3" fill="#d0d0d0" opacity="0.5"/><circle cx="969.9" cy="813.6" r="2.55" fill="#3e3e3e"/>
<circle cx="982.7" cy="814.2" r="3" fill="#d0d0d0" opacity="0.5"/><circle cx="982.7" cy="813.6" r="2.55" fill="#3e3e3e"/>
<circle cx="995.5" cy="814.2" r="3" fill="#d0d0d0" opacity="0.5"/><circle cx="995.5" cy="813.6" r="2.55" fill="#3e3e3e"/>
<circle cx="1008.3" cy="814.2" r="3" fill="#d0d0d0" opacity="0.5"/><circle cx="1008.3" cy="813.6" r="2.55" fill="#3e3e3e"/>
<circle cx="1021.1" cy="814.2" r="3" fill="#d0d0d0" opacity="0.5"/><circle cx="1021.1" cy="813.6" r="2.55" fill="#3e3e3e"/>
<circle cx="1033.9" cy="814.2" r="3" fill="#d0d0d0" opacity="0.5"/><circle cx="1033.9" cy="813.6" r="2.55" fill="#3e3e3e"/>
<circle cx="1046.7" cy="814.2" r="3" fill="#d0d0d0" opacity="0.5"/><circle cx="1046.7" cy="813.6" r="2.55" fill="#3e3e3e"/>
<circle cx="1059.5" cy="814.2" r="3" fill="#d0d0d0" opacity="0.5"/><circle cx="1059.5" cy="813.6" r="2.55" fill="#3e3e3e"/>
<circle cx="1072.3" cy="814.2" r="3" fill="#d0d0d0" opacity="0.5"/><circle cx="1072.3" cy="813.6" r="2.55" fill="#3e3e3e"/>
<circle cx="1085.1" cy="814.2" r="3" fill="#d0d0d0" opacity="0.5"/><circle cx="1085.1" cy="813.6" r="2.55" fill="#3e3e3e"/>
<circle cx="1097.9" cy="814.2" r="3" fill="#d0d0d0" opacity="0.5"/><circle cx="1097.9" cy="813.6" r="2.55" fill="#3e3e3e"/>
<circle cx="1110.7" cy="814.2" r="3" fill="#d0d0d0" opacity="0.5"/><circle cx="1110.7" cy="813.6" r="2.55" fill="#3e3e3e"/>
<circle cx="1123.5" cy="814.2" r="3" fill="#d0d0d0" opacity="0.5"/><circle cx="1123.5" cy="813.6" r="2.55" fill="#3e3e3e"/>
<circle cx="1136.3" cy="814.2" r="3" fill="#d0d0d0" opacity="0.5"/><circle cx="1136.3" cy="813.6" r="2.55" fill="#3e3e3e"/>
<circle cx="1149.1" cy="814.2" r="3" fill="#d0d0d0" opacity="0.5"/><circle cx="1149.1" cy="813.6" r="2.55" fill="#3e3e3e"/>
<circle cx="1161.9" cy="814.2" r="3" fill="#d0d0d0" opacity="0.5"/><circle cx="1161.9" cy="813.6" r="2.55" fill="#3e3e3e"/>
<circle cx="1174.7" cy="814.2" r="3" fill="#d0d0d0" opacity="0.5"/><circle cx="1174.7" cy="813.6" r="2.55" fill="#3e3e3e"/>
<circle cx="1187.5" cy="814.2" r="3" fill="#d0d0d0" opacity="0.5"/><circle cx="1187.5" cy="813.6" r="2.55" fill="#3e3e3e"/>
<circle cx="1200.3" cy="814.2" r="3" fill="#d0d0d0" opacity="0.5"/><circle cx="1200.3" cy="813.6" r="2.55" fill="#3e3e3e"/>
<circle cx="1213.1" cy="814.2" r="3" fill="#d0d0d0" opacity="0.5"/><circle cx="1213.1" cy="813.6" r="2.55" fill="#3e3e3e"/>
<circle cx="1225.9" cy="814.2" r="3" fill="#d0d0d0" opacity="0.5"/><circle cx="1225.9" cy="813.6" r="2.55" fill="#3e3e3e"/>
<circle cx="1238.7" cy="814.2" r="3" fill="#d0d0d0" opacity="0.5"/><circle cx="1238.7" cy="813.6" r="2.55" fill="#3e3e3e"/>
<circle cx="1251.5" cy="814.2" r="3" fill="#d0d0d0" opacity="0.5"/><circle cx="1251.5" cy="813.6" r="2.55" fill="#3e3e3e"/>
<circle cx="1264.3" cy="814.2" r="3" fill="#d0d0d0" opacity="0.5"/><circle cx="1264.3" cy="813.6" r="2.55" fill="#3e3e3e"/>
<circle cx="1277.1" cy="814.2" r="3" fill="#d0d0d0" opacity="0.5"/><circle cx="1277.1" cy="813.6" r="2.55" fill="#3e3e3e"/>
<circle cx="1289.9" cy="814.2" r="3" fill="#d0d0d0" opacity="0.5"/><circle cx="1289.9" cy="813.6" r="2.55" fill="#3e3e3e"/>
<circle cx="1302.7" cy="814.2" r="3" fill="#d0d0d0" opacity="0.5"/><circle cx="1302.7" cy="813.6" r="2.55" fill="#3e3e3e"/>
<circle cx="1315.5" cy="814.2" r="3" fill="#d0d0d0" opacity="0.5"/><circle cx="1315.5" cy="813.6" r="2.55" fill="#3e3e3e"/>
<circle cx="1328.3" cy="814.2" r="3" fill="#d0d0d0" opacity="0.5"/><circle cx="1328.3" cy="813.6" r="2.55" fill="#3e3e3e"/>
<circle cx="1341.1" cy="814.2" r="3" fill="#d0d0d0" opacity="0.5"/><circle cx="1341.1" cy="813.6" r="2.55" fill="#3e3e3e"/>
<circle cx="1353.9" cy="814.2" r="3" fill="#d0d0d0" opacity="0.5"/><circle cx="1353.9" cy="813.6" r="2.55" fill="#3e3e3e"/>
<circle cx="1366.7" cy="814.2" r="3" fill="#d0d0d0" opacity="0.5"/><circle cx="1366.7" cy="813.6" r="2.55" fill="#3e3e3e"/>
<circle cx="1379.5" cy="814.2" r="3" fill="#d0d0d0" opacity="0.5"/><circle cx="1379.5" cy="813.6" r="2.55" fill="#3e3e3e"/>
<circle cx="1392.3" cy="814.2" r="3" fill="#d0d0d0" opacity="0.5"/><circle cx="1392.3" cy="813.6" r="2.55" fill="#3e3e3e"/>
<circle cx="1405.1" cy="814.2" r="3" fill="#d0d0d0" opacity="0.5"/><circle cx="1405.1" cy="813.6" r="2.55" fill="#3e3e3e"/>
<circle cx="1417.9" cy="814.2" r="3" fill="#d0d0d0" opacity="0.5"/><circle cx="1417.9" cy="813.6" r="2.55" fill="#3e3e3e"/>
<circle cx="1430.7" cy="814.2" r="3" fill="#d0d0d0" opacity="0.5"/><circle cx="1430.7" cy="813.6" r="2.55" fill="#3e3e3e"/>
<circle cx="1443.5" cy="814.2" r="3" fill="#d0d0d0" opacity="0.5"/><circle cx="1443.5" cy="813.6" r="2.55" fill="#3e3e3e"/>
<circle cx="1456.3" cy="814.2" r="3" fill="#d0d0d0" opacity="0.5"/><circle cx="1456.3" cy="813.6" r="2.55" fill="#3e3e3e"/>
<circle cx="1469.1" cy="814.2" r="3" fill="#d0d0d0" opacity="0.5"/><circle cx="1469.1" cy="813.6" r="2.55" fill="#3e3e3e"/>
<circle cx="30.3" cy="827.0" r="3" fill="#d0d0d0" opacity="0.5"/><circle cx="30.3" cy="826.4" r="2.55" fill="#3e3e3e"/>
<circle cx="43.1" cy="827.0" r="3" fill="#d0d0d0" opacity="0.5"/><circle cx="43.1" cy="826.4" r="2.55" fill="#3e3e3e"/>
<circle cx="55.9" cy="827.0" r="3" fill="#d0d0d0" opacity="0.5"/><circle cx="55.9" cy="826.4" r="2.55" fill="#3e3e3e"/>
<circle cx="68.7" cy="827.0" r="3" fill="#d0d0d0" opacity="0.5"/><circle cx="68.7" cy="826.4" r="2.55" fill="#3e3e3e"/>
<circle cx="81.5" cy="827.0" r="3" fill="#d0d0d0" opacity="0.5"/><circle cx="81.5" cy="826.4" r="2.55" fill="#3e3e3e"/>
<circle cx="94.3" cy="827.0" r="3" fill="#d0d0d0" opacity="0.5"/><circle cx="94.3" cy="826.4" r="2.55" fill="#3e3e3e"/>
<circle cx="107.1" cy="827.0" r="3" fill="#d0d0d0" opacity="0.5"/><circle cx="107.1" cy="826.4" r="2.55" fill="#3e3e3e"/>
<circle cx="119.9" cy="827.0" r="3" fill="#d0d0d0" opacity="0.5"/><circle cx="119.9" cy="826.4" r="2.55" fill="#3e3e3e"/>
<circle cx="132.7" cy="827.0" r="3" fill="#d0d0d0" opacity="0.5"/><circle cx="132.7" cy="826.4" r="2.55" fill="#3e3e3e"/>
<circle cx="145.5" cy="827.0" r="3" fill="#d0d0d0" opacity="0.5"/><circle cx="145.5" cy="826.4" r="2.55" fill="#3e3e3e"/>
<circle cx="158.3" cy="827.0" r="3" fill="#d0d0d0" opacity="0.5"/><circle cx="158.3" cy="826.4" r="2.55" fill="#3e3e3e"/>
<circle cx="171.1" cy="827.0" r="3" fill="#d0d0d0" opacity="0.5"/><circle cx="171.1" cy="826.4" r="2.55" fill="#3e3e3e"/>
<circle cx="183.9" cy="827.0" r="3" fill="#d0d0d0" opacity="0.5"/><circle cx="183.9" cy="826.4" r="2.55" fill="#3e3e3e"/>
<circle cx="196.7" cy="827.0" r="3" fill="#d0d0d0" opacity="0.5"/><circle cx="196.7" cy="826.4" r="2.55" fill="#3e3e3e"/>
<circle cx="209.5" cy="827.0" r="3" fill="#d0d0d0" opacity="0.5"/><circle cx="209.5" cy="826.4" r="2.55" fill="#3e3e3e"/>
<circle cx="222.3" cy="827.0" r="3" fill="#d0d0d0" opacity="0.5"/><circle cx="222.3" cy="826.4" r="2.55" fill="#3e3e3e"/>
<circle cx="235.1" cy="827.0" r="3" fill="#d0d0d0" opacity="0.5"/><circle cx="235.1" cy="826.4" r="2.55" fill="#3e3e3e"/>
<circle cx="247.9" cy="827.0" r="3" fill="#d0d0d0" opacity="0.5"/><circle cx="247.9" cy="826.4" r="2.55" fill="#3e3e3e"/>
<circle cx="260.7" cy="827.0" r="3" fill="#d0d0d0" opacity="0.5"/><circle cx="260.7" cy="826.4" r="2.55" fill="#3e3e3e"/>
<circle cx="273.5" cy="827.0" r="3" fill="#d0d0d0" opacity="0.5"/><circle cx="273.5" cy="826.4" r="2.55" fill="#3e3e3e"/>
<circle cx="286.3" cy="827.0" r="3" fill="#d0d0d0" opacity="0.5"/><circle cx="286.3" cy="826.4" r="2.55" fill="#3e3e3e"/>
<circle cx="299.1" cy="827.0" r="3" fill="#d0d0d0" opacity="0.5"/><circle cx="299.1" cy="826.4" r="2.55" fill="#3e3e3e"/>
<circle cx="311.9" cy="827.0" r="3" fill="#d0d0d0" opacity="0.5"/><circle cx="311.9" cy="826.4" r="2.55" fill="#3e3e3e"/>
<circle cx="324.7" cy="827.0" r="3" fill="#d0d0d0" opacity="0.5"/><circle cx="324.7" cy="826.4" r="2.55" fill="#3e3e3e"/>
<circle cx="337.5" cy="827.0" r="3" fill="#d0d0d0" opacity="0.5"/><circle cx="337.5" cy="826.4" r="2.55" fill="#3e3e3e"/>
<circle cx="350.3" cy="827.0" r="3" fill="#d0d0d0" opacity="0.5"/><circle cx="350.3" cy="826.4" r="2.55" fill="#3e3e3e"/>
<circle cx="363.1" cy="827.0" r="3" fill="#d0d0d0" opacity="0.5"/><circle cx="363.1" cy="826.4" r="2.55" fill="#3e3e3e"/>
<circle cx="375.9" cy="827.0" r="3" fill="#d0d0d0" opacity="0.5"/><circle cx="375.9" cy="826.4" r="2.55" fill="#3e3e3e"/>
<circle cx="388.7" cy="827.0" r="3" fill="#d0d0d0" opacity="0.5"/><circle cx="388.7" cy="826.4" r="2.55" fill="#3e3e3e"/>
<circle cx="401.5" cy="827.0" r="3" fill="#d0d0d0" opacity="0.5"/><circle cx="401.5" cy="826.4" r="2.55" fill="#3e3e3e"/>
<circle cx="414.3" cy="827.0" r="3" fill="#d0d0d0" opacity="0.5"/><circle cx="414.3" cy="826.4" r="2.55" fill="#3e3e3e"/>
<circle cx="427.1" cy="827.0" r="3" fill="#d0d0d0" opacity="0.5"/><circle cx="427.1" cy="826.4" r="2.55" fill="#3e3e3e"/>
<circle cx="439.9" cy="827.0" r="3" fill="#d0d0d0" opacity="0.5"/><circle cx="439.9" cy="826.4" r="2.55" fill="#3e3e3e"/>
<circle cx="452.7" cy="827.0" r="3" fill="#d0d0d0" opacity="0.5"/><circle cx="452.7" cy="826.4" r="2.55" fill="#3e3e3e"/>
<circle cx="465.5" cy="827.0" r="3" fill="#d0d0d0" opacity="0.5"/><circle cx="465.5" cy="826.4" r="2.55" fill="#3e3e3e"/>
<circle cx="478.3" cy="827.0" r="3" fill="#d0d0d0" opacity="0.5"/><circle cx="478.3" cy="826.4" r="2.55" fill="#3e3e3e"/>
<circle cx="491.1" cy="827.0" r="3" fill="#d0d0d0" opacity="0.5"/><circle cx="491.1" cy="826.4" r="2.55" fill="#3e3e3e"/>
<circle cx="503.9" cy="827.0" r="3" fill="#d0d0d0" opacity="0.5"/><circle cx="503.9" cy="826.4" r="2.55" fill="#3e3e3e"/>
<circle cx="516.7" cy="827.0" r="3" fill="#d0d0d0" opacity="0.5"/><circle cx="516.7" cy="826.4" r="2.55" fill="#3e3e3e"/>
<circle cx="529.5" cy="827.0" r="3" fill="#d0d0d0" opacity="0.5"/><circle cx="529.5" cy="826.4" r="2.55" fill="#3e3e3e"/>
<circle cx="542.3" cy="827.0" r="3" fill="#d0d0d0" opacity="0.5"/><circle cx="542.3" cy="826.4" r="2.55" fill="#3e3e3e"/>
<circle cx="555.1" cy="827.0" r="3" fill="#d0d0d0" opacity="0.5"/><circle cx="555.1" cy="826.4" r="2.55" fill="#3e3e3e"/>
<circle cx="567.9" cy="827.0" r="3" fill="#d0d0d0" opacity="0.5"/><circle cx="567.9" cy="826.4" r="2.55" fill="#3e3e3e"/>
<circle cx="580.7" cy="827.0" r="3" fill="#d0d0d0" opacity="0.5"/><circle cx="580.7" cy="826.4" r="2.55" fill="#3e3e3e"/>
<circle cx="593.5" cy="827.0" r="3" fill="#d0d0d0" opacity="0.5"/><circle cx="593.5" cy="826.4" r="2.55" fill="#3e3e3e"/>
<circle cx="606.3" cy="827.0" r="3" fill="#d0d0d0" opacity="0.5"/><circle cx="606.3" cy="826.4" r="2.55" fill="#3e3e3e"/>
<circle cx="619.1" cy="827.0" r="3" fill="#d0d0d0" opacity="0.5"/><circle cx="619.1" cy="826.4" r="2.55" fill="#3e3e3e"/>
<circle cx="631.9" cy="827.0" r="3" fill="#d0d0d0" opacity="0.5"/><circle cx="631.9" cy="826.4" r="2.55" fill="#3e3e3e"/>
<circle cx="644.7" cy="827.0" r="3" fill="#d0d0d0" opacity="0.5"/><circle cx="644.7" cy="826.4" r="2.55" fill="#3e3e3e"/>
<circle cx="657.5" cy="827.0" r="3" fill="#d0d0d0" opacity="0.5"/><circle cx="657.5" cy="826.4" r="2.55" fill="#3e3e3e"/>
<circle cx="670.3" cy="827.0" r="3" fill="#d0d0d0" opacity="0.5"/><circle cx="670.3" cy="826.4" r="2.55" fill="#3e3e3e"/>
<circle cx="683.1" cy="827.0" r="3" fill="#d0d0d0" opacity="0.5"/><circle cx="683.1" cy="826.4" r="2.55" fill="#3e3e3e"/>
<circle cx="695.9" cy="827.0" r="3" fill="#d0d0d0" opacity="0.5"/><circle cx="695.9" cy="826.4" r="2.55" fill="#3e3e3e"/>
<circle cx="708.7" cy="827.0" r="3" fill="#d0d0d0" opacity="0.5"/><circle cx="708.7" cy="826.4" r="2.55" fill="#3e3e3e"/>
<circle cx="721.5" cy="827.0" r="3" fill="#d0d0d0" opacity="0.5"/><circle cx="721.5" cy="826.4" r="2.55" fill="#3e3e3e"/>
<circle cx="734.3" cy="827.0" r="3" fill="#d0d0d0" opacity="0.5"/><circle cx="734.3" cy="826.4" r="2.55" fill="#3e3e3e"/>
<circle cx="747.1" cy="827.0" r="3" fill="#d0d0d0" opacity="0.5"/><circle cx="747.1" cy="826.4" r="2.55" fill="#3e3e3e"/>
<circle cx="759.9" cy="827.0" r="3" fill="#d0d0d0" opacity="0.5"/><circle cx="759.9" cy="826.4" r="2.55" fill="#3e3e3e"/>
<circle cx="772.7" cy="827.0" r="3" fill="#d0d0d0" opacity="0.5"/><circle cx="772.7" cy="826.4" r="2.55" fill="#3e3e3e"/>
<circle cx="785.5" cy="827.0" r="3" fill="#d0d0d0" opacity="0.5"/><circle cx="785.5" cy="826.4" r="2.55" fill="#3e3e3e"/>
<circle cx="798.3" cy="827.0" r="3" fill="#d0d0d0" opacity="0.5"/><circle cx="798.3" cy="826.4" r="2.55" fill="#3e3e3e"/>
<circle cx="811.1" cy="827.0" r="3" fill="#d0d0d0" opacity="0.5"/><circle cx="811.1" cy="826.4" r="2.55" fill="#3e3e3e"/>
<circle cx="823.9" cy="827.0" r="3" fill="#d0d0d0" opacity="0.5"/><circle cx="823.9" cy="826.4" r="2.55" fill="#3e3e3e"/>
<circle cx="836.7" cy="827.0" r="3" fill="#d0d0d0" opacity="0.5"/><circle cx="836.7" cy="826.4" r="2.55" fill="#3e3e3e"/>
<circle cx="849.5" cy="827.0" r="3" fill="#d0d0d0" opacity="0.5"/><circle cx="849.5" cy="826.4" r="2.55" fill="#3e3e3e"/>
<circle cx="862.3" cy="827.0" r="3" fill="#d0d0d0" opacity="0.5"/><circle cx="862.3" cy="826.4" r="2.55" fill="#3e3e3e"/>
<circle cx="875.1" cy="827.0" r="3" fill="#d0d0d0" opacity="0.5"/><circle cx="875.1" cy="826.4" r="2.55" fill="#3e3e3e"/>
<circle cx="887.9" cy="827.0" r="3" fill="#d0d0d0" opacity="0.5"/><circle cx="887.9" cy="826.4" r="2.55" fill="#3e3e3e"/>
<circle cx="900.7" cy="827.0" r="3" fill="#d0d0d0" opacity="0.5"/><circle cx="900.7" cy="826.4" r="2.55" fill="#3e3e3e"/>
<circle cx="913.5" cy="827.0" r="3" fill="#d0d0d0" opacity="0.5"/><circle cx="913.5" cy="826.4" r="2.55" fill="#3e3e3e"/>
<circle cx="926.3" cy="827.0" r="3" fill="#d0d0d0" opacity="0.5"/><circle cx="926.3" cy="826.4" r="2.55" fill="#3e3e3e"/>
<circle cx="939.1" cy="827.0" r="3" fill="#d0d0d0" opacity="0.5"/><circle cx="939.1" cy="826.4" r="2.55" fill="#3e3e3e"/>
<circle cx="951.9" cy="827.0" r="3" fill="#d0d0d0" opacity="0.5"/><circle cx="951.9" cy="826.4" r="2.55" fill="#3e3e3e"/>
<circle cx="964.7" cy="827.0" r="3" fill="#d0d0d0" opacity="0.5"/><circle cx="964.7" cy="826.4" r="2.55" fill="#3e3e3e"/>
<circle cx="977.5" cy="827.0" r="3" fill="#d0d0d0" opacity="0.5"/><circle cx="977.5" cy="826.4" r="2.55" fill="#3e3e3e"/>
<circle cx="990.3" cy="827.0" r="3" fill="#d0d0d0" opacity="0.5"/><circle cx="990.3" cy="826.4" r="2.55" fill="#3e3e3e"/>
<circle cx="1003.1" cy="827.0" r="3" fill="#d0d0d0" opacity="0.5"/><circle cx="1003.1" cy="826.4" r="2.55" fill="#3e3e3e"/>
<circle cx="1015.9" cy="827.0" r="3" fill="#d0d0d0" opacity="0.5"/><circle cx="1015.9" cy="826.4" r="2.55" fill="#3e3e3e"/>
<circle cx="1028.7" cy="827.0" r="3" fill="#d0d0d0" opacity="0.5"/><circle cx="1028.7" cy="826.4" r="2.55" fill="#3e3e3e"/>
<circle cx="1041.5" cy="827.0" r="3" fill="#d0d0d0" opacity="0.5"/><circle cx="1041.5" cy="826.4" r="2.55" fill="#3e3e3e"/>
<circle cx="1054.3" cy="827.0" r="3" fill="#d0d0d0" opacity="0.5"/><circle cx="1054.3" cy="826.4" r="2.55" fill="#3e3e3e"/>
<circle cx="1067.1" cy="827.0" r="3" fill="#d0d0d0" opacity="0.5"/><circle cx="1067.1" cy="826.4" r="2.55" fill="#3e3e3e"/>
<circle cx="1079.9" cy="827.0" r="3" fill="#d0d0d0" opacity="0.5"/><circle cx="1079.9" cy="826.4" r="2.55" fill="#3e3e3e"/>
<circle cx="1092.7" cy="827.0" r="3" fill="#d0d0d0" opacity="0.5"/><circle cx="1092.7" cy="826.4" r="2.55" fill="#3e3e3e"/>
<circle cx="1105.5" cy="827.0" r="3" fill="#d0d0d0" opacity="0.5"/><circle cx="1105.5" cy="826.4" r="2.55" fill="#3e3e3e"/>
<circle cx="1118.3" cy="827.0" r="3" fill="#d0d0d0" opacity="0.5"/><circle cx="1118.3" cy="826.4" r="2.55" fill="#3e3e3e"/>
<circle cx="1131.1" cy="827.0" r="3" fill="#d0d0d0" opacity="0.5"/><circle cx="1131.1" cy="826.4" r="2.55" fill="#3e3e3e"/>
<circle cx="1143.9" cy="827.0" r="3" fill="#d0d0d0" opacity="0.5"/><circle cx="1143.9" cy="826.4" r="2.55" fill="#3e3e3e"/>
<circle cx="1156.7" cy="827.0" r="3" fill="#d0d0d0" opacity="0.5"/><circle cx="1156.7" cy="826.4" r="2.55" fill="#3e3e3e"/>
<circle cx="1169.5" cy="827.0" r="3" fill="#d0d0d0" opacity="0.5"/><circle cx="1169.5" cy="826.4" r="2.55" fill="#3e3e3e"/>
<circle cx="1182.3" cy="827.0" r="3" fill="#d0d0d0" opacity="0.5"/><circle cx="1182.3" cy="826.4" r="2.55" fill="#3e3e3e"/>
<circle cx="1195.1" cy="827.0" r="3" fill="#d0d0d0" opacity="0.5"/><circle cx="1195.1" cy="826.4" r="2.55" fill="#3e3e3e"/>
<circle cx="1207.9" cy="827.0" r="3" fill="#d0d0d0" opacity="0.5"/><circle cx="1207.9" cy="826.4" r="2.55" fill="#3e3e3e"/>
<circle cx="1220.7" cy="827.0" r="3" fill="#d0d0d0" opacity="0.5"/><circle cx="1220.7" cy="826.4" r="2.55" fill="#3e3e3e"/>
<circle cx="1233.5" cy="827.0" r="3" fill="#d0d0d0" opacity="0.5"/><circle cx="1233.5" cy="826.4" r="2.55" fill="#3e3e3e"/>
<circle cx="1246.3" cy="827.0" r="3" fill="#d0d0d0" opacity="0.5"/><circle cx="1246.3" cy="826.4" r="2.55" fill="#3e3e3e"/>
<circle cx="1259.1" cy="827.0" r="3" fill="#d0d0d0" opacity="0.5"/><circle cx="1259.1" cy="826.4" r="2.55" fill="#3e3e3e"/>
<circle cx="1271.9" cy="827.0" r="3" fill="#d0d0d0" opacity="0.5"/><circle cx="1271.9" cy="826.4" r="2.55" fill="#3e3e3e"/>
<circle cx="1284.7" cy="827.0" r="3" fill="#d0d0d0" opacity="0.5"/><circle cx="1284.7" cy="826.4" r="2.55" fill="#3e3e3e"/>
<circle cx="1297.5" cy="827.0" r="3" fill="#d0d0d0" opacity="0.5"/><circle cx="1297.5" cy="826.4" r="2.55" fill="#3e3e3e"/>
<circle cx="1310.3" cy="827.0" r="3" fill="#d0d0d0" opacity="0.5"/><circle cx="1310.3" cy="826.4" r="2.55" fill="#3e3e3e"/>
<circle cx="1323.1" cy="827.0" r="3" fill="#d0d0d0" opacity="0.5"/><circle cx="1323.1" cy="826.4" r="2.55" fill="#3e3e3e"/>
<circle cx="1335.9" cy="827.0" r="3" fill="#d0d0d0" opacity="0.5"/><circle cx="1335.9" cy="826.4" r="2.55" fill="#3e3e3e"/>
<circle cx="1348.7" cy="827.0" r="3" fill="#d0d0d0" opacity="0.5"/><circle cx="1348.7" cy="826.4" r="2.55" fill="#3e3e3e"/>
<circle cx="1361.5" cy="827.0" r="3" fill="#d0d0d0" opacity="0.5"/><circle cx="1361.5" cy="826.4" r="2.55" fill="#3e3e3e"/>
<circle cx="1374.3" cy="827.0" r="3" fill="#d0d0d0" opacity="0.5"/><circle cx="1374.3" cy="826.4" r="2.55" fill="#3e3e3e"/>
<circle cx="1387.1" cy="827.0" r="3" fill="#d0d0d0" opacity="0.5"/><circle cx="1387.1" cy="826.4" r="2.55" fill="#3e3e3e"/>
<circle cx="1399.9" cy="827.0" r="3" fill="#d0d0d0" opacity="0.5"/><circle cx="1399.9" cy="826.4" r="2.55" fill="#3e3e3e"/>
<circle cx="1412.7" cy="827.0" r="3" fill="#d0d0d0" opacity="0.5"/><circle cx="1412.7" cy="826.4" r="2.55" fill="#3e3e3e"/>
<circle cx="1425.5" cy="827.0" r="3" fill="#d0d0d0" opacity="0.5"/><circle cx="1425.5" cy="826.4" r="2.55" fill="#3e3e3e"/>
<circle cx="1438.3" cy="827.0" r="3" fill="#d0d0d0" opacity="0.5"/><circle cx="1438.3" cy="826.4" r="2.55" fill="#3e3e3e"/>
<circle cx="1451.1" cy="827.0" r="3" fill="#d0d0d0" opacity="0.5"/><circle cx="1451.1" cy="826.4" r="2.55" fill="#3e3e3e"/>
<circle cx="1463.9" cy="827.0" r="3" fill="#d0d0d0" opacity="0.5"/><circle cx="1463.9" cy="826.4" r="2.55" fill="#3e3e3e"/>
<circle cx="1476.7" cy="827.0" r="3" fill="#d0d0d0" opacity="0.5"/><circle cx="1476.7" cy="826.4" r="2.55" fill="#3e3e3e"/>
<rect x="0" y="843" width="1500" height="1" fill="#c6c6c6"/>
<line x1="1486" y1="844" x2="1501" y2="829" stroke="#d8d8d8" stroke-width="1.4"/>
<line x1="1488" y1="844" x2="1501" y2="831" stroke="#6a6a6a" stroke-width="1"/>
<line x1="1490.5" y1="844" x2="1501" y2="833.5" stroke="#d0d0d0" stroke-width="1.2"/>
<line x1="1492.5" y1="844" x2="1501" y2="835.5" stroke="#707070" stroke-width="1"/>
</svg></body></html>
